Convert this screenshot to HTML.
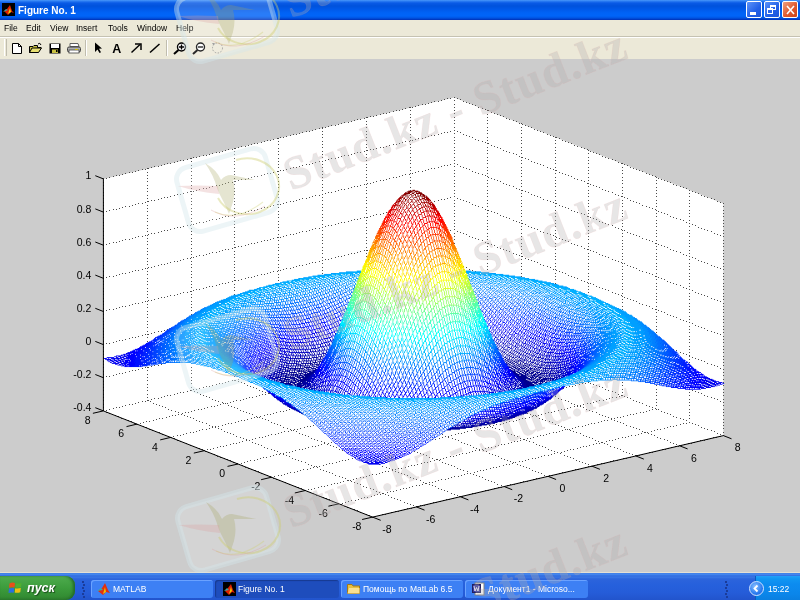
<!DOCTYPE html>
<html><head><meta charset="utf-8"><style>
*{margin:0;padding:0;box-sizing:border-box}
body{width:800px;height:600px;overflow:hidden;position:relative;background:#cccccc;font-family:"Liberation Sans",sans-serif}
.a{position:absolute}
</style></head><body>
<svg class="a" width="800" height="600" style="left:0;top:0" font-family="Liberation Sans" font-size="10.5">
<polygon fill="#fff" points="103.4,178.9 454.2,97.4 723.4,203.6 723.4,435.6 372.6,517.1 103.4,410.9"/>
<path d="M103 178.5h1M103 182.5h1M103 185.5h1M103 188.5h1M103 192.5h1M103 195.5h1M103 198.5h1M103 202.5h1M103 205.5h1M103 208.5h1M103 212.5h1M103 215.5h1M103 218.5h1M103 222.5h1M103 225.5h1M103 228.5h1M103 231.5h1M103 235.5h1M103 238.5h1M103 241.5h1M103 245.5h1M103 248.5h1M103 251.5h1M103 255.5h1M103 258.5h1M103 261.5h1M103 265.5h1M103 268.5h1M103 271.5h1M103 275.5h1M103 278.5h1M103 281.5h1M103 284.5h1M103 288.5h1M103 291.5h1M103 294.5h1M103 298.5h1M103 301.5h1M103 304.5h1M103 308.5h1M103 311.5h1M103 314.5h1M103 318.5h1M103 321.5h1M103 324.5h1M103 328.5h1M103 331.5h1M103 334.5h1M103 337.5h1M103 341.5h1M103 344.5h1M103 347.5h1M103 351.5h1M103 354.5h1M103 357.5h1M103 361.5h1M103 364.5h1M103 367.5h1M103 371.5h1M103 374.5h1M103 377.5h1M103 381.5h1M103 384.5h1M103 387.5h1M103 390.5h1M103 394.5h1M103 397.5h1M103 400.5h1M103 404.5h1M103 407.5h1M103 410.5h1M106 178.5h1M106 211.5h1M106 244.5h1M106 277.5h1M106 310.5h1M106 343.5h1M106 376.5h1M106 410.5h1M106 412.5h1M109 177.5h1M109 210.5h1M109 243.5h1M109 276.5h1M109 309.5h1M109 343.5h1M109 376.5h1M109 409.5h1M109 413.5h1M112 414.5h1M113 176.5h1M113 209.5h1M113 242.5h1M113 276.5h1M113 309.5h1M113 342.5h1M113 375.5h1M113 408.5h1M115 415.5h1M116 175.5h1M116 209.5h1M116 242.5h1M116 275.5h1M116 308.5h1M116 341.5h1M116 374.5h1M116 407.5h1M118 416.5h1M119 175.5h1M119 208.5h1M119 241.5h1M119 274.5h1M119 307.5h1M119 340.5h1M119 373.5h1M119 407.5h1M121 418.5h1M122 174.5h1M122 207.5h1M122 240.5h1M122 273.5h1M122 306.5h1M122 340.5h1M122 373.5h1M122 406.5h1M125 173.5h1M125 206.5h1M125 239.5h1M125 273.5h1M125 306.5h1M125 339.5h1M125 372.5h1M125 405.5h1M125 419.5h1M128 420.5h1M129 172.5h1M129 206.5h1M129 239.5h1M129 272.5h1M129 305.5h1M129 338.5h1M129 371.5h1M129 404.5h1M131 421.5h1M132 172.5h1M132 205.5h1M132 238.5h1M132 271.5h1M132 304.5h1M132 337.5h1M132 370.5h1M132 404.5h1M134 423.5h1M135 171.5h1M135 204.5h1M135 237.5h1M135 270.5h1M135 303.5h1M135 337.5h1M135 370.5h1M135 403.5h1M137 424.5h1M138 170.5h1M138 203.5h1M138 236.5h1M138 270.5h1M138 303.5h1M138 336.5h1M138 369.5h1M138 402.5h1M140 423.5h1M140 425.5h1M142 169.5h1M142 203.5h1M142 236.5h1M142 269.5h1M142 302.5h1M142 335.5h1M142 368.5h1M142 401.5h1M143 422.5h1M143 426.5h1M145 169.5h1M145 202.5h1M145 235.5h1M145 268.5h1M145 301.5h1M145 334.5h1M145 367.5h1M145 401.5h1M146 421.5h1M146 427.5h1M147 168.5h1M147 172.5h1M147 175.5h1M147 178.5h1M147 181.5h1M147 185.5h1M147 188.5h1M147 191.5h1M147 195.5h1M147 198.5h1M147 201.5h1M147 205.5h1M147 208.5h1M147 211.5h1M147 215.5h1M147 218.5h1M147 221.5h1M147 225.5h1M147 228.5h1M147 231.5h1M147 235.5h1M147 238.5h1M147 241.5h1M147 244.5h1M147 248.5h1M147 251.5h1M147 254.5h1M147 258.5h1M147 261.5h1M147 264.5h1M147 268.5h1M147 271.5h1M147 274.5h1M147 278.5h1M147 281.5h1M147 284.5h1M147 288.5h1M147 291.5h1M147 294.5h1M147 297.5h1M147 301.5h1M147 304.5h1M147 307.5h1M147 311.5h1M147 314.5h1M147 317.5h1M147 321.5h1M147 324.5h1M147 327.5h1M147 331.5h1M147 334.5h1M147 337.5h1M147 341.5h1M147 344.5h1M147 347.5h1M147 350.5h1M147 354.5h1M147 357.5h1M147 360.5h1M147 364.5h1M147 367.5h1M147 370.5h1M147 374.5h1M147 377.5h1M147 380.5h1M147 384.5h1M147 387.5h1M147 390.5h1M147 394.5h1M147 397.5h1M147 400.5h1M148 168.5h1M148 201.5h1M148 234.5h1M148 267.5h1M148 300.5h1M148 334.5h1M148 367.5h1M148 400.5h1M149 421.5h1M149 429.5h1M150 401.5h1M151 167.5h1M151 200.5h1M151 233.5h1M151 267.5h1M151 300.5h1M151 333.5h1M151 366.5h1M151 399.5h1M152 430.5h1M153 403.5h1M153 420.5h1M154 166.5h1M154 200.5h1M154 233.5h1M154 266.5h1M154 299.5h1M154 332.5h1M154 365.5h1M154 398.5h1M155 431.5h1M156 404.5h1M156 419.5h1M158 166.5h1M158 199.5h1M158 232.5h1M158 265.5h1M158 298.5h1M158 331.5h1M158 365.5h1M158 398.5h1M159 405.5h1M159 418.5h1M159 432.5h1M161 165.5h1M161 198.5h1M161 231.5h1M161 264.5h1M161 297.5h1M161 331.5h1M161 364.5h1M161 397.5h1M162 406.5h1M162 418.5h1M162 434.5h1M164 164.5h1M164 197.5h1M164 230.5h1M164 264.5h1M164 297.5h1M164 330.5h1M164 363.5h1M164 396.5h1M165 407.5h1M165 435.5h1M166 417.5h1M167 163.5h1M167 197.5h1M167 230.5h1M167 263.5h1M167 296.5h1M167 329.5h1M167 362.5h1M167 395.5h1M168 409.5h1M168 436.5h1M169 416.5h1M170 163.5h1M170 196.5h1M170 229.5h1M170 262.5h1M170 295.5h1M170 328.5h1M170 362.5h1M170 395.5h1M170 437.5h1M171 410.5h1M171 437.5h1M172 415.5h1M173 436.5h1M174 162.5h1M174 195.5h1M174 228.5h1M174 261.5h1M174 295.5h1M174 328.5h1M174 361.5h1M174 394.5h1M174 438.5h1M175 411.5h1M175 415.5h1M177 161.5h1M177 194.5h1M177 227.5h1M177 261.5h1M177 294.5h1M177 327.5h1M177 360.5h1M177 393.5h1M177 435.5h1M177 440.5h1M178 412.5h1M178 414.5h1M180 160.5h1M180 194.5h1M180 227.5h1M180 260.5h1M180 293.5h1M180 326.5h1M180 359.5h1M180 392.5h1M180 435.5h1M180 441.5h1M181 414.5h1M182 413.5h1M183 160.5h1M183 193.5h1M183 226.5h1M183 259.5h1M183 292.5h1M183 325.5h1M183 359.5h1M183 392.5h1M183 434.5h1M183 442.5h1M184 415.5h1M185 412.5h1M186 433.5h1M186 443.5h1M187 159.5h1M187 192.5h1M187 225.5h1M187 258.5h1M187 292.5h1M187 325.5h1M187 358.5h1M187 391.5h1M187 416.5h1M188 412.5h1M190 158.5h1M190 191.5h1M190 225.5h1M190 258.5h1M190 291.5h1M190 324.5h1M190 357.5h1M190 390.5h1M190 417.5h1M190 432.5h1M190 445.5h1M191 158.5h1M191 161.5h1M191 165.5h1M191 168.5h1M191 171.5h1M191 175.5h1M191 178.5h1M191 181.5h1M191 185.5h1M191 188.5h1M191 191.5h1M191 194.5h1M191 198.5h1M191 201.5h1M191 204.5h1M191 208.5h1M191 211.5h1M191 214.5h1M191 218.5h1M191 221.5h1M191 224.5h1M191 228.5h1M191 231.5h1M191 234.5h1M191 238.5h1M191 241.5h1M191 244.5h1M191 248.5h1M191 251.5h1M191 254.5h1M191 257.5h1M191 261.5h1M191 264.5h1M191 267.5h1M191 271.5h1M191 274.5h1M191 277.5h1M191 281.5h1M191 284.5h1M191 287.5h1M191 291.5h1M191 294.5h1M191 297.5h1M191 301.5h1M191 304.5h1M191 307.5h1M191 310.5h1M191 314.5h1M191 317.5h1M191 320.5h1M191 324.5h1M191 327.5h1M191 330.5h1M191 334.5h1M191 337.5h1M191 340.5h1M191 344.5h1M191 347.5h1M191 350.5h1M191 354.5h1M191 357.5h1M191 360.5h1M191 363.5h1M191 367.5h1M191 370.5h1M191 373.5h1M191 377.5h1M191 380.5h1M191 383.5h1M191 387.5h1M191 390.5h1M191 411.5h1M193 157.5h1M193 191.5h1M193 224.5h1M193 257.5h1M193 290.5h1M193 323.5h1M193 356.5h1M193 389.5h1M193 418.5h1M193 432.5h1M193 446.5h1M194 391.5h1M194 410.5h1M196 157.5h1M196 190.5h1M196 223.5h1M196 256.5h1M196 289.5h1M196 322.5h1M196 356.5h1M196 389.5h1M196 420.5h1M196 431.5h1M196 447.5h1M197 392.5h1M198 409.5h1M199 156.5h1M199 189.5h1M199 222.5h1M199 255.5h1M199 289.5h1M199 322.5h1M199 355.5h1M199 388.5h1M199 421.5h1M199 430.5h1M199 448.5h1M200 394.5h1M201 409.5h1M202 422.5h1M202 429.5h1M202 449.5h1M203 155.5h1M203 188.5h1M203 222.5h1M203 255.5h1M203 288.5h1M203 321.5h1M203 354.5h1M203 387.5h1M203 395.5h1M204 408.5h1M204 450.5h1M205 451.5h1M206 155.5h1M206 188.5h1M206 221.5h1M206 254.5h1M206 287.5h1M206 320.5h1M206 353.5h1M206 386.5h1M206 396.5h1M206 423.5h1M206 429.5h1M207 407.5h1M207 449.5h1M208 452.5h1M209 154.5h1M209 187.5h1M209 220.5h1M209 253.5h1M209 286.5h1M209 319.5h1M209 353.5h1M209 386.5h1M209 397.5h1M209 425.5h1M209 428.5h1M210 449.5h1M211 406.5h1M211 453.5h1M212 153.5h1M212 186.5h1M212 219.5h1M212 252.5h1M212 286.5h1M212 319.5h1M212 352.5h1M212 385.5h1M212 399.5h1M212 426.5h1M212 427.5h1M213 448.5h1M214 406.5h1M214 454.5h1M215 400.5h1M215 426.5h1M215 427.5h1M216 152.5h1M216 185.5h1M216 219.5h1M216 252.5h1M216 285.5h1M216 318.5h1M216 351.5h1M216 384.5h1M217 405.5h1M217 447.5h1M217 456.5h1M218 401.5h1M218 426.5h1M218 428.5h1M219 152.5h1M219 185.5h1M219 218.5h1M219 251.5h1M219 284.5h1M219 317.5h1M219 350.5h1M219 383.5h1M220 404.5h1M220 446.5h1M220 457.5h1M221 429.5h1M222 151.5h1M222 184.5h1M222 217.5h1M222 250.5h1M222 283.5h1M222 316.5h1M222 350.5h1M222 383.5h1M222 402.5h1M222 425.5h1M223 403.5h1M223 446.5h1M224 431.5h1M224 458.5h1M225 150.5h1M225 183.5h1M225 216.5h1M225 249.5h1M225 283.5h1M225 316.5h1M225 349.5h1M225 382.5h1M225 403.5h1M225 424.5h1M226 445.5h1M227 403.5h1M227 432.5h1M227 459.5h1M228 149.5h1M228 182.5h1M228 216.5h1M228 249.5h1M228 282.5h1M228 315.5h1M228 348.5h1M228 381.5h1M228 405.5h1M228 423.5h1M230 402.5h1M230 433.5h1M230 444.5h1M230 460.5h1M231 406.5h1M231 423.5h1M232 149.5h1M232 182.5h1M232 215.5h1M232 248.5h1M232 281.5h1M232 314.5h1M232 347.5h1M232 380.5h1M233 401.5h1M233 434.5h1M233 443.5h1M233 462.5h1M234 148.5h1M234 151.5h1M234 154.5h1M234 158.5h1M234 161.5h1M234 164.5h1M234 168.5h1M234 171.5h1M234 174.5h1M234 178.5h1M234 181.5h1M234 184.5h1M234 188.5h1M234 191.5h1M234 194.5h1M234 198.5h1M234 201.5h1M234 204.5h1M234 208.5h1M234 211.5h1M234 214.5h1M234 217.5h1M234 221.5h1M234 224.5h1M234 227.5h1M234 231.5h1M234 234.5h1M234 237.5h1M234 241.5h1M234 244.5h1M234 247.5h1M234 251.5h1M234 254.5h1M234 257.5h1M234 261.5h1M234 264.5h1M234 267.5h1M234 270.5h1M234 274.5h1M234 277.5h1M234 280.5h1M234 284.5h1M234 287.5h1M234 290.5h1M234 294.5h1M234 297.5h1M234 300.5h1M234 304.5h1M234 307.5h1M234 310.5h1M234 314.5h1M234 317.5h1M234 320.5h1M234 323.5h1M234 327.5h1M234 330.5h1M234 333.5h1M234 337.5h1M234 340.5h1M234 343.5h1M234 347.5h1M234 350.5h1M234 353.5h1M234 357.5h1M234 360.5h1M234 363.5h1M234 367.5h1M234 370.5h1M234 373.5h1M234 376.5h1M234 380.5h1M234 407.5h1M235 148.5h1M235 181.5h1M235 214.5h1M235 247.5h1M235 280.5h1M235 313.5h1M235 347.5h1M235 380.5h1M235 422.5h1M236 400.5h1M236 436.5h1M236 443.5h1M236 463.5h1M237 408.5h1M237 463.5h1M238 147.5h1M238 180.5h1M238 213.5h1M238 246.5h1M238 280.5h1M238 313.5h1M238 346.5h1M238 379.5h1M238 381.5h1M238 421.5h1M239 442.5h1M239 464.5h1M240 400.5h1M240 410.5h1M240 437.5h1M241 146.5h1M241 179.5h1M241 213.5h1M241 246.5h1M241 279.5h1M241 312.5h1M241 345.5h1M241 378.5h1M241 382.5h1M241 420.5h1M241 463.5h1M242 441.5h1M242 465.5h1M243 399.5h1M243 411.5h1M243 438.5h1M244 383.5h1M244 420.5h1M244 462.5h1M245 146.5h1M245 179.5h1M245 212.5h1M245 245.5h1M245 278.5h1M245 311.5h1M245 344.5h1M245 377.5h1M245 467.5h1M246 398.5h1M246 412.5h1M246 439.5h1M246 440.5h1M247 385.5h1M247 419.5h1M247 461.5h1M248 145.5h1M248 178.5h1M248 211.5h1M248 244.5h1M248 277.5h1M248 310.5h1M248 344.5h1M248 377.5h1M248 468.5h1M249 397.5h1M249 413.5h1M249 440.5h1M250 386.5h1M250 460.5h1M251 144.5h1M251 177.5h1M251 210.5h1M251 243.5h1M251 277.5h1M251 310.5h1M251 343.5h1M251 376.5h1M251 418.5h1M251 469.5h1M252 397.5h1M252 414.5h1M252 439.5h1M252 442.5h1M253 387.5h1M254 143.5h1M254 176.5h1M254 210.5h1M254 243.5h1M254 276.5h1M254 309.5h1M254 342.5h1M254 375.5h1M254 417.5h1M254 460.5h1M255 438.5h1M255 443.5h1M255 470.5h1M256 388.5h1M256 396.5h1M256 416.5h1M257 143.5h1M257 176.5h1M257 209.5h1M257 242.5h1M257 275.5h1M257 308.5h1M257 341.5h1M257 374.5h1M257 417.5h1M257 459.5h1M258 444.5h1M258 471.5h1M259 390.5h1M259 395.5h1M259 417.5h1M259 437.5h1M260 416.5h1M260 458.5h1M261 142.5h1M261 175.5h1M261 208.5h1M261 241.5h1M261 274.5h1M261 307.5h1M261 341.5h1M261 374.5h1M261 445.5h1M261 473.5h1M262 391.5h1M262 394.5h1M262 418.5h1M262 437.5h1M263 457.5h1M264 141.5h1M264 174.5h1M264 207.5h1M264 240.5h1M264 274.5h1M264 307.5h1M264 340.5h1M264 373.5h1M264 415.5h1M264 447.5h1M264 474.5h1M265 392.5h1M265 394.5h1M265 419.5h1M265 436.5h1M266 457.5h1M267 140.5h1M267 173.5h1M267 207.5h1M267 240.5h1M267 273.5h1M267 306.5h1M267 339.5h1M267 372.5h1M267 414.5h1M267 448.5h1M267 475.5h1M268 393.5h1M268 420.5h1M268 435.5h1M269 393.5h1M270 140.5h1M270 173.5h1M270 206.5h1M270 239.5h1M270 272.5h1M270 305.5h1M270 338.5h1M270 371.5h1M270 414.5h1M270 456.5h1M270 476.5h1M271 422.5h1M271 434.5h1M271 449.5h1M271 477.5h1M272 392.5h1M272 394.5h1M273 139.5h1M273 172.5h1M273 205.5h1M273 238.5h1M273 271.5h1M273 304.5h1M273 338.5h1M273 371.5h1M273 413.5h1M273 455.5h1M273 478.5h1M274 423.5h1M274 450.5h1M274 476.5h1M275 391.5h1M275 396.5h1M275 434.5h1M276 412.5h1M276 454.5h1M276 479.5h1M277 138.5h1M277 171.5h1M277 204.5h1M277 237.5h1M277 271.5h1M277 304.5h1M277 337.5h1M277 370.5h1M277 424.5h1M277 451.5h1M278 138.5h1M278 141.5h1M278 144.5h1M278 148.5h1M278 151.5h1M278 154.5h1M278 158.5h1M278 161.5h1M278 164.5h1M278 167.5h1M278 171.5h1M278 174.5h1M278 177.5h1M278 181.5h1M278 184.5h1M278 187.5h1M278 191.5h1M278 194.5h1M278 197.5h1M278 201.5h1M278 204.5h1M278 207.5h1M278 211.5h1M278 214.5h1M278 217.5h1M278 221.5h1M278 224.5h1M278 227.5h1M278 230.5h1M278 234.5h1M278 237.5h1M278 240.5h1M278 244.5h1M278 247.5h1M278 250.5h1M278 254.5h1M278 257.5h1M278 260.5h1M278 264.5h1M278 267.5h1M278 270.5h1M278 274.5h1M278 277.5h1M278 280.5h1M278 283.5h1M278 287.5h1M278 290.5h1M278 293.5h1M278 297.5h1M278 300.5h1M278 303.5h1M278 307.5h1M278 310.5h1M278 313.5h1M278 317.5h1M278 320.5h1M278 323.5h1M278 327.5h1M278 330.5h1M278 333.5h1M278 336.5h1M278 340.5h1M278 343.5h1M278 346.5h1M278 350.5h1M278 353.5h1M278 356.5h1M278 360.5h1M278 363.5h1M278 366.5h1M278 370.5h1M278 391.5h1M278 397.5h1M278 433.5h1M278 475.5h1M279 454.5h1M279 480.5h1M280 137.5h1M280 170.5h1M280 204.5h1M280 237.5h1M280 270.5h1M280 303.5h1M280 336.5h1M280 369.5h1M280 411.5h1M280 425.5h1M280 453.5h1M281 371.5h1M281 390.5h1M281 398.5h1M281 432.5h1M281 475.5h1M282 481.5h1M283 137.5h1M283 170.5h1M283 203.5h1M283 236.5h1M283 269.5h1M283 302.5h1M283 335.5h1M283 368.5h1M283 411.5h1M283 427.5h1M283 453.5h1M283 454.5h1M284 372.5h1M284 399.5h1M284 431.5h1M284 474.5h1M285 389.5h1M285 482.5h1M286 136.5h1M286 169.5h1M286 202.5h1M286 235.5h1M286 268.5h1M286 301.5h1M286 335.5h1M286 368.5h1M286 410.5h1M286 452.5h1M286 455.5h1M287 401.5h1M287 428.5h1M287 473.5h1M288 373.5h1M288 388.5h1M288 431.5h1M289 409.5h1M289 452.5h1M289 456.5h1M289 484.5h1M290 135.5h1M290 168.5h1M290 201.5h1M290 234.5h1M290 268.5h1M290 301.5h1M290 334.5h1M290 367.5h1M290 402.5h1M290 429.5h1M290 472.5h1M291 374.5h1M291 388.5h1M291 430.5h1M292 408.5h1M292 451.5h1M292 458.5h1M292 485.5h1M293 134.5h1M293 167.5h1M293 201.5h1M293 234.5h1M293 267.5h1M293 300.5h1M293 333.5h1M293 366.5h1M293 403.5h1M293 430.5h1M294 376.5h1M294 387.5h1M294 429.5h1M294 472.5h1M295 450.5h1M295 459.5h1M295 486.5h1M296 134.5h1M296 167.5h1M296 200.5h1M296 233.5h1M296 266.5h1M296 299.5h1M296 332.5h1M296 365.5h1M296 404.5h1M296 408.5h1M296 431.5h1M297 377.5h1M297 386.5h1M297 429.5h1M297 471.5h1M298 460.5h1M298 487.5h1M299 133.5h1M299 166.5h1M299 199.5h1M299 232.5h1M299 265.5h1M299 298.5h1M299 332.5h1M299 365.5h1M299 405.5h1M299 407.5h1M299 433.5h1M299 449.5h1M300 378.5h1M300 428.5h1M300 470.5h1M301 385.5h1M301 461.5h1M301 488.5h1M302 132.5h1M302 165.5h1M302 198.5h1M302 231.5h1M302 265.5h1M302 298.5h1M302 331.5h1M302 364.5h1M302 406.5h1M302 434.5h1M302 449.5h1M303 379.5h1M303 407.5h1M303 469.5h1M304 385.5h1M304 427.5h1M304 490.5h1M305 406.5h1M305 435.5h1M305 448.5h1M305 462.5h1M305 490.5h1M306 131.5h1M306 164.5h1M306 198.5h1M306 231.5h1M306 264.5h1M306 297.5h1M306 330.5h1M306 363.5h1M306 381.5h1M306 408.5h1M307 384.5h1M307 426.5h1M307 469.5h1M307 491.5h1M308 436.5h1M308 447.5h1M308 464.5h1M308 489.5h1M309 131.5h1M309 164.5h1M309 197.5h1M309 230.5h1M309 263.5h1M309 296.5h1M309 329.5h1M309 362.5h1M309 382.5h1M309 405.5h1M309 409.5h1M310 383.5h1M310 426.5h1M310 468.5h1M310 492.5h1M311 438.5h1M311 465.5h1M311 489.5h1M312 130.5h1M312 163.5h1M312 196.5h1M312 229.5h1M312 262.5h1M312 295.5h1M312 329.5h1M312 362.5h1M312 383.5h1M312 404.5h1M312 410.5h1M312 446.5h1M313 425.5h1M313 467.5h1M313 493.5h1M314 383.5h1M314 439.5h1M314 466.5h1M314 488.5h1M315 129.5h1M315 162.5h1M315 195.5h1M315 228.5h1M315 262.5h1M315 295.5h1M315 328.5h1M315 361.5h1M315 384.5h1M315 403.5h1M315 412.5h1M315 446.5h1M316 424.5h1M316 466.5h1M316 495.5h1M317 382.5h1M317 440.5h1M317 467.5h1M318 403.5h1M318 413.5h1M318 445.5h1M318 487.5h1M319 128.5h1M319 161.5h1M319 195.5h1M319 228.5h1M319 261.5h1M319 294.5h1M319 327.5h1M319 360.5h1M319 385.5h1M319 466.5h1M319 496.5h1M320 381.5h1M320 423.5h1M320 469.5h1M321 402.5h1M321 414.5h1M321 441.5h1M321 444.5h1M321 486.5h1M322 127.5h1M322 128.5h1M322 131.5h1M322 134.5h1M322 137.5h1M322 141.5h1M322 144.5h1M322 147.5h1M322 151.5h1M322 154.5h1M322 157.5h1M322 161.5h1M322 164.5h1M322 167.5h1M322 171.5h1M322 174.5h1M322 177.5h1M322 180.5h1M322 184.5h1M322 187.5h1M322 190.5h1M322 194.5h1M322 197.5h1M322 200.5h1M322 204.5h1M322 207.5h1M322 210.5h1M322 214.5h1M322 217.5h1M322 220.5h1M322 224.5h1M322 227.5h1M322 230.5h1M322 234.5h1M322 237.5h1M322 240.5h1M322 243.5h1M322 247.5h1M322 250.5h1M322 253.5h1M322 257.5h1M322 260.5h1M322 263.5h1M322 267.5h1M322 270.5h1M322 273.5h1M322 277.5h1M322 280.5h1M322 283.5h1M322 287.5h1M322 290.5h1M322 293.5h1M322 296.5h1M322 300.5h1M322 303.5h1M322 306.5h1M322 310.5h1M322 313.5h1M322 316.5h1M322 320.5h1M322 323.5h1M322 326.5h1M322 330.5h1M322 333.5h1M322 336.5h1M322 340.5h1M322 343.5h1M322 346.5h1M322 349.5h1M322 353.5h1M322 356.5h1M322 359.5h1M322 360.5h1M322 387.5h1M323 380.5h1M323 423.5h1M323 465.5h1M323 470.5h1M323 497.5h1M324 415.5h1M324 442.5h1M324 443.5h1M324 486.5h1M325 127.5h1M325 160.5h1M325 193.5h1M325 226.5h1M325 259.5h1M325 292.5h1M325 326.5h1M325 359.5h1M325 361.5h1M325 388.5h1M325 401.5h1M326 380.5h1M326 422.5h1M326 464.5h1M326 471.5h1M326 498.5h1M327 416.5h1M327 444.5h1M327 485.5h1M328 126.5h1M328 159.5h1M328 192.5h1M328 225.5h1M328 259.5h1M328 292.5h1M328 325.5h1M328 358.5h1M328 362.5h1M328 389.5h1M328 400.5h1M328 443.5h1M329 421.5h1M329 463.5h1M329 472.5h1M329 499.5h1M330 379.5h1M330 418.5h1M330 445.5h1M331 125.5h1M331 158.5h1M331 192.5h1M331 225.5h1M331 258.5h1M331 291.5h1M331 324.5h1M331 357.5h1M331 363.5h1M331 390.5h1M331 400.5h1M331 442.5h1M331 484.5h1M332 463.5h1M332 473.5h1M332 501.5h1M333 378.5h1M333 419.5h1M333 420.5h1M333 446.5h1M334 392.5h1M334 399.5h1M334 441.5h1M334 483.5h1M335 125.5h1M335 158.5h1M335 191.5h1M335 224.5h1M335 257.5h1M335 290.5h1M335 323.5h1M335 357.5h1M335 364.5h1M335 475.5h1M335 502.5h1M336 377.5h1M336 420.5h1M336 447.5h1M336 462.5h1M337 393.5h1M337 420.5h1M337 440.5h1M337 483.5h1M338 124.5h1M338 157.5h1M338 190.5h1M338 223.5h1M338 256.5h1M338 289.5h1M338 323.5h1M338 356.5h1M338 366.5h1M338 398.5h1M338 503.5h1M339 377.5h1M339 419.5h1M339 449.5h1M339 461.5h1M339 476.5h1M340 394.5h1M340 421.5h1M340 440.5h1M340 482.5h1M341 123.5h1M341 156.5h1M341 189.5h1M341 222.5h1M341 256.5h1M341 289.5h1M341 322.5h1M341 355.5h1M341 367.5h1M341 397.5h1M341 504.5h1M342 418.5h1M342 450.5h1M342 460.5h1M342 477.5h1M342 503.5h1M343 376.5h1M343 395.5h1M343 423.5h1M343 481.5h1M344 122.5h1M344 155.5h1M344 189.5h1M344 222.5h1M344 255.5h1M344 288.5h1M344 321.5h1M344 354.5h1M344 368.5h1M344 397.5h1M344 439.5h1M344 506.5h1M345 417.5h1M345 451.5h1M345 460.5h1M345 478.5h1M345 502.5h1M346 375.5h1M346 396.5h1M346 424.5h1M347 369.5h1M347 396.5h1M347 438.5h1M347 480.5h1M347 507.5h1M348 122.5h1M348 155.5h1M348 188.5h1M348 221.5h1M348 254.5h1M348 287.5h1M348 320.5h1M348 354.5h1M348 452.5h1M348 459.5h1M348 480.5h1M348 501.5h1M349 374.5h1M349 398.5h1M349 417.5h1M349 425.5h1M350 370.5h1M350 395.5h1M350 437.5h1M350 480.5h1M350 508.5h1M351 121.5h1M351 154.5h1M351 187.5h1M351 220.5h1M351 253.5h1M351 287.5h1M351 320.5h1M351 353.5h1M351 453.5h1M351 481.5h1M351 500.5h1M352 374.5h1M352 416.5h1M352 426.5h1M352 458.5h1M353 372.5h1M353 399.5h1M353 437.5h1M353 479.5h1M354 120.5h1M354 153.5h1M354 186.5h1M354 219.5h1M354 253.5h1M354 286.5h1M354 319.5h1M354 352.5h1M354 394.5h1M354 482.5h1M354 509.5h1M355 373.5h1M355 415.5h1M355 427.5h1M355 455.5h1M355 457.5h1M355 500.5h1M356 373.5h1M356 400.5h1M356 478.5h1M357 119.5h1M357 152.5h1M357 186.5h1M357 219.5h1M357 252.5h1M357 285.5h1M357 318.5h1M357 351.5h1M357 394.5h1M357 436.5h1M357 483.5h1M357 510.5h1M358 414.5h1M358 429.5h1M358 456.5h1M358 457.5h1M358 499.5h1M359 372.5h1M359 374.5h1M359 401.5h1M360 119.5h1M360 152.5h1M360 185.5h1M360 218.5h1M360 251.5h1M360 284.5h1M360 317.5h1M360 351.5h1M360 393.5h1M360 435.5h1M360 477.5h1M360 484.5h1M360 512.5h1M361 430.5h1M361 456.5h1M361 457.5h1M361 498.5h1M362 371.5h1M362 375.5h1M362 403.5h1M362 414.5h1M363 392.5h1M363 434.5h1M363 477.5h1M363 486.5h1M363 513.5h1M364 118.5h1M364 151.5h1M364 184.5h1M364 217.5h1M364 250.5h1M364 284.5h1M364 317.5h1M364 350.5h1M364 431.5h1M364 455.5h1M364 458.5h1M364 497.5h1M365 371.5h1M365 377.5h1M365 404.5h1M365 413.5h1M366 117.5h1M366 121.5h1M366 124.5h1M366 127.5h1M366 131.5h1M366 134.5h1M366 137.5h1M366 140.5h1M366 144.5h1M366 147.5h1M366 150.5h1M366 154.5h1M366 157.5h1M366 160.5h1M366 164.5h1M366 167.5h1M366 170.5h1M366 174.5h1M366 177.5h1M366 180.5h1M366 184.5h1M366 187.5h1M366 190.5h1M366 193.5h1M366 197.5h1M366 200.5h1M366 203.5h1M366 207.5h1M366 210.5h1M366 213.5h1M366 217.5h1M366 220.5h1M366 223.5h1M366 227.5h1M366 230.5h1M366 233.5h1M366 237.5h1M366 240.5h1M366 243.5h1M366 247.5h1M366 250.5h1M366 253.5h1M366 256.5h1M366 260.5h1M366 263.5h1M366 266.5h1M366 270.5h1M366 273.5h1M366 276.5h1M366 280.5h1M366 283.5h1M366 286.5h1M366 290.5h1M366 293.5h1M366 296.5h1M366 300.5h1M366 303.5h1M366 306.5h1M366 309.5h1M366 313.5h1M366 316.5h1M366 319.5h1M366 323.5h1M366 326.5h1M366 329.5h1M366 333.5h1M366 336.5h1M366 339.5h1M366 343.5h1M366 346.5h1M366 349.5h1M366 434.5h1M366 476.5h1M366 487.5h1M366 514.5h1M367 117.5h1M367 150.5h1M367 183.5h1M367 217.5h1M367 250.5h1M367 283.5h1M367 316.5h1M367 349.5h1M367 391.5h1M367 460.5h1M367 497.5h1M368 370.5h1M368 405.5h1M368 412.5h1M368 432.5h1M368 454.5h1M369 350.5h1M369 378.5h1M369 433.5h1M369 475.5h1M369 515.5h1M370 116.5h1M370 149.5h1M370 183.5h1M370 216.5h1M370 249.5h1M370 282.5h1M370 315.5h1M370 348.5h1M370 391.5h1M370 461.5h1M370 488.5h1M371 369.5h1M371 406.5h1M371 411.5h1M371 434.5h1M371 454.5h1M371 496.5h1M372 352.5h1M372 379.5h1M372 474.5h1M372 517.5h1M373 116.5h1M373 149.5h1M373 182.5h1M373 215.5h1M373 248.5h1M373 281.5h1M373 314.5h1M373 348.5h1M373 390.5h1M373 432.5h1M373 462.5h1M373 489.5h1M374 407.5h1M374 411.5h1M374 435.5h1M374 453.5h1M374 495.5h1M375 353.5h1M375 368.5h1M375 380.5h1M375 516.5h1M376 115.5h1M376 148.5h1M376 181.5h1M376 214.5h1M376 247.5h1M376 281.5h1M376 314.5h1M376 347.5h1M376 389.5h1M376 431.5h1M376 463.5h1M376 474.5h1M376 491.5h1M377 409.5h1M377 436.5h1M377 452.5h1M377 494.5h1M378 354.5h1M378 368.5h1M378 381.5h1M378 410.5h1M379 388.5h1M379 431.5h1M379 464.5h1M379 473.5h1M379 492.5h1M379 515.5h1M380 114.5h1M380 147.5h1M380 180.5h1M380 214.5h1M380 247.5h1M380 280.5h1M380 313.5h1M380 346.5h1M380 410.5h1M380 437.5h1M380 494.5h1M381 355.5h1M381 367.5h1M381 383.5h1M381 409.5h1M381 451.5h1M382 430.5h1M382 466.5h1M382 472.5h1M382 493.5h1M382 514.5h1M383 113.5h1M383 147.5h1M383 180.5h1M383 213.5h1M383 246.5h1M383 279.5h1M383 312.5h1M383 345.5h1M383 388.5h1M383 438.5h1M383 493.5h1M384 366.5h1M384 384.5h1M384 408.5h1M384 411.5h1M384 451.5h1M385 357.5h1M385 471.5h1M385 494.5h1M385 514.5h1M386 113.5h1M386 146.5h1M386 179.5h1M386 212.5h1M386 245.5h1M386 278.5h1M386 311.5h1M386 345.5h1M386 387.5h1M386 429.5h1M386 440.5h1M386 467.5h1M387 385.5h1M387 408.5h1M387 412.5h1M387 450.5h1M387 492.5h1M388 358.5h1M388 365.5h1M388 471.5h1M388 495.5h1M388 513.5h1M389 112.5h1M389 145.5h1M389 178.5h1M389 211.5h1M389 244.5h1M389 278.5h1M389 311.5h1M389 344.5h1M389 386.5h1M389 428.5h1M389 441.5h1M389 468.5h1M390 386.5h1M390 414.5h1M390 449.5h1M390 491.5h1M391 359.5h1M391 365.5h1M391 407.5h1M391 497.5h1M391 512.5h1M392 385.5h1M392 428.5h1M392 442.5h1M392 469.5h1M392 470.5h1M393 111.5h1M393 144.5h1M393 177.5h1M393 211.5h1M393 244.5h1M393 277.5h1M393 310.5h1M393 343.5h1M393 387.5h1M393 415.5h1M393 448.5h1M393 491.5h1M394 360.5h1M394 364.5h1M394 406.5h1M394 498.5h1M395 385.5h1M395 427.5h1M395 443.5h1M395 469.5h1M395 471.5h1M395 511.5h1M396 110.5h1M396 144.5h1M396 177.5h1M396 210.5h1M396 243.5h1M396 276.5h1M396 309.5h1M396 342.5h1M396 389.5h1M396 416.5h1M396 490.5h1M397 361.5h1M397 363.5h1M397 405.5h1M397 448.5h1M397 499.5h1M398 426.5h1M398 444.5h1M398 468.5h1M398 472.5h1M398 511.5h1M399 110.5h1M399 143.5h1M399 176.5h1M399 209.5h1M399 242.5h1M399 275.5h1M399 308.5h1M399 342.5h1M399 384.5h1M399 417.5h1M400 362.5h1M400 363.5h1M400 390.5h1M400 405.5h1M400 447.5h1M400 489.5h1M400 500.5h1M401 468.5h1M401 473.5h1M401 510.5h1M402 109.5h1M402 142.5h1M402 175.5h1M402 208.5h1M402 241.5h1M402 275.5h1M402 308.5h1M402 341.5h1M402 383.5h1M402 418.5h1M402 425.5h1M402 446.5h1M403 364.5h1M403 391.5h1M403 404.5h1M403 446.5h1M403 488.5h1M404 362.5h1M404 474.5h1M404 502.5h1M404 509.5h1M405 108.5h1M405 141.5h1M405 174.5h1M405 208.5h1M405 241.5h1M405 274.5h1M405 307.5h1M405 340.5h1M405 382.5h1M405 420.5h1M405 425.5h1M405 447.5h1M405 467.5h1M406 365.5h1M406 392.5h1M406 445.5h1M406 488.5h1M407 361.5h1M407 403.5h1M407 475.5h1M407 503.5h1M407 508.5h1M408 382.5h1M408 421.5h1M408 424.5h1M408 448.5h1M408 466.5h1M409 107.5h1M409 141.5h1M409 174.5h1M409 207.5h1M409 240.5h1M409 273.5h1M409 306.5h1M409 339.5h1M409 366.5h1M409 394.5h1M409 487.5h1M410 107.5h1M410 110.5h1M410 114.5h1M410 117.5h1M410 120.5h1M410 124.5h1M410 127.5h1M410 130.5h1M410 134.5h1M410 137.5h1M410 140.5h1M410 144.5h1M410 147.5h1M410 150.5h1M410 153.5h1M410 157.5h1M410 160.5h1M410 163.5h1M410 167.5h1M410 170.5h1M410 173.5h1M410 177.5h1M410 180.5h1M410 183.5h1M410 187.5h1M410 190.5h1M410 193.5h1M410 197.5h1M410 200.5h1M410 203.5h1M410 207.5h1M410 210.5h1M410 213.5h1M410 216.5h1M410 220.5h1M410 223.5h1M410 226.5h1M410 230.5h1M410 233.5h1M410 236.5h1M410 240.5h1M410 243.5h1M410 246.5h1M410 250.5h1M410 253.5h1M410 256.5h1M410 260.5h1M410 263.5h1M410 266.5h1M410 269.5h1M410 273.5h1M410 276.5h1M410 279.5h1M410 283.5h1M410 286.5h1M410 289.5h1M410 293.5h1M410 296.5h1M410 299.5h1M410 303.5h1M410 306.5h1M410 309.5h1M410 313.5h1M410 316.5h1M410 319.5h1M410 322.5h1M410 326.5h1M410 329.5h1M410 332.5h1M410 336.5h1M410 339.5h1M410 360.5h1M410 402.5h1M410 445.5h1M410 477.5h1M410 504.5h1M411 422.5h1M411 423.5h1M411 449.5h1M411 465.5h1M411 508.5h1M412 107.5h1M412 140.5h1M412 173.5h1M412 206.5h1M412 239.5h1M412 272.5h1M412 305.5h1M412 339.5h1M412 368.5h1M412 381.5h1M412 395.5h1M412 486.5h1M413 340.5h1M413 359.5h1M413 402.5h1M413 444.5h1M413 478.5h1M413 505.5h1M414 423.5h1M414 451.5h1M414 465.5h1M414 507.5h1M415 106.5h1M415 139.5h1M415 172.5h1M415 205.5h1M415 238.5h1M415 272.5h1M415 305.5h1M415 338.5h1M415 380.5h1M415 396.5h1M415 422.5h1M416 341.5h1M416 369.5h1M416 401.5h1M416 443.5h1M416 479.5h1M416 485.5h1M416 506.5h1M417 359.5h1M417 452.5h1M417 464.5h1M417 506.5h1M418 105.5h1M418 138.5h1M418 171.5h1M418 205.5h1M418 238.5h1M418 271.5h1M418 304.5h1M418 337.5h1M418 379.5h1M418 397.5h1M418 422.5h1M418 425.5h1M419 343.5h1M419 370.5h1M419 400.5h1M419 442.5h1M419 485.5h1M420 358.5h1M420 453.5h1M420 480.5h1M420 505.5h1M421 379.5h1M421 398.5h1M421 421.5h1M421 426.5h1M421 463.5h1M422 104.5h1M422 138.5h1M422 171.5h1M422 204.5h1M422 237.5h1M422 270.5h1M422 303.5h1M422 336.5h1M422 344.5h1M422 371.5h1M422 442.5h1M422 484.5h1M423 357.5h1M423 399.5h1M423 454.5h1M423 482.5h1M424 378.5h1M424 400.5h1M424 420.5h1M424 427.5h1M424 462.5h1M424 505.5h1M425 104.5h1M425 137.5h1M425 170.5h1M425 203.5h1M425 236.5h1M425 269.5h1M425 302.5h1M425 336.5h1M425 345.5h1M425 372.5h1M425 483.5h1M426 356.5h1M426 399.5h1M426 441.5h1M426 455.5h1M426 483.5h1M427 401.5h1M427 419.5h1M427 428.5h1M427 462.5h1M427 504.5h1M428 103.5h1M428 136.5h1M428 169.5h1M428 202.5h1M428 235.5h1M428 269.5h1M428 302.5h1M428 335.5h1M428 346.5h1M428 374.5h1M428 377.5h1M429 356.5h1M429 398.5h1M429 440.5h1M429 457.5h1M429 482.5h1M429 484.5h1M430 402.5h1M430 429.5h1M430 461.5h1M430 503.5h1M431 102.5h1M431 135.5h1M431 168.5h1M431 202.5h1M431 235.5h1M431 268.5h1M431 301.5h1M431 334.5h1M431 375.5h1M431 376.5h1M431 419.5h1M432 348.5h1M432 397.5h1M432 439.5h1M432 458.5h1M432 482.5h1M432 485.5h1M433 355.5h1M433 431.5h1M433 502.5h1M434 101.5h1M434 135.5h1M434 168.5h1M434 201.5h1M434 234.5h1M434 267.5h1M434 300.5h1M434 333.5h1M434 376.5h1M434 403.5h1M434 418.5h1M434 460.5h1M435 349.5h1M435 439.5h1M435 481.5h1M435 486.5h1M436 354.5h1M436 396.5h1M436 432.5h1M436 459.5h1M436 502.5h1M437 375.5h1M437 377.5h1M437 405.5h1M437 417.5h1M437 459.5h1M438 101.5h1M438 134.5h1M438 167.5h1M438 200.5h1M438 233.5h1M438 266.5h1M438 299.5h1M438 333.5h1M438 350.5h1M438 480.5h1M438 488.5h1M439 353.5h1M439 396.5h1M439 433.5h1M439 438.5h1M439 460.5h1M440 379.5h1M440 406.5h1M440 416.5h1M440 459.5h1M440 501.5h1M441 100.5h1M441 133.5h1M441 166.5h1M441 199.5h1M441 232.5h1M441 266.5h1M441 299.5h1M441 332.5h1M441 351.5h1M441 374.5h1M441 479.5h1M441 489.5h1M442 353.5h1M442 395.5h1M442 434.5h1M442 437.5h1M442 462.5h1M443 380.5h1M443 407.5h1M443 416.5h1M443 458.5h1M443 500.5h1M444 99.5h1M444 132.5h1M444 165.5h1M444 199.5h1M444 232.5h1M444 265.5h1M444 298.5h1M444 331.5h1M444 352.5h1M444 373.5h1M444 490.5h1M445 394.5h1M445 436.5h1M445 463.5h1M445 479.5h1M446 352.5h1M446 381.5h1M446 408.5h1M446 457.5h1M446 499.5h1M447 98.5h1M447 132.5h1M447 165.5h1M447 198.5h1M447 231.5h1M447 264.5h1M447 297.5h1M447 330.5h1M447 354.5h1M447 373.5h1M447 415.5h1M447 491.5h1M448 393.5h1M448 436.5h1M448 437.5h1M448 464.5h1M448 478.5h1M449 351.5h1M449 409.5h1M449 499.5h1M450 98.5h1M450 131.5h1M450 164.5h1M450 197.5h1M450 230.5h1M450 263.5h1M450 296.5h1M450 330.5h1M450 355.5h1M450 372.5h1M450 382.5h1M450 414.5h1M450 456.5h1M451 435.5h1M451 465.5h1M451 477.5h1M451 493.5h1M452 350.5h1M452 393.5h1M452 411.5h1M452 438.5h1M453 356.5h1M453 371.5h1M453 383.5h1M453 413.5h1M453 456.5h1M453 498.5h1M454 97.5h1M454 100.5h1M454 104.5h1M454 107.5h1M454 110.5h1M454 113.5h1M454 117.5h1M454 120.5h1M454 123.5h1M454 127.5h1M454 130.5h1M454 133.5h1M454 137.5h1M454 140.5h1M454 143.5h1M454 147.5h1M454 150.5h1M454 153.5h1M454 157.5h1M454 160.5h1M454 163.5h1M454 166.5h1M454 170.5h1M454 173.5h1M454 176.5h1M454 180.5h1M454 183.5h1M454 186.5h1M454 190.5h1M454 193.5h1M454 196.5h1M454 200.5h1M454 203.5h1M454 206.5h1M454 210.5h1M454 213.5h1M454 216.5h1M454 220.5h1M454 223.5h1M454 226.5h1M454 229.5h1M454 233.5h1M454 236.5h1M454 239.5h1M454 243.5h1M454 246.5h1M454 249.5h1M454 253.5h1M454 256.5h1M454 259.5h1M454 263.5h1M454 266.5h1M454 269.5h1M454 273.5h1M454 276.5h1M454 279.5h1M454 282.5h1M454 286.5h1M454 289.5h1M454 292.5h1M454 296.5h1M454 299.5h1M454 302.5h1M454 306.5h1M454 309.5h1M454 312.5h1M454 316.5h1M454 319.5h1M454 322.5h1M454 326.5h1M454 329.5h1M454 466.5h1M454 476.5h1M454 494.5h1M455 350.5h1M455 392.5h1M455 412.5h1M455 434.5h1M455 439.5h1M456 357.5h1M456 385.5h1M456 413.5h1M456 455.5h1M456 497.5h1M457 98.5h1M457 131.5h1M457 164.5h1M457 198.5h1M457 231.5h1M457 264.5h1M457 297.5h1M457 330.5h1M457 370.5h1M457 468.5h1M457 495.5h1M458 349.5h1M458 391.5h1M458 413.5h1M458 433.5h1M458 440.5h1M458 476.5h1M459 359.5h1M459 386.5h1M459 454.5h1M459 496.5h1M460 99.5h1M460 132.5h1M460 166.5h1M460 199.5h1M460 232.5h1M460 265.5h1M460 298.5h1M460 331.5h1M460 370.5h1M460 412.5h1M460 469.5h1M460 496.5h1M461 390.5h1M461 414.5h1M461 433.5h1M461 442.5h1M461 475.5h1M462 348.5h1M462 360.5h1M462 387.5h1M462 453.5h1M462 496.5h1M463 101.5h1M463 134.5h1M463 167.5h1M463 200.5h1M463 233.5h1M463 266.5h1M463 299.5h1M463 333.5h1M463 369.5h1M463 411.5h1M463 470.5h1M464 416.5h1M464 432.5h1M464 443.5h1M464 474.5h1M465 347.5h1M465 388.5h1M465 390.5h1M465 495.5h1M466 102.5h1M466 135.5h1M466 168.5h1M466 201.5h1M466 234.5h1M466 267.5h1M466 301.5h1M466 334.5h1M466 361.5h1M466 368.5h1M466 410.5h1M466 453.5h1M467 431.5h1M467 444.5h1M467 471.5h1M467 473.5h1M468 347.5h1M468 389.5h1M468 390.5h1M468 417.5h1M469 103.5h1M469 136.5h1M469 169.5h1M469 202.5h1M469 236.5h1M469 269.5h1M469 302.5h1M469 335.5h1M469 362.5h1M469 410.5h1M469 452.5h1M469 494.5h1M470 367.5h1M470 445.5h1M470 473.5h1M471 346.5h1M471 388.5h1M471 391.5h1M471 418.5h1M471 430.5h1M472 104.5h1M472 137.5h1M472 171.5h1M472 204.5h1M472 237.5h1M472 270.5h1M472 303.5h1M472 336.5h1M472 363.5h1M472 409.5h1M472 451.5h1M472 493.5h1M473 367.5h1M473 447.5h1M473 474.5h1M474 345.5h1M474 387.5h1M474 392.5h1M474 419.5h1M474 430.5h1M474 472.5h1M475 105.5h1M475 139.5h1M475 172.5h1M475 205.5h1M475 238.5h1M475 271.5h1M475 304.5h1M475 337.5h1M475 365.5h1M475 450.5h1M475 493.5h1M476 366.5h1M476 408.5h1M476 448.5h1M476 475.5h1M477 387.5h1M477 393.5h1M477 420.5h1M477 429.5h1M477 471.5h1M478 107.5h1M478 140.5h1M478 173.5h1M478 206.5h1M478 239.5h1M478 272.5h1M478 305.5h1M478 339.5h1M478 344.5h1M478 366.5h1M478 492.5h1M479 365.5h1M479 407.5h1M479 449.5h1M479 450.5h1M479 476.5h1M480 394.5h1M480 422.5h1M480 428.5h1M480 470.5h1M481 344.5h1M481 367.5h1M481 386.5h1M482 108.5h1M482 141.5h1M482 174.5h1M482 207.5h1M482 240.5h1M482 274.5h1M482 307.5h1M482 340.5h1M482 364.5h1M482 407.5h1M482 449.5h1M482 477.5h1M482 491.5h1M483 423.5h1M483 450.5h1M483 470.5h1M484 343.5h1M484 368.5h1M484 385.5h1M484 396.5h1M484 427.5h1M485 109.5h1M485 142.5h1M485 175.5h1M485 209.5h1M485 242.5h1M485 275.5h1M485 308.5h1M485 341.5h1M485 406.5h1M485 448.5h1M485 479.5h1M485 490.5h1M486 364.5h1M486 424.5h1M486 451.5h1M486 469.5h1M487 110.5h1M487 114.5h1M487 117.5h1M487 120.5h1M487 123.5h1M487 127.5h1M487 130.5h1M487 133.5h1M487 137.5h1M487 140.5h1M487 143.5h1M487 147.5h1M487 150.5h1M487 153.5h1M487 157.5h1M487 160.5h1M487 163.5h1M487 167.5h1M487 170.5h1M487 173.5h1M487 176.5h1M487 180.5h1M487 183.5h1M487 186.5h1M487 190.5h1M487 193.5h1M487 196.5h1M487 200.5h1M487 203.5h1M487 206.5h1M487 210.5h1M487 213.5h1M487 216.5h1M487 220.5h1M487 223.5h1M487 226.5h1M487 229.5h1M487 233.5h1M487 236.5h1M487 239.5h1M487 243.5h1M487 246.5h1M487 249.5h1M487 253.5h1M487 256.5h1M487 259.5h1M487 263.5h1M487 266.5h1M487 269.5h1M487 273.5h1M487 276.5h1M487 279.5h1M487 282.5h1M487 286.5h1M487 289.5h1M487 292.5h1M487 296.5h1M487 299.5h1M487 302.5h1M487 306.5h1M487 309.5h1M487 312.5h1M487 316.5h1M487 319.5h1M487 322.5h1M487 326.5h1M487 329.5h1M487 332.5h1M487 335.5h1M487 339.5h1M487 342.5h1M487 370.5h1M487 384.5h1M487 397.5h1M487 427.5h1M488 110.5h1M488 143.5h1M488 177.5h1M488 210.5h1M488 243.5h1M488 276.5h1M488 309.5h1M488 342.5h1M488 447.5h1M488 480.5h1M488 490.5h1M489 363.5h1M489 405.5h1M489 425.5h1M489 453.5h1M490 371.5h1M490 384.5h1M490 398.5h1M490 426.5h1M490 468.5h1M491 112.5h1M491 145.5h1M491 178.5h1M491 211.5h1M491 244.5h1M491 277.5h1M491 310.5h1M491 343.5h1M491 447.5h1M491 481.5h1M491 489.5h1M492 362.5h1M492 404.5h1M492 427.5h1M492 454.5h1M493 372.5h1M493 399.5h1M493 425.5h1M493 467.5h1M494 113.5h1M494 146.5h1M494 179.5h1M494 212.5h1M494 245.5h1M494 278.5h1M494 312.5h1M494 345.5h1M494 383.5h1M494 482.5h1M494 488.5h1M495 361.5h1M495 404.5h1M495 428.5h1M495 446.5h1M495 455.5h1M496 373.5h1M496 401.5h1M496 424.5h1M496 467.5h1M497 114.5h1M497 147.5h1M497 180.5h1M497 213.5h1M497 247.5h1M497 280.5h1M497 313.5h1M497 346.5h1M497 382.5h1M497 484.5h1M498 361.5h1M498 403.5h1M498 445.5h1M498 456.5h1M498 487.5h1M499 402.5h1M499 429.5h1M499 466.5h1M500 115.5h1M500 148.5h1M500 181.5h1M500 215.5h1M500 248.5h1M500 281.5h1M500 314.5h1M500 347.5h1M500 374.5h1M500 381.5h1M500 424.5h1M501 402.5h1M501 444.5h1M501 458.5h1M501 485.5h1M501 487.5h1M502 360.5h1M502 403.5h1M502 430.5h1M503 116.5h1M503 150.5h1M503 183.5h1M503 216.5h1M503 249.5h1M503 282.5h1M503 315.5h1M503 348.5h1M503 376.5h1M503 381.5h1M503 423.5h1M503 465.5h1M504 444.5h1M504 459.5h1M504 486.5h1M505 359.5h1M505 401.5h1M505 404.5h1M505 431.5h1M506 118.5h1M506 151.5h1M506 184.5h1M506 217.5h1M506 250.5h1M506 283.5h1M506 316.5h1M506 350.5h1M506 377.5h1M506 380.5h1M506 422.5h1M506 464.5h1M507 460.5h1M507 485.5h1M508 358.5h1M508 401.5h1M508 405.5h1M508 433.5h1M508 443.5h1M509 119.5h1M509 152.5h1M509 185.5h1M509 218.5h1M509 251.5h1M509 285.5h1M509 318.5h1M509 351.5h1M509 378.5h1M509 421.5h1M509 464.5h1M510 379.5h1M510 461.5h1M510 484.5h1M511 358.5h1M511 400.5h1M511 407.5h1M511 434.5h1M511 442.5h1M512 379.5h1M512 463.5h1M513 120.5h1M513 153.5h1M513 186.5h1M513 220.5h1M513 253.5h1M513 286.5h1M513 319.5h1M513 352.5h1M513 378.5h1M513 421.5h1M513 462.5h1M514 399.5h1M514 435.5h1M514 441.5h1M514 484.5h1M515 357.5h1M515 381.5h1M515 408.5h1M515 462.5h1M516 121.5h1M516 154.5h1M516 188.5h1M516 221.5h1M516 254.5h1M516 287.5h1M516 320.5h1M516 353.5h1M516 378.5h1M516 420.5h1M517 436.5h1M517 441.5h1M517 464.5h1M517 483.5h1M518 356.5h1M518 382.5h1M518 398.5h1M518 409.5h1M519 123.5h1M519 156.5h1M519 189.5h1M519 222.5h1M519 255.5h1M519 288.5h1M519 321.5h1M519 354.5h1M519 377.5h1M519 419.5h1M519 461.5h1M520 438.5h1M520 440.5h1M520 465.5h1M520 482.5h1M521 123.5h1M521 127.5h1M521 130.5h1M521 133.5h1M521 137.5h1M521 140.5h1M521 143.5h1M521 147.5h1M521 150.5h1M521 153.5h1M521 157.5h1M521 160.5h1M521 163.5h1M521 167.5h1M521 170.5h1M521 173.5h1M521 176.5h1M521 180.5h1M521 183.5h1M521 186.5h1M521 190.5h1M521 193.5h1M521 196.5h1M521 200.5h1M521 203.5h1M521 206.5h1M521 210.5h1M521 213.5h1M521 216.5h1M521 220.5h1M521 223.5h1M521 226.5h1M521 229.5h1M521 233.5h1M521 236.5h1M521 239.5h1M521 243.5h1M521 246.5h1M521 249.5h1M521 253.5h1M521 256.5h1M521 259.5h1M521 263.5h1M521 266.5h1M521 269.5h1M521 273.5h1M521 276.5h1M521 279.5h1M521 283.5h1M521 286.5h1M521 289.5h1M521 292.5h1M521 296.5h1M521 299.5h1M521 302.5h1M521 306.5h1M521 309.5h1M521 312.5h1M521 316.5h1M521 319.5h1M521 322.5h1M521 326.5h1M521 329.5h1M521 332.5h1M521 336.5h1M521 339.5h1M521 342.5h1M521 345.5h1M521 349.5h1M521 352.5h1M521 355.5h1M521 383.5h1M521 398.5h1M521 410.5h1M522 124.5h1M522 157.5h1M522 190.5h1M522 223.5h1M522 256.5h1M522 289.5h1M522 323.5h1M522 356.5h1M522 376.5h1M522 418.5h1M522 461.5h1M523 439.5h1M523 466.5h1M523 481.5h1M524 384.5h1M524 397.5h1M524 411.5h1M524 439.5h1M525 125.5h1M525 158.5h1M525 191.5h1M525 224.5h1M525 258.5h1M525 291.5h1M525 324.5h1M525 357.5h1M525 418.5h1M525 460.5h1M526 375.5h1M526 440.5h1M526 467.5h1M527 385.5h1M527 396.5h1M527 413.5h1M527 438.5h1M527 481.5h1M528 126.5h1M528 159.5h1M528 192.5h1M528 226.5h1M528 259.5h1M528 292.5h1M528 325.5h1M528 358.5h1M528 459.5h1M529 375.5h1M529 417.5h1M529 441.5h1M529 468.5h1M530 395.5h1M530 414.5h1M530 438.5h1M530 480.5h1M531 127.5h1M531 161.5h1M531 194.5h1M531 227.5h1M531 260.5h1M531 293.5h1M531 326.5h1M531 359.5h1M531 387.5h1M532 374.5h1M532 416.5h1M532 458.5h1M532 470.5h1M533 415.5h1M533 437.5h1M533 442.5h1M533 479.5h1M534 129.5h1M534 162.5h1M534 195.5h1M534 228.5h1M534 261.5h1M534 294.5h1M534 327.5h1M534 361.5h1M534 388.5h1M534 395.5h1M535 373.5h1M535 415.5h1M535 458.5h1M535 471.5h1M536 416.5h1M536 444.5h1M536 478.5h1M537 130.5h1M537 163.5h1M537 196.5h1M537 229.5h1M537 262.5h1M537 296.5h1M537 329.5h1M537 362.5h1M537 389.5h1M537 394.5h1M537 436.5h1M538 415.5h1M538 457.5h1M538 472.5h1M539 372.5h1M539 418.5h1M539 445.5h1M539 478.5h1M540 131.5h1M540 164.5h1M540 197.5h1M540 231.5h1M540 264.5h1M540 297.5h1M540 330.5h1M540 363.5h1M540 390.5h1M540 393.5h1M540 435.5h1M541 414.5h1M541 456.5h1M541 473.5h1M542 372.5h1M542 419.5h1M542 446.5h1M543 132.5h1M543 165.5h1M543 199.5h1M543 232.5h1M543 265.5h1M543 298.5h1M543 331.5h1M543 364.5h1M543 392.5h1M543 435.5h1M543 477.5h1M544 455.5h1M544 475.5h1M545 371.5h1M545 413.5h1M545 420.5h1M545 447.5h1M546 392.5h1M546 393.5h1M546 434.5h1M546 476.5h1M547 134.5h1M547 167.5h1M547 200.5h1M547 233.5h1M547 266.5h1M547 299.5h1M547 332.5h1M547 365.5h1M547 476.5h1M548 370.5h1M548 412.5h1M548 449.5h1M548 455.5h1M549 394.5h1M549 421.5h1M549 433.5h1M549 475.5h1M550 135.5h1M550 168.5h1M550 201.5h1M550 234.5h1M550 267.5h1M550 300.5h1M550 334.5h1M550 367.5h1M550 391.5h1M551 369.5h1M551 412.5h1M551 450.5h1M551 454.5h1M552 395.5h1M552 422.5h1M552 475.5h1M553 136.5h1M553 169.5h1M553 202.5h1M553 235.5h1M553 269.5h1M553 302.5h1M553 335.5h1M553 368.5h1M553 390.5h1M553 432.5h1M554 411.5h1M554 451.5h1M554 453.5h1M555 137.5h1M555 140.5h1M555 143.5h1M555 147.5h1M555 150.5h1M555 153.5h1M555 157.5h1M555 160.5h1M555 163.5h1M555 167.5h1M555 170.5h1M555 173.5h1M555 177.5h1M555 180.5h1M555 183.5h1M555 186.5h1M555 190.5h1M555 193.5h1M555 196.5h1M555 200.5h1M555 203.5h1M555 206.5h1M555 210.5h1M555 213.5h1M555 216.5h1M555 220.5h1M555 223.5h1M555 226.5h1M555 230.5h1M555 233.5h1M555 236.5h1M555 239.5h1M555 243.5h1M555 246.5h1M555 249.5h1M555 253.5h1M555 256.5h1M555 259.5h1M555 263.5h1M555 266.5h1M555 269.5h1M555 273.5h1M555 276.5h1M555 279.5h1M555 283.5h1M555 286.5h1M555 289.5h1M555 292.5h1M555 296.5h1M555 299.5h1M555 302.5h1M555 306.5h1M555 309.5h1M555 312.5h1M555 316.5h1M555 319.5h1M555 322.5h1M555 326.5h1M555 329.5h1M555 332.5h1M555 336.5h1M555 339.5h1M555 342.5h1M555 345.5h1M555 349.5h1M555 352.5h1M555 355.5h1M555 359.5h1M555 362.5h1M555 365.5h1M555 369.5h1M555 396.5h1M555 424.5h1M556 137.5h1M556 170.5h1M556 203.5h1M556 237.5h1M556 270.5h1M556 303.5h1M556 336.5h1M556 369.5h1M556 389.5h1M556 432.5h1M556 474.5h1M557 452.5h1M558 398.5h1M558 410.5h1M558 425.5h1M559 138.5h1M559 172.5h1M559 205.5h1M559 238.5h1M559 271.5h1M559 304.5h1M559 337.5h1M559 370.5h1M559 389.5h1M559 431.5h1M559 473.5h1M560 453.5h1M561 399.5h1M561 409.5h1M561 426.5h1M561 452.5h1M562 140.5h1M562 173.5h1M562 206.5h1M562 239.5h1M562 272.5h1M562 305.5h1M562 338.5h1M562 372.5h1M562 430.5h1M562 472.5h1M563 388.5h1M564 409.5h1M564 427.5h1M564 451.5h1M564 455.5h1M565 141.5h1M565 174.5h1M565 207.5h1M565 240.5h1M565 273.5h1M565 307.5h1M565 340.5h1M565 373.5h1M565 400.5h1M565 429.5h1M565 472.5h1M566 387.5h1M567 408.5h1M567 429.5h1M567 450.5h1M567 456.5h1M568 142.5h1M568 175.5h1M568 208.5h1M568 241.5h1M568 275.5h1M568 308.5h1M568 341.5h1M568 374.5h1M568 401.5h1M568 471.5h1M569 386.5h1M569 429.5h1M570 407.5h1M570 430.5h1M570 449.5h1M570 457.5h1M571 143.5h1M571 176.5h1M571 210.5h1M571 243.5h1M571 276.5h1M571 309.5h1M571 342.5h1M571 375.5h1M571 403.5h1M572 386.5h1M572 428.5h1M572 470.5h1M573 431.5h1M573 449.5h1M573 458.5h1M574 145.5h1M574 178.5h1M574 211.5h1M574 244.5h1M574 277.5h1M574 310.5h1M574 343.5h1M574 376.5h1M574 404.5h1M574 406.5h1M575 385.5h1M575 427.5h1M575 469.5h1M576 432.5h1M576 460.5h1M577 146.5h1M577 179.5h1M577 212.5h1M577 245.5h1M577 278.5h1M577 311.5h1M577 345.5h1M577 378.5h1M577 405.5h1M577 406.5h1M577 448.5h1M578 426.5h1M578 469.5h1M579 384.5h1M579 461.5h1M580 405.5h1M580 406.5h1M580 433.5h1M580 447.5h1M581 147.5h1M581 180.5h1M581 213.5h1M581 246.5h1M581 280.5h1M581 313.5h1M581 346.5h1M581 379.5h1M581 468.5h1M582 383.5h1M582 426.5h1M582 462.5h1M583 404.5h1M583 407.5h1M583 435.5h1M583 446.5h1M584 148.5h1M584 181.5h1M584 214.5h1M584 248.5h1M584 281.5h1M584 314.5h1M584 347.5h1M584 380.5h1M585 383.5h1M585 425.5h1M585 463.5h1M585 467.5h1M586 409.5h1M586 436.5h1M586 446.5h1M587 149.5h1M587 183.5h1M587 216.5h1M587 249.5h1M587 282.5h1M587 315.5h1M587 348.5h1M587 381.5h1M587 403.5h1M588 150.5h1M588 153.5h1M588 157.5h1M588 160.5h1M588 163.5h1M588 167.5h1M588 170.5h1M588 173.5h1M588 177.5h1M588 180.5h1M588 183.5h1M588 186.5h1M588 190.5h1M588 193.5h1M588 196.5h1M588 200.5h1M588 203.5h1M588 206.5h1M588 210.5h1M588 213.5h1M588 216.5h1M588 220.5h1M588 223.5h1M588 226.5h1M588 230.5h1M588 233.5h1M588 236.5h1M588 239.5h1M588 243.5h1M588 246.5h1M588 249.5h1M588 253.5h1M588 256.5h1M588 259.5h1M588 263.5h1M588 266.5h1M588 269.5h1M588 273.5h1M588 276.5h1M588 279.5h1M588 283.5h1M588 286.5h1M588 289.5h1M588 292.5h1M588 296.5h1M588 299.5h1M588 302.5h1M588 306.5h1M588 309.5h1M588 312.5h1M588 316.5h1M588 319.5h1M588 322.5h1M588 326.5h1M588 329.5h1M588 332.5h1M588 336.5h1M588 339.5h1M588 342.5h1M588 346.5h1M588 349.5h1M588 352.5h1M588 355.5h1M588 359.5h1M588 362.5h1M588 365.5h1M588 369.5h1M588 372.5h1M588 375.5h1M588 379.5h1M588 382.5h1M588 424.5h1M588 464.5h1M588 466.5h1M589 410.5h1M589 437.5h1M589 445.5h1M590 151.5h1M590 184.5h1M590 217.5h1M590 250.5h1M590 283.5h1M590 316.5h1M590 349.5h1M590 383.5h1M590 403.5h1M591 423.5h1M591 466.5h1M592 411.5h1M592 438.5h1M593 152.5h1M593 185.5h1M593 218.5h1M593 251.5h1M593 284.5h1M593 318.5h1M593 351.5h1M593 384.5h1M593 402.5h1M593 444.5h1M594 423.5h1M594 465.5h1M595 440.5h1M596 153.5h1M596 186.5h1M596 219.5h1M596 252.5h1M596 286.5h1M596 319.5h1M596 352.5h1M596 385.5h1M596 401.5h1M596 412.5h1M596 443.5h1M597 464.5h1M598 422.5h1M598 441.5h1M599 154.5h1M599 187.5h1M599 221.5h1M599 254.5h1M599 287.5h1M599 320.5h1M599 353.5h1M599 386.5h1M599 400.5h1M599 414.5h1M599 443.5h1M601 421.5h1M601 442.5h1M601 463.5h1M602 156.5h1M602 189.5h1M602 222.5h1M602 255.5h1M602 288.5h1M602 321.5h1M602 354.5h1M602 387.5h1M602 415.5h1M602 442.5h1M603 400.5h1M604 420.5h1M604 443.5h1M604 463.5h1M605 157.5h1M605 190.5h1M605 223.5h1M605 256.5h1M605 289.5h1M605 322.5h1M605 356.5h1M605 389.5h1M605 416.5h1M606 399.5h1M606 441.5h1M607 420.5h1M607 444.5h1M607 462.5h1M608 158.5h1M608 191.5h1M608 224.5h1M608 257.5h1M608 290.5h1M608 324.5h1M608 357.5h1M608 390.5h1M608 417.5h1M609 398.5h1M609 440.5h1M610 446.5h1M610 461.5h1M611 418.5h1M611 419.5h1M612 159.5h1M612 192.5h1M612 225.5h1M612 259.5h1M612 292.5h1M612 325.5h1M612 358.5h1M612 391.5h1M612 397.5h1M612 440.5h1M613 460.5h1M614 418.5h1M614 420.5h1M614 447.5h1M615 160.5h1M615 194.5h1M615 227.5h1M615 260.5h1M615 293.5h1M615 326.5h1M615 359.5h1M615 392.5h1M615 439.5h1M616 397.5h1M617 417.5h1M617 421.5h1M617 448.5h1M617 460.5h1M618 162.5h1M618 195.5h1M618 228.5h1M618 261.5h1M618 294.5h1M618 327.5h1M618 360.5h1M618 394.5h1M618 438.5h1M619 396.5h1M620 417.5h1M620 422.5h1M620 449.5h1M620 459.5h1M621 163.5h1M621 196.5h1M621 229.5h1M621 262.5h1M621 295.5h1M621 329.5h1M621 362.5h1M621 395.5h1M622 163.5h1M622 167.5h1M622 170.5h1M622 173.5h1M622 177.5h1M622 180.5h1M622 183.5h1M622 187.5h1M622 190.5h1M622 193.5h1M622 196.5h1M622 200.5h1M622 203.5h1M622 206.5h1M622 210.5h1M622 213.5h1M622 216.5h1M622 220.5h1M622 223.5h1M622 226.5h1M622 230.5h1M622 233.5h1M622 236.5h1M622 240.5h1M622 243.5h1M622 246.5h1M622 249.5h1M622 253.5h1M622 256.5h1M622 259.5h1M622 263.5h1M622 266.5h1M622 269.5h1M622 273.5h1M622 276.5h1M622 279.5h1M622 283.5h1M622 286.5h1M622 289.5h1M622 293.5h1M622 296.5h1M622 299.5h1M622 302.5h1M622 306.5h1M622 309.5h1M622 312.5h1M622 316.5h1M622 319.5h1M622 322.5h1M622 326.5h1M622 329.5h1M622 332.5h1M622 336.5h1M622 339.5h1M622 342.5h1M622 346.5h1M622 349.5h1M622 352.5h1M622 355.5h1M622 359.5h1M622 362.5h1M622 365.5h1M622 369.5h1M622 372.5h1M622 375.5h1M622 379.5h1M622 382.5h1M622 385.5h1M622 389.5h1M622 392.5h1M622 395.5h1M622 437.5h1M623 416.5h1M623 423.5h1M623 451.5h1M623 458.5h1M624 164.5h1M624 197.5h1M624 230.5h1M624 263.5h1M624 297.5h1M624 330.5h1M624 363.5h1M624 396.5h1M625 437.5h1M626 425.5h1M626 452.5h1M626 458.5h1M627 165.5h1M627 198.5h1M627 232.5h1M627 265.5h1M627 298.5h1M627 331.5h1M627 364.5h1M627 397.5h1M627 415.5h1M628 436.5h1M629 453.5h1M630 167.5h1M630 200.5h1M630 233.5h1M630 266.5h1M630 299.5h1M630 332.5h1M630 365.5h1M630 398.5h1M630 414.5h1M630 426.5h1M630 457.5h1M631 435.5h1M632 454.5h1M633 168.5h1M633 201.5h1M633 234.5h1M633 267.5h1M633 300.5h1M633 333.5h1M633 367.5h1M633 400.5h1M633 414.5h1M633 427.5h1M633 456.5h1M635 435.5h1M635 455.5h1M636 169.5h1M636 202.5h1M636 235.5h1M636 268.5h1M636 301.5h1M636 335.5h1M636 368.5h1M636 401.5h1M636 413.5h1M636 428.5h1M636 455.5h1M638 434.5h1M639 170.5h1M639 203.5h1M639 236.5h1M639 270.5h1M639 303.5h1M639 336.5h1M639 369.5h1M639 402.5h1M639 429.5h1M639 455.5h1M640 412.5h1M641 433.5h1M642 171.5h1M642 205.5h1M642 238.5h1M642 271.5h1M642 304.5h1M642 337.5h1M642 370.5h1M642 403.5h1M642 431.5h1M642 454.5h1M643 412.5h1M644 432.5h1M645 432.5h1M646 173.5h1M646 206.5h1M646 239.5h1M646 272.5h1M646 305.5h1M646 338.5h1M646 371.5h1M646 405.5h1M646 411.5h1M646 453.5h1M647 432.5h1M648 433.5h1M649 174.5h1M649 207.5h1M649 240.5h1M649 273.5h1M649 306.5h1M649 340.5h1M649 373.5h1M649 406.5h1M649 410.5h1M649 452.5h1M651 431.5h1M651 434.5h1M652 175.5h1M652 208.5h1M652 241.5h1M652 274.5h1M652 308.5h1M652 341.5h1M652 374.5h1M652 407.5h1M652 409.5h1M652 452.5h1M654 430.5h1M654 435.5h1M655 176.5h1M655 209.5h1M655 243.5h1M655 276.5h1M655 309.5h1M655 342.5h1M655 375.5h1M655 408.5h1M655 451.5h1M656 177.5h1M656 180.5h1M656 183.5h1M656 187.5h1M656 190.5h1M656 193.5h1M656 196.5h1M656 200.5h1M656 203.5h1M656 206.5h1M656 210.5h1M656 213.5h1M656 216.5h1M656 220.5h1M656 223.5h1M656 226.5h1M656 230.5h1M656 233.5h1M656 236.5h1M656 240.5h1M656 243.5h1M656 246.5h1M656 249.5h1M656 253.5h1M656 256.5h1M656 259.5h1M656 263.5h1M656 266.5h1M656 269.5h1M656 273.5h1M656 276.5h1M656 279.5h1M656 283.5h1M656 286.5h1M656 289.5h1M656 293.5h1M656 296.5h1M656 299.5h1M656 302.5h1M656 306.5h1M656 309.5h1M656 312.5h1M656 316.5h1M656 319.5h1M656 322.5h1M656 326.5h1M656 329.5h1M656 332.5h1M656 336.5h1M656 339.5h1M656 342.5h1M656 346.5h1M656 349.5h1M656 352.5h1M656 356.5h1M656 359.5h1M656 362.5h1M656 365.5h1M656 369.5h1M656 372.5h1M656 375.5h1M656 379.5h1M656 382.5h1M656 385.5h1M656 389.5h1M656 392.5h1M656 395.5h1M656 399.5h1M656 402.5h1M656 405.5h1M656 409.5h1M657 429.5h1M657 437.5h1M658 178.5h1M658 211.5h1M658 244.5h1M658 277.5h1M658 310.5h1M658 343.5h1M658 376.5h1M658 409.5h1M659 450.5h1M660 429.5h1M660 438.5h1M661 179.5h1M661 212.5h1M661 245.5h1M661 278.5h1M661 311.5h1M661 344.5h1M661 378.5h1M661 411.5h1M662 449.5h1M664 180.5h1M664 213.5h1M664 246.5h1M664 279.5h1M664 312.5h1M664 346.5h1M664 379.5h1M664 412.5h1M664 428.5h1M664 439.5h1M665 449.5h1M667 181.5h1M667 214.5h1M667 247.5h1M667 281.5h1M667 314.5h1M667 347.5h1M667 380.5h1M667 413.5h1M667 427.5h1M667 440.5h1M668 448.5h1M670 182.5h1M670 216.5h1M670 249.5h1M670 282.5h1M670 315.5h1M670 348.5h1M670 381.5h1M670 414.5h1M670 426.5h1M670 442.5h1M671 447.5h1M673 184.5h1M673 217.5h1M673 250.5h1M673 283.5h1M673 316.5h1M673 349.5h1M673 382.5h1M673 416.5h1M673 426.5h1M673 443.5h1M675 446.5h1M676 185.5h1M676 218.5h1M676 251.5h1M676 284.5h1M676 317.5h1M676 350.5h1M676 384.5h1M676 417.5h1M676 425.5h1M676 444.5h1M678 446.5h1M679 445.5h1M680 186.5h1M680 219.5h1M680 252.5h1M680 285.5h1M680 319.5h1M680 352.5h1M680 385.5h1M680 418.5h1M680 424.5h1M681 445.5h1M683 187.5h1M683 220.5h1M683 254.5h1M683 287.5h1M683 320.5h1M683 353.5h1M683 386.5h1M683 419.5h1M683 423.5h1M684 444.5h1M686 188.5h1M686 222.5h1M686 255.5h1M686 288.5h1M686 321.5h1M686 354.5h1M686 387.5h1M686 420.5h1M686 423.5h1M688 443.5h1M689 190.5h1M689 193.5h1M689 196.5h1M689 200.5h1M689 203.5h1M689 206.5h1M689 210.5h1M689 213.5h1M689 216.5h1M689 220.5h1M689 223.5h1M689 226.5h1M689 230.5h1M689 233.5h1M689 236.5h1M689 240.5h1M689 243.5h1M689 246.5h1M689 250.5h1M689 253.5h1M689 256.5h1M689 259.5h1M689 263.5h1M689 266.5h1M689 269.5h1M689 273.5h1M689 276.5h1M689 279.5h1M689 283.5h1M689 286.5h1M689 289.5h1M689 293.5h1M689 296.5h1M689 299.5h1M689 303.5h1M689 306.5h1M689 309.5h1M689 312.5h1M689 316.5h1M689 319.5h1M689 322.5h1M689 326.5h1M689 329.5h1M689 332.5h1M689 336.5h1M689 339.5h1M689 342.5h1M689 346.5h1M689 349.5h1M689 352.5h1M689 355.5h1M689 356.5h1M689 359.5h1M689 362.5h1M689 365.5h1M689 369.5h1M689 372.5h1M689 375.5h1M689 379.5h1M689 382.5h1M689 385.5h1M689 389.5h1M689 392.5h1M689 395.5h1M689 399.5h1M689 402.5h1M689 405.5h1M689 409.5h1M689 412.5h1M689 415.5h1M689 418.5h1M689 422.5h1M691 443.5h1M692 191.5h1M692 224.5h1M692 257.5h1M692 290.5h1M692 323.5h1M692 357.5h1M692 390.5h1M692 423.5h1M694 442.5h1M695 192.5h1M695 225.5h1M695 258.5h1M695 292.5h1M695 325.5h1M695 358.5h1M695 391.5h1M695 424.5h1M697 441.5h1M698 193.5h1M698 227.5h1M698 260.5h1M698 293.5h1M698 326.5h1M698 359.5h1M698 392.5h1M698 425.5h1M700 440.5h1M701 195.5h1M701 228.5h1M701 261.5h1M701 294.5h1M701 327.5h1M701 360.5h1M701 393.5h1M701 427.5h1M704 196.5h1M704 229.5h1M704 262.5h1M704 295.5h1M704 328.5h1M704 361.5h1M704 395.5h1M704 428.5h1M704 440.5h1M707 197.5h1M707 230.5h1M707 263.5h1M707 296.5h1M707 330.5h1M707 363.5h1M707 396.5h1M707 429.5h1M707 439.5h1M710 438.5h1M711 198.5h1M711 231.5h1M711 265.5h1M711 298.5h1M711 331.5h1M711 364.5h1M711 397.5h1M711 430.5h1M713 437.5h1M714 199.5h1M714 233.5h1M714 266.5h1M714 299.5h1M714 332.5h1M714 365.5h1M714 398.5h1M714 431.5h1M716 437.5h1M717 201.5h1M717 234.5h1M717 267.5h1M717 300.5h1M717 333.5h1M717 366.5h1M717 399.5h1M717 433.5h1M720 202.5h1M720 235.5h1M720 268.5h1M720 301.5h1M720 334.5h1M720 368.5h1M720 401.5h1M720 434.5h1M720 436.5h1M723 203.5h1M723 206.5h1M723 210.5h1M723 213.5h1M723 216.5h1M723 220.5h1M723 223.5h1M723 226.5h1M723 230.5h1M723 233.5h1M723 236.5h1M723 240.5h1M723 243.5h1M723 246.5h1M723 250.5h1M723 253.5h1M723 256.5h1M723 259.5h1M723 263.5h1M723 266.5h1M723 269.5h1M723 273.5h1M723 276.5h1M723 279.5h1M723 283.5h1M723 286.5h1M723 289.5h1M723 293.5h1M723 296.5h1M723 299.5h1M723 303.5h1M723 306.5h1M723 309.5h1M723 312.5h1M723 316.5h1M723 319.5h1M723 322.5h1M723 326.5h1M723 329.5h1M723 332.5h1M723 336.5h1M723 339.5h1M723 342.5h1M723 346.5h1M723 349.5h1M723 352.5h1M723 356.5h1M723 359.5h1M723 362.5h1M723 365.5h1M723 369.5h1M723 372.5h1M723 375.5h1M723 379.5h1M723 382.5h1M723 385.5h1M723 389.5h1M723 392.5h1M723 395.5h1M723 399.5h1M723 402.5h1M723 405.5h1M723 409.5h1M723 412.5h1M723 415.5h1M723 419.5h1M723 422.5h1M723 425.5h1M723 428.5h1M723 432.5h1M723 435.5h1" stroke="#4a4a4a" stroke-width="1" fill="none"/>
</svg>
<canvas id="cv" width="800" height="513" style="position:absolute;left:0;top:59px"></canvas>
<noscript><svg class="a" width="800" height="600" style="left:0;top:0" stroke-width="0.6"><path d="M451.9 283.1 461.7 281.1 454.2 277.0 444.5 280.4Z" fill="#faffb4" stroke="#faffb4"/><path d="M442.2 283.6 451.9 283.1 444.5 280.4 434.7 282.4Z" fill="#e9ff65" stroke="#e9ff65"/><path d="M459.4 284.2 469.2 283.8 461.7 281.1 451.9 283.1Z" fill="#c9ff38" stroke="#c9ff38"/><path d="M432.5 282.8 442.2 283.6 434.7 282.4 425.0 283.2Z" fill="#f4ff5a" stroke="#f4ff5a"/><path d="M449.7 283.2 459.4 284.2 451.9 283.1 442.2 283.6Z" fill="#ffffff" stroke="#ffffff"/><path d="M466.9 284.2 476.6 285.2 469.2 283.8 459.4 284.2Z" fill="#c5ff3a" stroke="#c5ff3a"/><path d="M422.7 281.1 432.5 282.8 425.0 283.2 415.2 282.8Z" fill="#ffffff" stroke="#ffffff"/><path d="M439.9 281.2 449.7 283.2 442.2 283.6 432.5 282.8Z" fill="#f4ffb2" stroke="#f4ffb2"/><path d="M457.2 281.8 466.9 284.2 459.4 284.2 449.7 283.2Z" fill="#f5ffb9" stroke="#f5ffb9"/><path d="M474.4 283.2 484.1 285.5 476.6 285.2 466.9 284.2Z" fill="#47aeff" stroke="#47aeff"/><path d="M413.0 278.9 422.7 281.1 415.2 282.8 405.5 281.6Z" fill="#ffff8b" stroke="#ffff8b"/><path d="M430.2 278.5 439.9 281.2 432.5 282.8 422.7 281.1Z" fill="#ffffff" stroke="#ffffff"/><path d="M447.4 278.8 457.2 281.8 449.7 283.2 439.9 281.2Z" fill="#deff70" stroke="#deff70"/><path d="M464.6 279.8 474.4 283.2 466.9 284.2 457.2 281.8Z" fill="#c1ff43" stroke="#c1ff43"/><path d="M403.2 276.5 413.0 278.9 405.5 281.6 395.7 279.9Z" fill="#ffff1f" stroke="#ffff1f"/><path d="M481.9 281.6 491.6 285.0 484.1 285.5 474.4 283.2Z" fill="#eff8ff" stroke="#eff8ff"/><path d="M420.4 275.6 430.2 278.5 422.7 281.1 413.0 278.9Z" fill="#ffffff" stroke="#ffffff"/><path d="M437.7 275.5 447.4 278.8 439.9 281.2 430.2 278.5Z" fill="#ffff4f" stroke="#ffff4f"/><path d="M454.9 276.2 464.6 279.8 457.2 281.8 447.4 278.8Z" fill="#f7ffc7" stroke="#f7ffc7"/><path d="M393.5 274.3 403.2 276.5 395.7 279.9 386.0 278.1Z" fill="#ffff1f" stroke="#ffff1f"/><path d="M472.1 277.7 481.9 281.6 474.4 283.2 464.6 279.8Z" fill="#6fc9ff" stroke="#6fc9ff"/><path d="M410.7 273.0 420.4 275.6 413.0 278.9 403.2 276.5Z" fill="#fffcdb" stroke="#fffcdb"/><path d="M489.3 279.9 499.1 284.0 491.6 285.0 481.9 281.6Z" fill="#cfedff" stroke="#cfedff"/><path d="M427.9 272.6 437.7 275.5 430.2 278.5 420.4 275.6Z" fill="#fff11f" stroke="#fff11f"/><path d="M445.1 272.9 454.9 276.2 447.4 278.8 437.7 275.5Z" fill="#ffffff" stroke="#ffffff"/><path d="M383.7 272.6 393.5 274.3 386.0 278.1 376.3 276.3Z" fill="#ffffff" stroke="#ffffff"/><path d="M462.4 274.0 472.1 277.7 464.6 279.8 454.9 276.2Z" fill="#f0ff0e" stroke="#f0ff0e"/><path d="M401.0 271.1 410.7 273.0 403.2 276.5 393.5 274.3Z" fill="#fff77f" stroke="#fff77f"/><path d="M479.6 275.8 489.3 279.9 481.9 281.6 472.1 277.7Z" fill="#0fa5ff" stroke="#0fa5ff"/><path d="M418.2 270.5 427.9 272.6 420.4 275.6 410.7 273.0Z" fill="#fff9d3" stroke="#fff9d3"/><path d="M496.8 278.4 506.6 282.9 499.1 284.0 489.3 279.9Z" fill="#5fc3ff" stroke="#5fc3ff"/><path d="M435.4 270.5 445.1 272.9 437.7 275.5 427.9 272.6Z" fill="#fff7bf" stroke="#fff7bf"/><path d="M374.0 271.5 383.7 272.6 376.3 276.3 366.5 274.9Z" fill="#ffff1e" stroke="#ffff1e"/><path d="M452.6 271.2 462.4 274.0 454.9 276.2 445.1 272.9Z" fill="#fff34a" stroke="#fff34a"/><path d="M391.2 270.1 401.0 271.1 393.5 274.3 383.7 272.6Z" fill="#fff77f" stroke="#fff77f"/><path d="M469.8 272.5 479.6 275.8 472.1 277.7 462.4 274.0Z" fill="#6fc9ff" stroke="#6fc9ff"/><path d="M408.4 269.4 418.2 270.5 410.7 273.0 401.0 271.1Z" fill="#ffffff" stroke="#ffffff"/><path d="M487.1 274.6 496.8 278.4 489.3 279.9 479.6 275.8Z" fill="#afe1ff" stroke="#afe1ff"/><path d="M425.7 269.4 435.4 270.5 427.9 272.6 418.2 270.5Z" fill="#ffffff" stroke="#ffffff"/><path d="M364.2 271.2 374.0 271.5 366.5 274.9 356.8 274.0Z" fill="#dfff20" stroke="#dfff20"/><path d="M504.3 277.4 514.0 281.8 506.6 282.9 496.8 278.4Z" fill="#68c6ff" stroke="#68c6ff"/><path d="M442.9 269.9 452.6 271.2 445.1 272.9 435.4 270.5Z" fill="#ffe00b" stroke="#ffe00b"/><path d="M381.5 270.0 391.2 270.1 383.7 272.6 374.0 271.5Z" fill="#ffef7f" stroke="#ffef7f"/><path d="M460.1 270.8 469.8 272.5 462.4 274.0 452.6 271.2Z" fill="#f8f406" stroke="#f8f406"/><path d="M398.7 269.6 408.4 269.4 401.0 271.1 391.2 270.1Z" fill="#ffd51f" stroke="#ffd51f"/><path d="M477.3 272.2 487.1 274.6 479.6 275.8 469.8 272.5Z" fill="#00afff" stroke="#00afff"/><path d="M415.9 269.8 425.7 269.4 418.2 270.5 408.4 269.4Z" fill="#ffde37" stroke="#ffde37"/><path d="M354.5 271.7 364.2 271.2 356.8 274.0 347.0 273.6Z" fill="#00afff" stroke="#00afff"/><path d="M494.5 274.2 504.3 277.4 496.8 278.4 487.1 274.6Z" fill="#9fe1ff" stroke="#9fe1ff"/><path d="M433.1 270.3 442.9 269.9 435.4 270.5 425.7 269.4Z" fill="#fffbdf" stroke="#fffbdf"/><path d="M371.7 270.9 381.5 270.0 374.0 271.5 364.2 271.2Z" fill="#ffffff" stroke="#ffffff"/><path d="M511.8 277.0 521.5 281.1 514.0 281.8 504.3 277.4Z" fill="#7fd5ff" stroke="#7fd5ff"/><path d="M450.4 271.0 460.1 270.8 452.6 271.2 442.9 269.9Z" fill="#fff787" stroke="#fff787"/><path d="M388.9 271.1 398.7 269.6 391.2 270.1 381.5 270.0Z" fill="#ffee78" stroke="#ffee78"/><path d="M467.6 271.9 477.3 272.2 469.8 272.5 460.1 270.8Z" fill="#00afff" stroke="#00afff"/><path d="M406.2 271.8 415.9 269.8 408.4 269.4 398.7 269.6Z" fill="#ffdd37" stroke="#ffdd37"/><path d="M344.8 272.8 354.5 271.7 347.0 273.6 337.3 273.8Z" fill="#60c9ff" stroke="#60c9ff"/><path d="M484.8 273.1 494.5 274.2 487.1 274.6 477.3 272.2Z" fill="#0db1ff" stroke="#0db1ff"/><path d="M423.4 272.7 433.1 270.3 425.7 269.4 415.9 269.8Z" fill="#ffffff" stroke="#ffffff"/><path d="M362.0 272.6 371.7 270.9 364.2 271.2 354.5 271.7Z" fill="#1eb5fc" stroke="#1eb5fc"/><path d="M502.0 274.8 511.8 277.0 504.3 277.4 494.5 274.2Z" fill="#6dd1ff" stroke="#6dd1ff"/><path d="M440.6 273.5 450.4 271.0 442.9 269.9 433.1 270.3Z" fill="#ffe847" stroke="#ffe847"/><path d="M379.2 273.6 388.9 271.1 381.5 270.0 371.7 270.9Z" fill="#ffffff" stroke="#ffffff"/><path d="M519.2 277.4 529.0 280.8 521.5 281.1 511.8 277.0Z" fill="#00afff" stroke="#00afff"/><path d="M457.8 274.1 467.6 271.9 460.1 270.8 450.4 271.0Z" fill="#00a9ff" stroke="#00a9ff"/><path d="M396.4 275.2 406.2 271.8 398.7 269.6 388.9 271.1Z" fill="#ffffff" stroke="#ffffff"/><path d="M335.0 274.4 344.8 272.8 337.3 273.8 327.5 274.5Z" fill="#18b2ff" stroke="#18b2ff"/><path d="M475.1 274.5 484.8 273.1 477.3 272.2 467.6 271.9Z" fill="#0cb2ff" stroke="#0cb2ff"/><path d="M413.6 276.7 423.4 272.7 415.9 269.8 406.2 271.8Z" fill="#ffffff" stroke="#ffffff"/><path d="M352.2 275.1 362.0 272.6 354.5 271.7 344.8 272.8Z" fill="#1ab6ff" stroke="#1ab6ff"/><path d="M492.3 275.2 502.0 274.8 494.5 274.2 484.8 273.1Z" fill="#07b0ff" stroke="#07b0ff"/><path d="M430.9 278.0 440.6 273.5 433.1 270.3 423.4 272.7Z" fill="#fffbbf" stroke="#fffbbf"/><path d="M369.5 277.0 379.2 273.6 371.7 270.9 362.0 272.6Z" fill="#ffffef" stroke="#ffffef"/><path d="M509.5 276.4 519.2 277.4 511.8 277.0 502.0 274.8Z" fill="#a2e0ff" stroke="#a2e0ff"/><path d="M448.1 278.7 457.8 274.1 450.4 271.0 440.6 273.5Z" fill="#f1ff2d" stroke="#f1ff2d"/><path d="M386.7 279.7 396.4 275.2 388.9 271.1 379.2 273.6Z" fill="#ffffff" stroke="#ffffff"/><path d="M325.3 276.5 335.0 274.4 327.5 274.5 317.8 275.7Z" fill="#05acff" stroke="#05acff"/><path d="M526.7 278.5 536.5 281.1 529.0 280.8 519.2 277.4Z" fill="#1ab4ff" stroke="#1ab4ff"/><path d="M465.3 278.8 475.1 274.5 467.6 271.9 457.8 274.1Z" fill="#51c5f3" stroke="#51c5f3"/><path d="M403.9 282.2 413.6 276.7 406.2 271.8 396.4 275.2Z" fill="#ffff0f" stroke="#ffff0f"/><path d="M342.5 278.0 352.2 275.1 344.8 272.8 335.0 274.4Z" fill="#42c2ff" stroke="#42c2ff"/><path d="M482.5 278.6 492.3 275.2 484.8 273.1 475.1 274.5Z" fill="#51c6ff" stroke="#51c6ff"/><path d="M421.1 284.3 430.9 278.0 423.4 272.7 413.6 276.7Z" fill="#ffffff" stroke="#ffffff"/><path d="M359.7 281.1 369.5 277.0 362.0 272.6 352.2 275.1Z" fill="#71cdfa" stroke="#71cdfa"/><path d="M499.8 278.4 509.5 276.4 502.0 274.8 492.3 275.2Z" fill="#38c0ff" stroke="#38c0ff"/><path d="M438.3 285.5 448.1 278.7 440.6 273.5 430.9 278.0Z" fill="#ffffdf" stroke="#ffffdf"/><path d="M376.9 284.9 386.7 279.7 379.2 273.6 369.5 277.0Z" fill="#fdffec" stroke="#fdffec"/><path d="M315.5 278.8 325.3 276.5 317.8 275.7 308.0 277.3Z" fill="#1eb7ff" stroke="#1eb7ff"/><path d="M517.0 278.8 526.7 278.5 519.2 277.4 509.5 276.4Z" fill="#00acff" stroke="#00acff"/><path d="M455.6 285.7 465.3 278.8 457.8 274.1 448.1 278.7Z" fill="#f7ffc7" stroke="#f7ffc7"/><path d="M394.2 288.7 403.9 282.2 396.4 275.2 386.7 279.7Z" fill="#fefff0" stroke="#fefff0"/><path d="M332.7 281.1 342.5 278.0 335.0 274.4 325.3 276.5Z" fill="#60c9ff" stroke="#60c9ff"/><path d="M534.2 280.3 543.9 282.0 536.5 281.1 526.7 278.5Z" fill="#00a4ff" stroke="#00a4ff"/><path d="M472.8 285.0 482.5 278.6 475.1 274.5 465.3 278.8Z" fill="#7dcdfb" stroke="#7dcdfb"/><path d="M411.4 291.9 421.1 284.3 413.6 276.7 403.9 282.2Z" fill="#ffffff" stroke="#ffffff"/><path d="M350.0 285.4 359.7 281.1 352.2 275.1 342.5 278.0Z" fill="#81cefd" stroke="#81cefd"/><path d="M490.0 283.8 499.8 278.4 492.3 275.2 482.5 278.6Z" fill="#70cbff" stroke="#70cbff"/><path d="M428.6 293.9 438.3 285.5 430.9 278.0 421.1 284.3Z" fill="#fdfff2" stroke="#fdfff2"/><path d="M367.2 290.6 376.9 284.9 369.5 277.0 359.7 281.1Z" fill="#dfff75" stroke="#dfff75"/><path d="M305.8 281.1 315.5 278.8 308.0 277.3 298.3 279.1Z" fill="#28bbff" stroke="#28bbff"/><path d="M507.2 282.5 517.0 278.8 509.5 276.4 499.8 278.4Z" fill="#60c9ff" stroke="#60c9ff"/><path d="M445.8 294.6 455.6 285.7 448.1 278.7 438.3 285.5Z" fill="#fcffea" stroke="#fcffea"/><path d="M384.4 295.8 394.2 288.7 386.7 279.7 376.9 284.9Z" fill="#e1ff2d" stroke="#e1ff2d"/><path d="M323.0 284.3 332.7 281.1 325.3 276.5 315.5 278.8Z" fill="#68c9ff" stroke="#68c9ff"/><path d="M524.5 281.9 534.2 280.3 526.7 278.5 517.0 278.8Z" fill="#18b7ff" stroke="#18b7ff"/><path d="M463.0 293.9 472.8 285.0 465.3 278.8 455.6 285.7Z" fill="#80c8fc" stroke="#80c8fc"/><path d="M401.6 300.2 411.4 291.9 403.9 282.2 394.2 288.7Z" fill="#ffffff" stroke="#ffffff"/><path d="M340.2 289.7 350.0 285.4 342.5 278.0 332.7 281.1Z" fill="#84ccff" stroke="#84ccff"/><path d="M541.7 282.7 551.4 283.5 543.9 282.0 534.2 280.3Z" fill="#00a8ff" stroke="#00a8ff"/><path d="M480.3 292.2 490.0 283.8 482.5 278.6 472.8 285.0Z" fill="#99d3ff" stroke="#99d3ff"/><path d="M418.9 303.2 428.6 293.9 421.1 284.3 411.4 291.9Z" fill="#ffffff" stroke="#ffffff"/><path d="M357.4 296.3 367.2 290.6 359.7 281.1 350.0 285.4Z" fill="#7ec3fe" stroke="#7ec3fe"/><path d="M296.0 283.5 305.8 281.1 298.3 279.1 288.5 281.2Z" fill="#47c5ff" stroke="#47c5ff"/><path d="M497.5 289.7 507.2 282.5 499.8 278.4 490.0 283.8Z" fill="#8ad1ff" stroke="#8ad1ff"/><path d="M436.1 304.7 445.8 294.6 438.3 285.5 428.6 293.9Z" fill="#ffffff" stroke="#ffffff"/><path d="M374.7 302.9 384.4 295.8 376.9 284.9 367.2 290.6Z" fill="#f5ffea" stroke="#f5ffea"/><path d="M313.2 287.3 323.0 284.3 315.5 278.8 305.8 281.1Z" fill="#6dcaff" stroke="#6dcaff"/><path d="M514.7 287.2 524.5 281.9 517.0 278.8 507.2 282.5Z" fill="#70cbff" stroke="#70cbff"/><path d="M453.3 304.6 463.0 293.9 455.6 285.7 445.8 294.6Z" fill="#b9ff65" stroke="#b9ff65"/><path d="M391.9 308.6 401.6 300.2 394.2 288.7 384.4 295.8Z" fill="#b2ff9c" stroke="#b2ff9c"/><path d="M330.5 293.9 340.2 289.7 332.7 281.1 323.0 284.3Z" fill="#8acbff" stroke="#8acbff"/><path d="M531.9 285.5 541.7 282.7 534.2 280.3 524.5 281.9Z" fill="#4ec6ff" stroke="#4ec6ff"/><path d="M470.5 302.9 480.3 292.2 472.8 285.0 463.0 293.9Z" fill="#a4d5f1" stroke="#a4d5f1"/><path d="M409.1 312.8 418.9 303.2 411.4 291.9 401.6 300.2Z" fill="#ffffff" stroke="#ffffff"/><path d="M347.7 301.8 357.4 296.3 350.0 285.4 340.2 289.7Z" fill="#92c4fd" stroke="#92c4fd"/><path d="M549.2 285.4 558.9 285.3 551.4 283.5 541.7 282.7Z" fill="#07afff" stroke="#07afff"/><path d="M286.3 285.8 296.0 283.5 288.5 281.2 278.8 283.3Z" fill="#33bfff" stroke="#33bfff"/><path d="M487.7 299.9 497.5 289.7 490.0 283.8 480.3 292.2Z" fill="#a4d1ff" stroke="#a4d1ff"/><path d="M426.3 315.3 436.1 304.7 428.6 293.9 418.9 303.2Z" fill="#c3ff9b" stroke="#c3ff9b"/><path d="M364.9 309.7 374.7 302.9 367.2 290.6 357.4 296.3Z" fill="#caffbb" stroke="#caffbb"/><path d="M303.5 290.1 313.2 287.3 305.8 281.1 296.0 283.5Z" fill="#6ec8ff" stroke="#6ec8ff"/><path d="M505.0 296.1 514.7 287.2 507.2 282.5 497.5 289.7Z" fill="#90ceff" stroke="#90ceff"/><path d="M443.6 316.0 453.3 304.6 445.8 294.6 436.1 304.7Z" fill="#9dff81" stroke="#9dff81"/><path d="M382.1 316.7 391.9 308.6 384.4 295.8 374.7 302.9Z" fill="#ffffff" stroke="#ffffff"/><path d="M320.7 297.6 330.5 293.9 323.0 284.3 313.2 287.3Z" fill="#8ac8ff" stroke="#8ac8ff"/><path d="M522.2 292.3 531.9 285.5 524.5 281.9 514.7 287.2Z" fill="#7cccff" stroke="#7cccff"/><path d="M460.8 314.9 470.5 302.9 463.0 293.9 453.3 304.6Z" fill="#dbffe3" stroke="#dbffe3"/><path d="M399.4 322.1 409.1 312.8 401.6 300.2 391.9 308.6Z" fill="#78ff96" stroke="#78ff96"/><path d="M337.9 306.8 347.7 301.8 340.2 289.7 330.5 293.9Z" fill="#94bfff" stroke="#94bfff"/><path d="M539.4 289.3 549.2 285.4 541.7 282.7 531.9 285.5Z" fill="#60c9ff" stroke="#60c9ff"/><path d="M276.5 288.0 286.3 285.8 278.8 283.3 269.1 285.7Z" fill="#39c0ff" stroke="#39c0ff"/><path d="M478.0 312.0 487.7 299.9 480.3 292.2 470.5 302.9Z" fill="#9dc7f9" stroke="#9dc7f9"/><path d="M416.6 325.6 426.3 315.3 418.9 303.2 409.1 312.8Z" fill="#c9ffd5" stroke="#c9ffd5"/><path d="M355.2 316.0 364.9 309.7 357.4 296.3 347.7 301.8Z" fill="#d7e4ff" stroke="#d7e4ff"/><path d="M556.6 288.4 566.4 287.6 558.9 285.3 549.2 285.4Z" fill="#0fb2ff" stroke="#0fb2ff"/><path d="M293.8 292.6 303.5 290.1 296.0 283.5 286.3 285.8Z" fill="#74cbff" stroke="#74cbff"/><path d="M495.2 307.7 505.0 296.1 497.5 289.7 487.7 299.9Z" fill="#a4c9ff" stroke="#a4c9ff"/><path d="M433.8 327.2 443.6 316.0 436.1 304.7 426.3 315.3Z" fill="#b9ffd5" stroke="#b9ffd5"/><path d="M372.4 324.1 382.1 316.7 374.7 302.9 364.9 309.7Z" fill="#ffffff" stroke="#ffffff"/><path d="M311.0 300.8 320.7 297.6 313.2 287.3 303.5 290.1Z" fill="#87c4ff" stroke="#87c4ff"/><path d="M512.4 302.5 522.2 292.3 514.7 287.2 505.0 296.1Z" fill="#9acbff" stroke="#9acbff"/><path d="M451.0 326.9 460.8 314.9 453.3 304.6 443.6 316.0Z" fill="#cfffef" stroke="#cfffef"/><path d="M389.6 330.4 399.4 322.1 391.9 308.6 382.1 316.7Z" fill="#4bffc3" stroke="#4bffc3"/><path d="M328.2 311.0 337.9 306.8 330.5 293.9 320.7 297.6Z" fill="#96bbff" stroke="#96bbff"/><path d="M529.7 297.3 539.4 289.3 531.9 285.5 522.2 292.3Z" fill="#82cbff" stroke="#82cbff"/><path d="M266.8 290.2 276.5 288.0 269.1 285.7 259.3 288.2Z" fill="#3bc1ff" stroke="#3bc1ff"/><path d="M468.3 324.8 478.0 312.0 470.5 302.9 460.8 314.9Z" fill="#e0fff1" stroke="#e0fff1"/><path d="M406.8 334.7 416.6 325.6 409.1 312.8 399.4 322.1Z" fill="#99ffdd" stroke="#99ffdd"/><path d="M345.4 321.5 355.2 316.0 347.7 301.8 337.9 306.8Z" fill="#8cb2fd" stroke="#8cb2fd"/><path d="M546.9 293.2 556.6 288.4 549.2 285.4 539.4 289.3Z" fill="#6ccaff" stroke="#6ccaff"/><path d="M284.0 294.7 293.8 292.6 286.3 285.8 276.5 288.0Z" fill="#65c5ff" stroke="#65c5ff"/><path d="M485.5 320.8 495.2 307.7 487.7 299.9 478.0 312.0Z" fill="#a5befe" stroke="#a5befe"/><path d="M424.1 337.1 433.8 327.2 426.3 315.3 416.6 325.6Z" fill="#3cffd2" stroke="#3cffd2"/><path d="M362.6 330.6 372.4 324.1 364.9 309.7 355.2 316.0Z" fill="#87fff7" stroke="#87fff7"/><path d="M564.1 291.4 573.9 290.1 566.4 287.6 556.6 288.4Z" fill="#33beff" stroke="#33beff"/><path d="M301.2 303.4 311.0 300.8 303.5 290.1 293.8 292.6Z" fill="#83c2ff" stroke="#83c2ff"/><path d="M502.7 315.2 512.4 302.5 505.0 296.1 495.2 307.7Z" fill="#a3c0ff" stroke="#a3c0ff"/><path d="M441.3 337.8 451.0 326.9 443.6 316.0 433.8 327.2Z" fill="#ffffff" stroke="#ffffff"/><path d="M379.9 337.6 389.6 330.4 382.1 316.7 372.4 324.1Z" fill="#65ffe9" stroke="#65ffe9"/><path d="M318.5 314.6 328.2 311.0 320.7 297.6 311.0 300.8Z" fill="#93b6ff" stroke="#93b6ff"/><path d="M519.9 308.7 529.7 297.3 522.2 292.3 512.4 302.5Z" fill="#9fc8ff" stroke="#9fc8ff"/><path d="M257.0 292.3 266.8 290.2 259.3 288.2 249.6 290.9Z" fill="#2bb9ff" stroke="#2bb9ff"/><path d="M458.5 336.8 468.3 324.8 460.8 314.9 451.0 326.9Z" fill="#e1fffd" stroke="#e1fffd"/><path d="M397.1 342.3 406.8 334.7 399.4 322.1 389.6 330.4Z" fill="#ffffff" stroke="#ffffff"/><path d="M335.7 326.1 345.4 321.5 337.9 306.8 328.2 311.0Z" fill="#95a8ff" stroke="#95a8ff"/><path d="M537.1 302.1 546.9 293.2 539.4 289.3 529.7 297.3Z" fill="#90cdff" stroke="#90cdff"/><path d="M274.3 296.4 284.0 294.7 276.5 288.0 266.8 290.2Z" fill="#6fcaff" stroke="#6fcaff"/><path d="M475.7 333.8 485.5 320.8 478.0 312.0 468.3 324.8Z" fill="#0059ff" stroke="#0059ff"/><path d="M414.3 345.2 424.1 337.1 416.6 325.6 406.8 334.7Z" fill="#f7ffff" stroke="#f7ffff"/><path d="M352.9 336.1 362.6 330.6 355.2 316.0 345.4 321.5Z" fill="#16f1fe" stroke="#16f1fe"/><path d="M554.4 297.0 564.1 291.4 556.6 288.4 546.9 293.2Z" fill="#6fcaff" stroke="#6fcaff"/><path d="M291.5 305.3 301.2 303.4 293.8 292.6 284.0 294.7Z" fill="#7ebfff" stroke="#7ebfff"/><path d="M493.0 328.9 502.7 315.2 495.2 307.7 485.5 320.8Z" fill="#a3adff" stroke="#a3adff"/><path d="M431.5 346.5 441.3 337.8 433.8 327.2 424.1 337.1Z" fill="#ffffff" stroke="#ffffff"/><path d="M370.1 343.5 379.9 337.6 372.4 324.1 362.6 330.6Z" fill="#3fffff" stroke="#3fffff"/><path d="M571.6 294.5 581.3 292.8 573.9 290.1 564.1 291.4Z" fill="#2ebcff" stroke="#2ebcff"/><path d="M308.7 317.3 318.5 314.6 311.0 300.8 301.2 303.4Z" fill="#8bb0ff" stroke="#8bb0ff"/><path d="M510.2 322.2 519.9 308.7 512.4 302.5 502.7 315.2Z" fill="#9fb7ff" stroke="#9fb7ff"/><path d="M247.3 294.6 257.0 292.3 249.6 290.9 239.8 293.8Z" fill="#22b4ff" stroke="#22b4ff"/><path d="M448.8 346.6 458.5 336.8 451.0 326.9 441.3 337.8Z" fill="#dffdff" stroke="#dffdff"/><path d="M387.3 348.4 397.1 342.3 389.6 330.4 379.9 337.6Z" fill="#ffffff" stroke="#ffffff"/><path d="M325.9 329.7 335.7 326.1 328.2 311.0 318.5 314.6Z" fill="#96a0ff" stroke="#96a0ff"/><path d="M527.4 314.3 537.1 302.1 529.7 297.3 519.9 308.7Z" fill="#9ec3ff" stroke="#9ec3ff"/><path d="M264.5 297.9 274.3 296.4 266.8 290.2 257.0 292.3Z" fill="#5fc5ff" stroke="#5fc5ff"/><path d="M466.0 345.1 475.7 333.8 468.3 324.8 458.5 336.8Z" fill="#7fefff" stroke="#7fefff"/><path d="M404.6 351.1 414.3 345.2 406.8 334.7 397.1 342.3Z" fill="#ffffff" stroke="#ffffff"/><path d="M343.2 340.6 352.9 336.1 345.4 321.5 335.7 326.1Z" fill="#728ffe" stroke="#728ffe"/><path d="M544.6 306.5 554.4 297.0 546.9 293.2 537.1 302.1Z" fill="#88c6ff" stroke="#88c6ff"/><path d="M281.7 306.7 291.5 305.3 284.0 294.7 274.3 296.4Z" fill="#7ec1ff" stroke="#7ec1ff"/><path d="M483.2 341.7 493.0 328.9 485.5 320.8 475.7 333.8Z" fill="#8cb0fc" stroke="#8cb0fc"/><path d="M421.8 352.6 431.5 346.5 424.1 337.1 414.3 345.2Z" fill="#57e7ff" stroke="#57e7ff"/><path d="M360.4 348.3 370.1 343.5 362.6 330.6 352.9 336.1Z" fill="#bff3ff" stroke="#bff3ff"/><path d="M561.8 300.4 571.6 294.5 564.1 291.4 554.4 297.0Z" fill="#6dc8ff" stroke="#6dc8ff"/><path d="M299.0 319.1 308.7 317.3 301.2 303.4 291.5 305.3Z" fill="#88aeff" stroke="#88aeff"/><path d="M500.4 336.1 510.2 322.2 502.7 315.2 493.0 328.9Z" fill="#9ea2fd" stroke="#9ea2fd"/><path d="M237.6 297.1 247.3 294.6 239.8 293.8 230.1 297.2Z" fill="#24b4ff" stroke="#24b4ff"/><path d="M439.0 353.2 448.8 346.6 441.3 337.8 431.5 346.5Z" fill="#ffffff" stroke="#ffffff"/><path d="M377.6 352.9 387.3 348.4 379.9 337.6 370.1 343.5Z" fill="#4fdeff" stroke="#4fdeff"/><path d="M579.1 297.5 588.8 295.7 581.3 292.8 571.6 294.5Z" fill="#34beff" stroke="#34beff"/><path d="M316.2 332.5 325.9 329.7 318.5 314.6 308.7 317.3Z" fill="#9098fe" stroke="#9098fe"/><path d="M517.7 328.3 527.4 314.3 519.9 308.7 510.2 322.2Z" fill="#9eafff" stroke="#9eafff"/><path d="M254.8 299.2 264.5 297.9 257.0 292.3 247.3 294.6Z" fill="#55c3ff" stroke="#55c3ff"/><path d="M456.2 353.2 466.0 345.1 458.5 336.8 448.8 346.6Z" fill="#7fe7ff" stroke="#7fe7ff"/><path d="M394.8 354.9 404.6 351.1 397.1 342.3 387.3 348.4Z" fill="#ffffff" stroke="#ffffff"/><path d="M333.4 344.1 343.2 340.6 335.7 326.1 325.9 329.7Z" fill="#848ef6" stroke="#848ef6"/><path d="M534.9 319.3 544.6 306.5 537.1 302.1 527.4 314.3Z" fill="#96baff" stroke="#96baff"/><path d="M272.0 307.5 281.7 306.7 274.3 296.4 264.5 297.9Z" fill="#6fbcff" stroke="#6fbcff"/><path d="M473.5 351.8 483.2 341.7 475.7 333.8 466.0 345.1Z" fill="#1fd5ff" stroke="#1fd5ff"/><path d="M412.0 355.7 421.8 352.6 414.3 345.2 404.6 351.1Z" fill="#ffffff" stroke="#ffffff"/><path d="M350.6 352.2 360.4 348.3 352.9 336.1 343.2 340.6Z" fill="#bfebff" stroke="#bfebff"/><path d="M552.1 310.4 561.8 300.4 554.4 297.0 544.6 306.5Z" fill="#8bc6ff" stroke="#8bc6ff"/><path d="M289.2 320.1 299.0 319.1 291.5 305.3 281.7 306.7Z" fill="#81aaff" stroke="#81aaff"/><path d="M490.7 348.3 500.4 336.1 493.0 328.9 483.2 341.7Z" fill="#989ff1" stroke="#989ff1"/><path d="M227.8 300.0 237.6 297.1 230.1 297.2 220.3 301.0Z" fill="#14a8ff" stroke="#14a8ff"/><path d="M429.3 356.3 439.0 353.2 431.5 346.5 421.8 352.6Z" fill="#4ad1ff" stroke="#4ad1ff"/><path d="M367.9 356.3 377.6 352.9 370.1 343.5 360.4 348.3Z" fill="#4fc8ff" stroke="#4fc8ff"/><path d="M569.3 303.6 579.1 297.5 571.6 294.5 561.8 300.4Z" fill="#64c4ff" stroke="#64c4ff"/><path d="M306.4 334.3 316.2 332.5 308.7 317.3 299.0 319.1Z" fill="#838cfe" stroke="#838cfe"/><path d="M507.9 342.2 517.7 328.3 510.2 322.2 500.4 336.1Z" fill="#9e9ff8" stroke="#9e9ff8"/><path d="M245.0 300.6 254.8 299.2 247.3 294.6 237.6 297.1Z" fill="#58c8ff" stroke="#58c8ff"/><path d="M446.5 357.1 456.2 353.2 448.8 346.6 439.0 353.2Z" fill="#7fdfff" stroke="#7fdfff"/><path d="M385.1 357.1 394.8 354.9 387.3 348.4 377.6 352.9Z" fill="#e7f9ff" stroke="#e7f9ff"/><path d="M586.5 300.4 596.3 298.7 588.8 295.7 579.1 297.5Z" fill="#36bfff" stroke="#36bfff"/><path d="M323.7 346.8 333.4 344.1 325.9 329.7 316.2 332.5Z" fill="#8b8cee" stroke="#8b8cee"/><path d="M525.1 333.6 534.9 319.3 527.4 314.3 517.7 328.3Z" fill="#9aa5ff" stroke="#9aa5ff"/><path d="M262.3 307.9 272.0 307.5 264.5 297.9 254.8 299.2Z" fill="#72c2ff" stroke="#72c2ff"/><path d="M463.7 357.7 473.5 351.8 466.0 345.1 456.2 353.2Z" fill="#5bcbff" stroke="#5bcbff"/><path d="M402.3 356.3 412.0 355.7 404.6 351.1 394.8 354.9Z" fill="#4fd0ff" stroke="#4fd0ff"/><path d="M340.9 355.3 350.6 352.2 343.2 340.6 333.4 344.1Z" fill="#7fc7ff" stroke="#7fc7ff"/><path d="M542.4 323.5 552.1 310.4 544.6 306.5 534.9 319.3Z" fill="#94b5ff" stroke="#94b5ff"/><path d="M279.5 320.3 289.2 320.1 281.7 306.7 272.0 307.5Z" fill="#7dabff" stroke="#7dabff"/><path d="M480.9 357.0 490.7 348.3 483.2 341.7 473.5 351.8Z" fill="#57c0ff" stroke="#57c0ff"/><path d="M218.1 303.4 227.8 300.0 220.3 301.0 210.6 305.3Z" fill="#0c9eff" stroke="#0c9eff"/><path d="M419.5 355.7 429.3 356.3 421.8 352.6 412.0 355.7Z" fill="#ffffff" stroke="#ffffff"/><path d="M358.1 358.9 367.9 356.3 360.4 348.3 350.6 352.2Z" fill="#039dff" stroke="#039dff"/><path d="M559.6 313.7 569.3 303.6 561.8 300.4 552.1 310.4Z" fill="#7ebfff" stroke="#7ebfff"/><path d="M296.7 335.1 306.4 334.3 299.0 319.1 289.2 320.1Z" fill="#8390ff" stroke="#8390ff"/><path d="M498.2 353.8 507.9 342.2 500.4 336.1 490.7 348.3Z" fill="#9fa1e8" stroke="#9fa1e8"/><path d="M235.3 302.2 245.0 300.6 237.6 297.1 227.8 300.0Z" fill="#35beff" stroke="#35beff"/><path d="M436.7 356.4 446.5 357.1 439.0 353.2 429.3 356.3Z" fill="#ffffff" stroke="#ffffff"/><path d="M375.3 358.2 385.1 357.1 377.6 352.9 367.9 356.3Z" fill="#ffffff" stroke="#ffffff"/><path d="M576.8 306.3 586.5 300.4 579.1 297.5 569.3 303.6Z" fill="#61c3ff" stroke="#61c3ff"/><path d="M313.9 348.6 323.7 346.8 316.2 332.5 306.4 334.3Z" fill="#8383ed" stroke="#8383ed"/><path d="M515.4 347.4 525.1 333.6 517.7 328.3 507.9 342.2Z" fill="#9797f3" stroke="#9797f3"/><path d="M252.5 308.0 262.3 307.9 254.8 299.2 245.0 300.6Z" fill="#65c0ff" stroke="#65c0ff"/><path d="M454.0 358.4 463.7 357.7 456.2 353.2 446.5 357.1Z" fill="#0793ff" stroke="#0793ff"/><path d="M392.6 355.1 402.3 356.3 394.8 354.9 385.1 357.1Z" fill="#ffffff" stroke="#ffffff"/><path d="M594.0 303.2 603.8 301.9 596.3 298.7 586.5 300.4Z" fill="#30bdff" stroke="#30bdff"/><path d="M331.1 357.8 340.9 355.3 333.4 344.1 323.7 346.8Z" fill="#8392e8" stroke="#8392e8"/><path d="M532.6 338.0 542.4 323.5 534.9 319.3 525.1 333.6Z" fill="#939dff" stroke="#939dff"/><path d="M269.7 319.9 279.5 320.3 272.0 307.5 262.3 307.9Z" fill="#7cb1ff" stroke="#7cb1ff"/><path d="M471.2 360.5 480.9 357.0 473.5 351.8 463.7 357.7Z" fill="#7fbfff" stroke="#7fbfff"/><path d="M208.3 307.5 218.1 303.4 210.6 305.3 200.8 310.2Z" fill="#0497ff" stroke="#0497ff"/><path d="M409.8 352.3 419.5 355.7 412.0 355.7 402.3 356.3Z" fill="#f1fbff" stroke="#f1fbff"/><path d="M348.4 361.1 358.1 358.9 350.6 352.2 340.9 355.3Z" fill="#99ceff" stroke="#99ceff"/><path d="M549.8 326.9 559.6 313.7 552.1 310.4 542.4 323.5Z" fill="#89adff" stroke="#89adff"/><path d="M287.0 335.1 296.7 335.1 289.2 320.1 279.5 320.3Z" fill="#8293ff" stroke="#8293ff"/><path d="M488.4 361.1 498.2 353.8 490.7 348.3 480.9 357.0Z" fill="#0067ff" stroke="#0067ff"/><path d="M225.5 304.3 235.3 302.2 227.8 300.0 218.1 303.4Z" fill="#36bbff" stroke="#36bbff"/><path d="M427.0 351.5 436.7 356.4 429.3 356.3 419.5 355.7Z" fill="#4fd1ff" stroke="#4fd1ff"/><path d="M365.6 358.9 375.3 358.2 367.9 356.3 358.1 358.9Z" fill="#3fabff" stroke="#3fabff"/><path d="M567.1 316.3 576.8 306.3 569.3 303.6 559.6 313.7Z" fill="#7fbfff" stroke="#7fbfff"/><path d="M304.2 349.6 313.9 348.6 306.4 334.3 296.7 335.1Z" fill="#8585ef" stroke="#8585ef"/><path d="M505.6 358.4 515.4 347.4 507.9 342.2 498.2 353.8Z" fill="#9c9ce0" stroke="#9c9ce0"/><path d="M242.8 308.2 252.5 308.0 245.0 300.6 235.3 302.2Z" fill="#55beff" stroke="#55beff"/><path d="M444.2 353.6 454.0 358.4 446.5 357.1 436.7 356.4Z" fill="#ffffff" stroke="#ffffff"/><path d="M382.8 353.1 392.6 355.1 385.1 357.1 375.3 358.2Z" fill="#ffffff" stroke="#ffffff"/><path d="M584.3 308.8 594.0 303.2 586.5 300.4 576.8 306.3Z" fill="#68c6ff" stroke="#68c6ff"/><path d="M321.4 359.8 331.1 357.8 323.7 346.8 313.9 348.6Z" fill="#7c7ed8" stroke="#7c7ed8"/><path d="M522.9 351.7 532.6 338.0 525.1 333.6 515.4 347.4Z" fill="#8f8fef" stroke="#8f8fef"/><path d="M260.0 319.0 269.7 319.9 262.3 307.9 252.5 308.0Z" fill="#75b3ff" stroke="#75b3ff"/><path d="M461.4 357.9 471.2 360.5 463.7 357.7 454.0 358.4Z" fill="#eff8ff" stroke="#eff8ff"/><path d="M198.6 312.3 208.3 307.5 200.8 310.2 191.1 315.6Z" fill="#058aff" stroke="#058aff"/><path d="M400.0 347.0 409.8 352.3 402.3 356.3 392.6 355.1Z" fill="#c3f0ff" stroke="#c3f0ff"/><path d="M601.5 306.1 611.2 305.3 603.8 301.9 594.0 303.2Z" fill="#2fbcff" stroke="#2fbcff"/><path d="M338.6 363.4 348.4 361.1 340.9 355.3 331.1 357.8Z" fill="#99bdff" stroke="#99bdff"/><path d="M540.1 341.4 549.8 326.9 542.4 323.5 532.6 338.0Z" fill="#8c93fe" stroke="#8c93fe"/><path d="M277.2 334.1 287.0 335.1 279.5 320.3 269.7 319.9Z" fill="#7690ff" stroke="#7690ff"/><path d="M478.7 362.3 488.4 361.1 480.9 357.0 471.2 360.5Z" fill="#a3c5ff" stroke="#a3c5ff"/><path d="M215.8 307.1 225.5 304.3 218.1 303.4 208.3 307.5Z" fill="#05a5ff" stroke="#05a5ff"/><path d="M417.3 343.4 427.0 351.5 419.5 355.7 409.8 352.3Z" fill="#e6f8ff" stroke="#e6f8ff"/><path d="M355.8 359.9 365.6 358.9 358.1 358.9 348.4 361.1Z" fill="#afd7ff" stroke="#afd7ff"/><path d="M557.3 329.4 567.1 316.3 559.6 313.7 549.8 326.9Z" fill="#82a8ff" stroke="#82a8ff"/><path d="M294.4 349.6 304.2 349.6 296.7 335.1 287.0 335.1Z" fill="#797af2" stroke="#797af2"/><path d="M495.9 364.4 505.6 358.4 498.2 353.8 488.4 361.1Z" fill="#858cd8" stroke="#858cd8"/><path d="M233.0 308.7 242.8 308.2 235.3 302.2 225.5 304.3Z" fill="#51c2ff" stroke="#51c2ff"/><path d="M434.5 344.1 444.2 353.6 436.7 356.4 427.0 351.5Z" fill="#ffffff" stroke="#ffffff"/><path d="M373.1 351.4 382.8 353.1 375.3 358.2 365.6 358.9Z" fill="#65ceff" stroke="#65ceff"/><path d="M574.5 318.3 584.3 308.8 576.8 306.3 567.1 316.3Z" fill="#77bcff" stroke="#77bcff"/><path d="M311.7 361.3 321.4 359.8 313.9 348.6 304.2 349.6Z" fill="#7777d2" stroke="#7777d2"/><path d="M513.1 362.2 522.9 351.7 515.4 347.4 505.6 358.4Z" fill="#9090d9" stroke="#9090d9"/><path d="M250.2 317.8 260.0 319.0 252.5 308.0 242.8 308.2Z" fill="#64b3ff" stroke="#64b3ff"/><path d="M451.7 349.1 461.4 357.9 454.0 358.4 444.2 353.6Z" fill="#7fcfff" stroke="#7fcfff"/><path d="M188.8 317.9 198.6 312.3 191.1 315.6 181.4 321.6Z" fill="#077bff" stroke="#077bff"/><path d="M390.3 341.3 400.0 347.0 392.6 355.1 382.8 353.1Z" fill="#57d5ff" stroke="#57d5ff"/><path d="M591.8 310.9 601.5 306.1 594.0 303.2 584.3 308.8Z" fill="#54bfff" stroke="#54bfff"/><path d="M328.9 365.7 338.6 363.4 331.1 357.8 321.4 359.8Z" fill="#575ac7" stroke="#575ac7"/><path d="M530.3 355.0 540.1 341.4 532.6 338.0 522.9 351.7Z" fill="#8e8eed" stroke="#8e8eed"/><path d="M267.5 332.4 277.2 334.1 269.7 319.9 260.0 319.0Z" fill="#7498ff" stroke="#7498ff"/><path d="M468.9 356.6 478.7 362.3 471.2 360.5 461.4 357.9Z" fill="#2b95ff" stroke="#2b95ff"/><path d="M206.1 310.7 215.8 307.1 208.3 307.5 198.6 312.3Z" fill="#009bff" stroke="#009bff"/><path d="M407.5 333.5 417.3 343.4 409.8 352.3 400.0 347.0Z" fill="#a3f9ff" stroke="#a3f9ff"/><path d="M609.0 309.0 618.7 308.9 611.2 305.3 601.5 306.1Z" fill="#2bb9ff" stroke="#2bb9ff"/><path d="M346.1 361.7 355.8 359.9 348.4 361.1 338.6 363.4Z" fill="#d7e8ff" stroke="#d7e8ff"/><path d="M547.6 343.9 557.3 329.4 549.8 326.9 540.1 341.4Z" fill="#848dfe" stroke="#848dfe"/><path d="M284.7 348.7 294.4 349.6 287.0 335.1 277.2 334.1Z" fill="#7678f7" stroke="#7678f7"/><path d="M486.1 363.7 495.9 364.4 488.4 361.1 478.7 362.3Z" fill="#7fa7ff" stroke="#7fa7ff"/><path d="M223.3 309.8 233.0 308.7 225.5 304.3 215.8 307.1Z" fill="#4fc6ff" stroke="#4fc6ff"/><path d="M424.7 330.9 434.5 344.1 427.0 351.5 417.3 343.4Z" fill="#0fe1ff" stroke="#0fe1ff"/><path d="M363.3 350.8 373.1 351.4 365.6 358.9 355.8 359.9Z" fill="#1f9dff" stroke="#1f9dff"/><path d="M564.8 331.1 574.5 318.3 567.1 316.3 557.3 329.4Z" fill="#7ca4ff" stroke="#7ca4ff"/><path d="M301.9 361.9 311.7 361.3 304.2 349.6 294.4 349.6Z" fill="#7272d6" stroke="#7272d6"/><path d="M503.4 367.3 513.1 362.2 505.6 358.4 495.9 364.4Z" fill="#6f6fc1" stroke="#6f6fc1"/><path d="M240.5 316.6 250.2 317.8 242.8 308.2 233.0 308.7Z" fill="#5fbaff" stroke="#5fbaff"/><path d="M442.0 334.8 451.7 349.1 444.2 353.6 434.5 344.1Z" fill="#c8f8ff" stroke="#c8f8ff"/><path d="M179.1 324.1 188.8 317.9 181.4 321.6 171.6 327.9Z" fill="#1d72ff" stroke="#1d72ff"/><path d="M380.5 336.6 390.3 341.3 382.8 353.1 373.1 351.4Z" fill="#3be4ff" stroke="#3be4ff"/><path d="M582.0 319.8 591.8 310.9 584.3 308.8 574.5 318.3Z" fill="#72bbff" stroke="#72bbff"/><path d="M319.1 367.9 328.9 365.7 321.4 359.8 311.7 361.3Z" fill="#6969c1" stroke="#6969c1"/><path d="M520.6 365.4 530.3 355.0 522.9 351.7 513.1 362.2Z" fill="#8383d2" stroke="#8383d2"/><path d="M257.7 330.1 267.5 332.4 260.0 319.0 250.2 317.8Z" fill="#699aff" stroke="#699aff"/><path d="M459.2 344.0 468.9 356.6 461.4 357.9 451.7 349.1Z" fill="#effaff" stroke="#effaff"/><path d="M196.3 315.3 206.1 310.7 198.6 312.3 188.8 317.9Z" fill="#008eff" stroke="#008eff"/><path d="M397.8 323.6 407.5 333.5 400.0 347.0 390.3 341.3Z" fill="#5afff4" stroke="#5afff4"/><path d="M599.2 313.0 609.0 309.0 601.5 306.1 591.8 310.9Z" fill="#4ec0ff" stroke="#4ec0ff"/><path d="M336.4 364.5 346.1 361.7 338.6 363.4 328.9 365.7Z" fill="#004eff" stroke="#004eff"/><path d="M537.8 357.6 547.6 343.9 540.1 341.4 530.3 355.0Z" fill="#8282eb" stroke="#8282eb"/><path d="M274.9 346.7 284.7 348.7 277.2 334.1 267.5 332.4Z" fill="#6c74fd" stroke="#6c74fd"/><path d="M476.4 355.5 486.1 363.7 478.7 362.3 468.9 356.6Z" fill="#7fb7ff" stroke="#7fb7ff"/><path d="M213.5 311.8 223.3 309.8 215.8 307.1 206.1 310.7Z" fill="#22b5ff" stroke="#22b5ff"/><path d="M415.0 316.2 424.7 330.9 417.3 343.4 407.5 333.5Z" fill="#d2fffc" stroke="#d2fffc"/><path d="M616.5 312.2 626.2 313.0 618.7 308.9 609.0 309.0Z" fill="#20b2ff" stroke="#20b2ff"/><path d="M353.6 352.1 363.3 350.8 355.8 359.9 346.1 361.7Z" fill="#1f8fff" stroke="#1f8fff"/><path d="M555.0 345.4 564.8 331.1 557.3 329.4 547.6 343.9Z" fill="#7582ff" stroke="#7582ff"/><path d="M292.2 361.6 301.9 361.9 294.4 349.6 284.7 348.7Z" fill="#7575dd" stroke="#7575dd"/><path d="M493.6 365.4 503.4 367.3 495.9 364.4 486.1 363.7Z" fill="#0040ff" stroke="#0040ff"/><path d="M230.8 315.9 240.5 316.6 233.0 308.7 223.3 309.8Z" fill="#53bcff" stroke="#53bcff"/><path d="M432.2 316.9 442.0 334.8 434.5 344.1 424.7 330.9Z" fill="#d9fffc" stroke="#d9fffc"/><path d="M169.3 330.8 179.1 324.1 171.6 327.9 161.9 334.3Z" fill="#1558ff" stroke="#1558ff"/><path d="M370.8 334.1 380.5 336.6 373.1 351.4 363.3 350.8Z" fill="#3fdbff" stroke="#3fdbff"/><path d="M572.3 332.0 582.0 319.8 574.5 318.3 564.8 331.1Z" fill="#79a7ff" stroke="#79a7ff"/><path d="M309.4 369.8 319.1 367.9 311.7 361.3 301.9 361.9Z" fill="#6969c0" stroke="#6969c0"/><path d="M510.9 370.2 520.6 365.4 513.1 362.2 503.4 367.3Z" fill="#6868be" stroke="#6868be"/><path d="M248.0 327.5 257.7 330.1 250.2 317.8 240.5 316.6Z" fill="#5ea2ff" stroke="#5ea2ff"/><path d="M449.4 325.6 459.2 344.0 451.7 349.1 442.0 334.8Z" fill="#effeff" stroke="#effeff"/><path d="M186.6 320.9 196.3 315.3 188.8 317.9 179.1 324.1Z" fill="#017dff" stroke="#017dff"/><path d="M388.0 315.6 397.8 323.6 390.3 341.3 380.5 336.6Z" fill="#ffffff" stroke="#ffffff"/><path d="M589.5 320.9 599.2 313.0 591.8 310.9 582.0 319.8Z" fill="#65bbff" stroke="#65bbff"/><path d="M326.6 367.9 336.4 364.5 328.9 365.7 319.1 367.9Z" fill="#0025ff" stroke="#0025ff"/><path d="M528.1 368.1 537.8 357.6 530.3 355.0 520.6 365.4Z" fill="#8080d0" stroke="#8080d0"/><path d="M265.2 343.9 274.9 346.7 267.5 332.4 257.7 330.1Z" fill="#6a7dff" stroke="#6a7dff"/><path d="M466.7 340.0 476.4 355.5 468.9 356.6 459.2 344.0Z" fill="#ffffff" stroke="#ffffff"/><path d="M203.8 314.9 213.5 311.8 206.1 310.7 196.3 315.3Z" fill="#23aeff" stroke="#23aeff"/><path d="M405.2 302.0 415.0 316.2 407.5 333.5 397.8 323.6Z" fill="#87ffb7" stroke="#87ffb7"/><path d="M606.7 315.0 616.5 312.2 609.0 309.0 599.2 313.0Z" fill="#44bfff" stroke="#44bfff"/><path d="M343.8 355.4 353.6 352.1 346.1 361.7 336.4 364.5Z" fill="#dfebff" stroke="#dfebff"/><path d="M545.3 359.2 555.0 345.4 547.6 343.9 537.8 357.6Z" fill="#7575eb" stroke="#7575eb"/><path d="M282.4 360.2 292.2 361.6 284.7 348.7 274.9 346.7Z" fill="#6969e3" stroke="#6969e3"/><path d="M483.9 355.6 493.6 365.4 486.1 363.7 476.4 355.5Z" fill="#f4f7ff" stroke="#f4f7ff"/><path d="M221.0 315.9 230.8 315.9 223.3 309.8 213.5 311.8Z" fill="#45bfff" stroke="#45bfff"/><path d="M422.5 297.4 432.2 316.9 424.7 330.9 415.0 316.2Z" fill="#ffffff" stroke="#ffffff"/><path d="M623.9 315.7 633.7 317.5 626.2 313.0 616.5 312.2Z" fill="#0fa7ff" stroke="#0fa7ff"/><path d="M159.6 337.7 169.3 330.8 161.9 334.3 152.1 340.5Z" fill="#1946ff" stroke="#1946ff"/><path d="M361.1 334.7 370.8 334.1 363.3 350.8 353.6 352.1Z" fill="#ffffff" stroke="#ffffff"/><path d="M562.5 346.0 572.3 332.0 564.8 331.1 555.0 345.4Z" fill="#6f80ff" stroke="#6f80ff"/><path d="M299.6 371.0 309.4 369.8 301.9 361.9 292.2 361.6Z" fill="#5f5fbf" stroke="#5f5fbf"/><path d="M501.1 367.9 510.9 370.2 503.4 367.3 493.6 365.4Z" fill="#7780ff" stroke="#7780ff"/><path d="M238.2 325.0 248.0 327.5 240.5 316.6 230.8 315.9Z" fill="#55abff" stroke="#55abff"/><path d="M439.7 303.4 449.4 325.6 442.0 334.8 432.2 316.9Z" fill="#cdffe8" stroke="#cdffe8"/><path d="M176.8 327.4 186.6 320.9 179.1 324.1 169.3 330.8Z" fill="#0068ff" stroke="#0068ff"/><path d="M378.3 311.0 388.0 315.6 380.5 336.6 370.8 334.1Z" fill="#49ffd5" stroke="#49ffd5"/><path d="M579.7 332.3 589.5 320.9 582.0 319.8 572.3 332.0Z" fill="#6da7ff" stroke="#6da7ff"/><path d="M316.9 371.7 326.6 367.9 319.1 367.9 309.4 369.8Z" fill="#4c4cb3" stroke="#4c4cb3"/><path d="M518.3 373.2 528.1 368.1 520.6 365.4 510.9 370.2Z" fill="#5b5bb8" stroke="#5b5bb8"/><path d="M255.5 340.3 265.2 343.9 257.7 330.1 248.0 327.5Z" fill="#567bff" stroke="#567bff"/><path d="M456.9 318.3 466.7 340.0 459.2 344.0 449.4 325.6Z" fill="#ffffff" stroke="#ffffff"/><path d="M194.0 319.2 203.8 314.9 196.3 315.3 186.6 320.9Z" fill="#0c9aff" stroke="#0c9aff"/><path d="M395.5 290.6 405.2 302.0 397.8 323.6 388.0 315.6Z" fill="#e3ffdb" stroke="#e3ffdb"/><path d="M597.0 321.8 606.7 315.0 599.2 313.0 589.5 320.9Z" fill="#49b4ff" stroke="#49b4ff"/><path d="M334.1 360.5 343.8 355.4 336.4 364.5 326.6 367.9Z" fill="#2b6eff" stroke="#2b6eff"/><path d="M535.6 370.2 545.3 359.2 537.8 357.6 528.1 368.1Z" fill="#7d7dd2" stroke="#7d7dd2"/><path d="M272.7 357.6 282.4 360.2 274.9 346.7 265.2 343.9Z" fill="#5c5cee" stroke="#5c5cee"/><path d="M474.1 338.2 483.9 355.6 476.4 355.5 466.7 340.0Z" fill="#eff9ff" stroke="#eff9ff"/><path d="M211.3 317.1 221.0 315.9 213.5 311.8 203.8 314.9Z" fill="#42c2ff" stroke="#42c2ff"/><path d="M412.7 279.1 422.5 297.4 415.0 316.2 405.2 302.0Z" fill="#ffffff" stroke="#ffffff"/><path d="M614.2 317.3 623.9 315.7 616.5 312.2 606.7 315.0Z" fill="#42c1ff" stroke="#42c1ff"/><path d="M149.9 344.5 159.6 337.7 152.1 340.5 142.4 346.2Z" fill="#0b24ff" stroke="#0b24ff"/><path d="M351.3 338.6 361.1 334.7 353.6 352.1 343.8 355.4Z" fill="#bfebff" stroke="#bfebff"/><path d="M552.8 359.9 562.5 346.0 555.0 345.4 545.3 359.2Z" fill="#7474ef" stroke="#7474ef"/><path d="M289.9 371.0 299.6 371.0 292.2 361.6 282.4 360.2Z" fill="#6060c6" stroke="#6060c6"/><path d="M491.4 357.6 501.1 367.9 493.6 365.4 483.9 355.6Z" fill="#5786ff" stroke="#5786ff"/><path d="M228.5 323.0 238.2 325.0 230.8 315.9 221.0 315.9Z" fill="#51b6ff" stroke="#51b6ff"/><path d="M429.9 279.8 439.7 303.4 432.2 316.9 422.5 297.4Z" fill="#eaffd3" stroke="#eaffd3"/><path d="M631.4 319.8 641.2 322.5 633.7 317.5 623.9 315.7Z" fill="#049bff" stroke="#049bff"/><path d="M167.1 334.5 176.8 327.4 169.3 330.8 159.6 337.7Z" fill="#004dff" stroke="#004dff"/><path d="M368.5 310.8 378.3 311.0 370.8 334.1 361.1 334.7Z" fill="#49ffd5" stroke="#49ffd5"/><path d="M570.0 345.8 579.7 332.3 572.3 332.0 562.5 346.0Z" fill="#6681ff" stroke="#6681ff"/><path d="M307.1 375.2 316.9 371.7 309.4 369.8 299.6 371.0Z" fill="#3a3aa9" stroke="#3a3aa9"/><path d="M508.6 371.3 518.3 373.2 510.9 370.2 501.1 367.9Z" fill="#040496" stroke="#040496"/><path d="M245.7 336.4 255.5 340.3 248.0 327.5 238.2 325.0Z" fill="#508bff" stroke="#508bff"/><path d="M447.2 292.6 456.9 318.3 449.4 325.6 439.7 303.4Z" fill="#cdffe1" stroke="#cdffe1"/><path d="M184.3 324.8 194.0 319.2 186.6 320.9 176.8 327.4Z" fill="#0486ff" stroke="#0486ff"/><path d="M385.8 283.8 395.5 290.6 388.0 315.6 378.3 311.0Z" fill="#e7ffd7" stroke="#e7ffd7"/><path d="M587.2 332.0 597.0 321.8 589.5 320.9 579.7 332.3Z" fill="#66a9ff" stroke="#66a9ff"/><path d="M324.3 366.7 334.1 360.5 326.6 367.9 316.9 371.7Z" fill="#0011ff" stroke="#0011ff"/><path d="M525.8 376.2 535.6 370.2 528.1 368.1 518.3 373.2Z" fill="#5757b5" stroke="#5757b5"/><path d="M262.9 353.8 272.7 357.6 265.2 343.9 255.5 340.3Z" fill="#575dfb" stroke="#575dfb"/><path d="M464.4 314.4 474.1 338.2 466.7 340.0 456.9 318.3Z" fill="#0fffff" stroke="#0fffff"/><path d="M201.5 319.6 211.3 317.1 203.8 314.9 194.0 319.2Z" fill="#26b3ff" stroke="#26b3ff"/><path d="M403.0 264.4 412.7 279.1 405.2 302.0 395.5 290.6Z" fill="#ffffff" stroke="#ffffff"/><path d="M604.4 322.7 614.2 317.3 606.7 315.0 597.0 321.8Z" fill="#4ab9ff" stroke="#4ab9ff"/><path d="M140.1 350.7 149.9 344.5 142.4 346.2 132.6 351.1Z" fill="#0e16ff" stroke="#0e16ff"/><path d="M341.6 345.6 351.3 338.6 343.8 355.4 334.1 360.5Z" fill="#007fff" stroke="#007fff"/><path d="M543.0 371.5 552.8 359.9 545.3 359.2 535.6 370.2Z" fill="#6868d0" stroke="#6868d0"/><path d="M280.2 369.5 289.9 371.0 282.4 360.2 272.7 357.6Z" fill="#5d5dd0" stroke="#5d5dd0"/><path d="M481.6 339.5 491.4 357.6 483.9 355.6 474.1 338.2Z" fill="#8fd5ff" stroke="#8fd5ff"/><path d="M218.7 322.0 228.5 323.0 221.0 315.9 211.3 317.1Z" fill="#4cbcff" stroke="#4cbcff"/><path d="M420.2 257.8 429.9 279.8 422.5 297.4 412.7 279.1Z" fill="#ffffff" stroke="#ffffff"/><path d="M621.7 320.1 631.4 319.8 623.9 315.7 614.2 317.3Z" fill="#21b5ff" stroke="#21b5ff"/><path d="M157.3 341.9 167.1 334.5 159.6 337.7 149.9 344.5Z" fill="#0a3eff" stroke="#0a3eff"/><path d="M358.8 315.5 368.5 310.8 361.1 334.7 351.3 338.6Z" fill="#8fffef" stroke="#8fffef"/><path d="M560.3 359.7 570.0 345.8 562.5 346.0 552.8 359.9Z" fill="#6061f4" stroke="#6061f4"/><path d="M297.4 377.6 307.1 375.2 299.6 371.0 289.9 371.0Z" fill="#5050b2" stroke="#5050b2"/><path d="M498.8 361.5 508.6 371.3 501.1 367.9 491.4 357.6Z" fill="#4560ff" stroke="#4560ff"/><path d="M236.0 332.6 245.7 336.4 238.2 325.0 228.5 323.0Z" fill="#4498ff" stroke="#4498ff"/><path d="M437.4 265.8 447.2 292.6 439.7 303.4 429.9 279.8Z" fill="#ffffff" stroke="#ffffff"/><path d="M638.9 324.6 648.6 328.0 641.2 322.5 631.4 319.8Z" fill="#0192ff" stroke="#0192ff"/><path d="M174.6 331.5 184.3 324.8 176.8 327.4 167.1 334.5Z" fill="#0874ff" stroke="#0874ff"/><path d="M376.0 282.9 385.8 283.8 378.3 311.0 368.5 310.8Z" fill="#cfffaf" stroke="#cfffaf"/><path d="M577.5 344.7 587.2 332.0 579.7 332.3 570.0 345.8Z" fill="#6288ff" stroke="#6288ff"/><path d="M314.6 373.3 324.3 366.7 316.9 371.7 307.1 375.2Z" fill="#000090" stroke="#000090"/><path d="M516.1 375.5 525.8 376.2 518.3 373.2 508.6 371.3Z" fill="#2a2aa3" stroke="#2a2aa3"/><path d="M253.2 349.1 262.9 353.8 255.5 340.3 245.7 336.4Z" fill="#5870ff" stroke="#5870ff"/><path d="M454.6 286.6 464.4 314.4 456.9 318.3 447.2 292.6Z" fill="#87ff87" stroke="#87ff87"/><path d="M191.8 323.8 201.5 319.6 194.0 319.2 184.3 324.8Z" fill="#15a4ff" stroke="#15a4ff"/><path d="M393.2 255.6 403.0 264.4 395.5 290.6 385.8 283.8Z" fill="#ffe31f" stroke="#ffe31f"/><path d="M594.7 331.5 604.4 322.7 597.0 321.8 587.2 332.0Z" fill="#58acff" stroke="#58acff"/><path d="M130.4 356.0 140.1 350.7 132.6 351.1 122.9 354.9Z" fill="#1b1bfc" stroke="#1b1bfc"/><path d="M331.8 354.9 341.6 345.6 334.1 360.5 324.3 366.7Z" fill="#6f95ff" stroke="#6f95ff"/><path d="M533.3 378.8 543.0 371.5 535.6 370.2 525.8 376.2Z" fill="#5555b6" stroke="#5555b6"/><path d="M270.4 366.4 280.2 369.5 272.7 357.6 262.9 353.8Z" fill="#5656df" stroke="#5656df"/><path d="M471.9 315.0 481.6 339.5 474.1 338.2 464.4 314.4Z" fill="#afffff" stroke="#afffff"/><path d="M209.0 322.5 218.7 322.0 211.3 317.1 201.5 319.6Z" fill="#3ebfff" stroke="#3ebfff"/><path d="M410.5 240.2 420.2 257.8 412.7 279.1 403.0 264.4Z" fill="#ffe5bf" stroke="#ffe5bf"/><path d="M611.9 323.8 621.7 320.1 614.2 317.3 604.4 322.7Z" fill="#46bdff" stroke="#46bdff"/><path d="M147.6 349.1 157.3 341.9 149.9 344.5 140.1 350.7Z" fill="#0d2cff" stroke="#0d2cff"/><path d="M349.0 324.6 358.8 315.5 351.3 338.6 341.6 345.6Z" fill="#55e9ff" stroke="#55e9ff"/><path d="M550.5 371.9 560.3 359.7 552.8 359.9 543.0 371.5Z" fill="#5e5ed5" stroke="#5e5ed5"/><path d="M287.6 378.3 297.4 377.6 289.9 371.0 280.2 369.5Z" fill="#5252b6" stroke="#5252b6"/><path d="M489.1 344.1 498.8 361.5 491.4 357.6 481.6 339.5Z" fill="#0783ff" stroke="#0783ff"/><path d="M226.2 329.6 236.0 332.6 228.5 323.0 218.7 322.0Z" fill="#40aaff" stroke="#40aaff"/><path d="M427.7 240.9 437.4 265.8 429.9 279.8 420.2 257.8Z" fill="#ffbd4f" stroke="#ffbd4f"/><path d="M629.1 323.6 638.9 324.6 631.4 319.8 621.7 320.1Z" fill="#1aadff" stroke="#1aadff"/><path d="M164.8 338.9 174.6 331.5 167.1 334.5 157.3 341.9Z" fill="#2e74ff" stroke="#2e74ff"/><path d="M366.3 288.3 376.0 282.9 368.5 310.8 358.8 315.5Z" fill="#c7ffb7" stroke="#c7ffb7"/><path d="M567.7 358.4 577.5 344.7 570.0 345.8 560.3 359.7Z" fill="#5c62fb" stroke="#5c62fb"/><path d="M304.9 379.0 314.6 373.3 307.1 375.2 297.4 377.6Z" fill="#0b0b94" stroke="#0b0b94"/><path d="M506.3 367.3 516.1 375.5 508.6 371.3 498.8 361.5Z" fill="#2735ff" stroke="#2735ff"/><path d="M243.4 344.0 253.2 349.1 245.7 336.4 236.0 332.6Z" fill="#5181ff" stroke="#5181ff"/><path d="M444.9 257.6 454.6 286.6 447.2 292.6 437.4 265.8Z" fill="#ffffff" stroke="#ffffff"/><path d="M646.4 330.1 656.1 334.2 648.6 328.0 638.9 324.6Z" fill="#0286ff" stroke="#0286ff"/><path d="M182.0 329.4 191.8 323.8 184.3 324.8 174.6 331.5Z" fill="#098eff" stroke="#098eff"/><path d="M383.5 254.0 393.2 255.6 385.8 283.8 376.0 282.9Z" fill="#ffffff" stroke="#ffffff"/><path d="M585.0 343.1 594.7 331.5 587.2 332.0 577.5 344.7Z" fill="#548bff" stroke="#548bff"/><path d="M120.6 360.0 130.4 356.0 122.9 354.9 113.1 357.4Z" fill="#4a4af5" stroke="#4a4af5"/><path d="M322.1 365.1 331.8 354.9 324.3 366.7 314.6 373.3Z" fill="#0010ff" stroke="#0010ff"/><path d="M523.5 380.0 533.3 378.8 525.8 376.2 516.1 375.5Z" fill="#1b1b9b" stroke="#1b1b9b"/><path d="M260.7 361.8 270.4 366.4 262.9 353.8 253.2 349.1Z" fill="#5052f3" stroke="#5052f3"/><path d="M462.1 286.3 471.9 315.0 464.4 314.4 454.6 286.6Z" fill="#c2ffc2" stroke="#c2ffc2"/><path d="M199.3 324.7 209.0 322.5 201.5 319.6 191.8 323.8Z" fill="#41bfff" stroke="#41bfff"/><path d="M400.7 229.6 410.5 240.2 403.0 264.4 393.2 255.6Z" fill="#ffdbbf" stroke="#ffdbbf"/><path d="M602.2 331.1 611.9 323.8 604.4 322.7 594.7 331.5Z" fill="#38a7ff" stroke="#38a7ff"/><path d="M137.8 355.7 147.6 349.1 140.1 350.7 130.4 356.0Z" fill="#0b16ff" stroke="#0b16ff"/><path d="M339.3 337.2 349.0 324.6 341.6 345.6 331.8 354.9Z" fill="#04a0ff" stroke="#04a0ff"/><path d="M540.8 380.6 550.5 371.9 543.0 371.5 533.3 378.8Z" fill="#5252b7" stroke="#5252b7"/><path d="M277.9 376.9 287.6 378.3 280.2 369.5 270.4 366.4Z" fill="#4b4bc2" stroke="#4b4bc2"/><path d="M479.3 320.3 489.1 344.1 481.6 339.5 471.9 315.0Z" fill="#b3f7ff" stroke="#b3f7ff"/><path d="M216.5 327.8 226.2 329.6 218.7 322.0 209.0 322.5Z" fill="#44b7ff" stroke="#44b7ff"/><path d="M417.9 221.2 427.7 240.9 420.2 257.8 410.5 240.2Z" fill="#ffebe5" stroke="#ffebe5"/><path d="M619.4 325.6 629.1 323.6 621.7 320.1 611.9 323.8Z" fill="#3cbeff" stroke="#3cbeff"/><path d="M155.1 346.7 164.8 338.9 157.3 341.9 147.6 349.1Z" fill="#3360ff" stroke="#3360ff"/><path d="M356.5 299.6 366.3 288.3 358.8 315.5 349.0 324.6Z" fill="#9cffd2" stroke="#9cffd2"/><path d="M558.0 371.2 567.7 358.4 560.3 359.7 550.5 371.9Z" fill="#5353db" stroke="#5353db"/><path d="M295.1 382.9 304.9 379.0 297.4 377.6 287.6 378.3Z" fill="#4545ad" stroke="#4545ad"/><path d="M496.6 351.8 506.3 367.3 498.8 361.5 489.1 344.1Z" fill="#5794ff" stroke="#5794ff"/><path d="M233.7 339.1 243.4 344.0 236.0 332.6 226.2 329.6Z" fill="#4892ff" stroke="#4892ff"/><path d="M435.2 230.9 444.9 257.6 437.4 265.8 427.7 240.9Z" fill="#ff7000" stroke="#ff7000"/><path d="M636.6 327.9 646.4 330.1 638.9 324.6 629.1 323.6Z" fill="#009bff" stroke="#009bff"/><path d="M172.3 336.3 182.0 329.4 174.6 331.5 164.8 338.9Z" fill="#137dff" stroke="#137dff"/><path d="M373.7 260.1 383.5 254.0 376.0 282.9 366.3 288.3Z" fill="#ffffdf" stroke="#ffffdf"/><path d="M575.2 356.2 585.0 343.1 577.5 344.7 567.7 358.4Z" fill="#5060ff" stroke="#5060ff"/><path d="M110.9 362.6 120.6 360.0 113.1 357.4 103.4 358.5Z" fill="#4343ef" stroke="#4343ef"/><path d="M312.3 374.9 322.1 365.1 314.6 373.3 304.9 379.0Z" fill="#0000c0" stroke="#0000c0"/><path d="M513.8 374.3 523.5 380.0 516.1 375.5 506.3 367.3Z" fill="#0000b0" stroke="#0000b0"/><path d="M250.9 356.1 260.7 361.8 253.2 349.1 243.4 344.0Z" fill="#4c5dfe" stroke="#4c5dfe"/><path d="M452.4 256.7 462.1 286.3 454.6 286.6 444.9 257.6Z" fill="#fffaaf" stroke="#fffaaf"/><path d="M653.8 336.4 663.6 340.8 656.1 334.2 646.4 330.1Z" fill="#0a79ff" stroke="#0a79ff"/><path d="M189.5 328.8 199.3 324.7 191.8 323.8 182.0 329.4Z" fill="#2eafff" stroke="#2eafff"/><path d="M391.0 227.3 400.7 229.6 393.2 255.6 383.5 254.0Z" fill="#ffffff" stroke="#ffffff"/><path d="M592.4 341.2 602.2 331.1 594.7 331.5 585.0 343.1Z" fill="#4892ff" stroke="#4892ff"/><path d="M128.1 361.2 137.8 355.7 130.4 356.0 120.6 360.0Z" fill="#2222fc" stroke="#2222fc"/><path d="M329.6 351.6 339.3 337.2 331.8 354.9 322.1 365.1Z" fill="#0051ff" stroke="#0051ff"/><path d="M531.0 384.1 540.8 380.6 533.3 378.8 523.5 380.0Z" fill="#3f3fab" stroke="#3f3fab"/><path d="M268.1 373.3 277.9 376.9 270.4 366.4 260.7 361.8Z" fill="#4343d3" stroke="#4343d3"/><path d="M469.6 292.5 479.3 320.3 471.9 315.0 462.1 286.3Z" fill="#6affa4" stroke="#6affa4"/><path d="M206.7 327.8 216.5 327.8 209.0 322.5 199.3 324.7Z" fill="#42c0ff" stroke="#42c0ff"/><path d="M408.2 209.1 417.9 221.2 410.5 240.2 400.7 229.6Z" fill="#ffffff" stroke="#ffffff"/><path d="M609.7 331.0 619.4 325.6 611.9 323.8 602.2 331.1Z" fill="#3cb2ff" stroke="#3cb2ff"/><path d="M145.3 354.3 155.1 346.7 147.6 349.1 137.8 355.7Z" fill="#092aff" stroke="#092aff"/><path d="M346.8 315.6 356.5 299.6 349.0 324.6 339.3 337.2Z" fill="#7fffff" stroke="#7fffff"/><path d="M548.2 381.3 558.0 371.2 550.5 371.9 540.8 380.6Z" fill="#4949ba" stroke="#4949ba"/><path d="M285.4 384.3 295.1 382.9 287.6 378.3 277.9 376.9Z" fill="#3838aa" stroke="#3838aa"/><path d="M486.8 330.1 496.6 351.8 489.1 344.1 479.3 320.3Z" fill="#00afff" stroke="#00afff"/><path d="M224.0 335.3 233.7 339.1 226.2 329.6 216.5 327.8Z" fill="#35a0ff" stroke="#35a0ff"/><path d="M425.4 209.8 435.2 230.9 427.7 240.9 417.9 221.2Z" fill="#ffffff" stroke="#ffffff"/><path d="M626.9 328.3 636.6 327.9 629.1 323.6 619.4 325.6Z" fill="#36bdff" stroke="#36bdff"/><path d="M162.5 344.1 172.3 336.3 164.8 338.9 155.1 346.7Z" fill="#1b6aff" stroke="#1b6aff"/><path d="M364.0 273.5 373.7 260.1 366.3 288.3 356.5 299.6Z" fill="#d2ff3c" stroke="#d2ff3c"/><path d="M565.5 369.2 575.2 356.2 567.7 358.4 558.0 371.2Z" fill="#4f4fe8" stroke="#4f4fe8"/><path d="M302.6 382.9 312.3 374.9 304.9 379.0 295.1 382.9Z" fill="#090995" stroke="#090995"/><path d="M504.0 361.7 513.8 374.3 506.3 367.3 496.6 351.8Z" fill="#001fff" stroke="#001fff"/><path d="M241.2 350.0 250.9 356.1 243.4 344.0 233.7 339.1Z" fill="#4b78ff" stroke="#4b78ff"/><path d="M442.6 229.4 452.4 256.7 444.9 257.6 435.2 230.9Z" fill="#ffffff" stroke="#ffffff"/><path d="M644.1 333.2 653.8 336.4 646.4 330.1 636.6 327.9Z" fill="#0291ff" stroke="#0291ff"/><path d="M179.8 334.6 189.5 328.8 182.0 329.4 172.3 336.3Z" fill="#0f90ff" stroke="#0f90ff"/><path d="M381.2 234.1 391.0 227.3 383.5 254.0 373.7 260.1Z" fill="#ffc497" stroke="#ffc497"/><path d="M582.7 353.3 592.4 341.2 585.0 343.1 575.2 356.2Z" fill="#4268ff" stroke="#4268ff"/><path d="M118.3 365.3 128.1 361.2 120.6 360.0 110.9 362.6Z" fill="#4141f5" stroke="#4141f5"/><path d="M319.8 366.0 329.6 351.6 322.1 365.1 312.3 374.9Z" fill="#0001ff" stroke="#0001ff"/><path d="M521.3 381.5 531.0 384.1 523.5 380.0 513.8 374.3Z" fill="#00009b" stroke="#00009b"/><path d="M258.4 367.9 268.1 373.3 260.7 361.8 250.9 356.1Z" fill="#5657ef" stroke="#5657ef"/><path d="M459.9 263.5 469.6 292.5 462.1 286.3 452.4 256.7Z" fill="#f0ff1e" stroke="#f0ff1e"/><path d="M661.3 343.3 671.1 347.8 663.6 340.8 653.8 336.4Z" fill="#0a67ff" stroke="#0a67ff"/><path d="M197.0 329.9 206.7 327.8 199.3 324.7 189.5 328.8Z" fill="#44c0ff" stroke="#44c0ff"/><path d="M398.4 206.4 408.2 209.1 400.7 229.6 391.0 227.3Z" fill="#fef9f9" stroke="#fef9f9"/><path d="M599.9 339.4 609.7 331.0 602.2 331.1 592.4 341.2Z" fill="#3a9aff" stroke="#3a9aff"/><path d="M135.6 361.1 145.3 354.3 137.8 355.7 128.1 361.2Z" fill="#0a16ff" stroke="#0a16ff"/><path d="M337.0 334.3 346.8 315.6 339.3 337.2 329.6 351.6Z" fill="#00a6ff" stroke="#00a6ff"/><path d="M538.5 387.2 548.2 381.3 540.8 380.6 531.0 384.1Z" fill="#415cbe" stroke="#415cbe"/><path d="M275.6 382.8 285.4 384.3 277.9 376.9 268.1 373.3Z" fill="#3648c0" stroke="#3648c0"/><path d="M477.1 304.4 486.8 330.1 479.3 320.3 469.6 292.5Z" fill="#36ffc9" stroke="#36ffc9"/><path d="M214.2 333.0 224.0 335.3 216.5 327.8 206.7 327.8Z" fill="#29acff" stroke="#29acff"/><path d="M415.7 196.8 425.4 209.8 417.9 221.2 408.2 209.1Z" fill="#cf3f3f" stroke="#cf3f3f"/><path d="M617.1 331.7 626.9 328.3 619.4 325.6 609.7 331.0Z" fill="#39b8ff" stroke="#39b8ff"/><path d="M152.8 352.3 162.5 344.1 155.1 346.7 145.3 354.3Z" fill="#073eff" stroke="#073eff"/><path d="M354.3 292.7 364.0 273.5 356.5 299.6 346.8 315.6Z" fill="#6fff99" stroke="#6fff99"/><path d="M555.7 380.5 565.5 369.2 558.0 371.2 548.2 381.3Z" fill="#4346c7" stroke="#4346c7"/><path d="M292.8 388.0 302.6 382.9 295.1 382.9 285.4 384.3Z" fill="#344bb6" stroke="#344bb6"/><path d="M494.3 343.4 504.0 361.7 496.6 351.8 486.8 330.1Z" fill="#0066ff" stroke="#0066ff"/><path d="M231.4 344.4 241.2 350.0 233.7 339.1 224.0 335.3Z" fill="#4791ff" stroke="#4791ff"/><path d="M432.9 207.7 442.6 229.4 435.2 230.9 425.4 209.8Z" fill="#ffdfdf" stroke="#ffdfdf"/><path d="M634.4 332.1 644.1 333.2 636.6 327.9 626.9 328.3Z" fill="#0fa9ff" stroke="#0fa9ff"/><path d="M170.0 341.9 179.8 334.6 172.3 336.3 162.5 344.1Z" fill="#147cff" stroke="#147cff"/><path d="M371.5 249.3 381.2 234.1 373.7 260.1 364.0 273.5Z" fill="#ffd77f" stroke="#ffd77f"/><path d="M572.9 366.1 582.7 353.3 575.2 356.2 565.5 369.2Z" fill="#3c40f8" stroke="#3c40f8"/><path d="M310.1 378.7 319.8 366.0 312.3 374.9 302.6 382.9Z" fill="#0606ad" stroke="#0606ad"/><path d="M511.5 372.7 521.3 381.5 513.8 374.3 504.0 361.7Z" fill="#3333d8" stroke="#3333d8"/><path d="M248.7 361.3 258.4 367.9 250.9 356.1 241.2 350.0Z" fill="#535ffe" stroke="#535ffe"/><path d="M450.1 236.8 459.9 263.5 452.4 256.7 442.6 229.4Z" fill="#ffb477" stroke="#ffb477"/><path d="M651.6 339.5 661.3 343.3 653.8 336.4 644.1 333.2Z" fill="#007fff" stroke="#007fff"/><path d="M187.2 334.2 197.0 329.9 189.5 328.8 179.8 334.6Z" fill="#1da8ff" stroke="#1da8ff"/><path d="M388.7 213.6 398.4 206.4 391.0 227.3 381.2 234.1Z" fill="#f65553" stroke="#f65553"/><path d="M590.2 350.1 599.9 339.4 592.4 341.2 582.7 353.3Z" fill="#3674ff" stroke="#3674ff"/><path d="M125.8 366.7 135.6 361.1 128.1 361.2 118.3 365.3Z" fill="#2929fc" stroke="#2929fc"/><path d="M327.3 353.6 337.0 334.3 329.6 351.6 319.8 366.0Z" fill="#0049ff" stroke="#0049ff"/><path d="M528.7 387.9 538.5 387.2 531.0 384.1 521.3 381.5Z" fill="#001fa6" stroke="#001fa6"/><path d="M265.9 378.6 275.6 382.8 268.1 373.3 258.4 367.9Z" fill="#4a53d8" stroke="#4a53d8"/><path d="M467.3 277.6 477.1 304.4 469.6 292.5 459.9 263.5Z" fill="#d7ff89" stroke="#d7ff89"/><path d="M668.8 350.7 678.5 354.9 671.1 347.8 661.3 343.3Z" fill="#185bfd" stroke="#185bfd"/><path d="M204.5 332.9 214.2 333.0 206.7 327.8 197.0 329.9Z" fill="#2cb8ff" stroke="#2cb8ff"/><path d="M405.9 193.7 415.7 196.8 408.2 209.1 398.4 206.4Z" fill="#cf7f7f" stroke="#cf7f7f"/><path d="M607.4 338.1 617.1 331.7 609.7 331.0 599.9 339.4Z" fill="#1d9cff" stroke="#1d9cff"/><path d="M143.0 360.1 152.8 352.3 145.3 354.3 135.6 361.1Z" fill="#1531ff" stroke="#1531ff"/><path d="M344.5 315.5 354.3 292.7 346.8 315.6 337.0 334.3Z" fill="#01fffe" stroke="#01fffe"/><path d="M546.0 388.6 555.7 380.5 548.2 381.3 538.5 387.2Z" fill="#4587de" stroke="#4587de"/><path d="M283.1 389.5 292.8 388.0 285.4 384.3 275.6 382.8Z" fill="#006dd8" stroke="#006dd8"/><path d="M484.6 321.1 494.3 343.4 486.8 330.1 477.1 304.4Z" fill="#00d0ff" stroke="#00d0ff"/><path d="M221.7 340.0 231.4 344.4 224.0 335.3 214.2 333.0Z" fill="#2899ff" stroke="#2899ff"/><path d="M423.1 194.4 432.9 207.7 425.4 209.8 415.7 196.8Z" fill="#a20707" stroke="#a20707"/><path d="M624.6 333.6 634.4 332.1 626.9 328.3 617.1 331.7Z" fill="#49c4ff" stroke="#49c4ff"/><path d="M160.3 350.1 170.0 341.9 162.5 344.1 152.8 352.3Z" fill="#0d5dff" stroke="#0d5dff"/><path d="M361.7 271.4 371.5 249.3 364.0 273.5 354.3 292.7Z" fill="#e8ff16" stroke="#e8ff16"/><path d="M563.2 378.1 572.9 366.1 565.5 369.2 555.7 380.5Z" fill="#3137d6" stroke="#3137d6"/><path d="M300.3 388.1 310.1 378.7 302.6 382.9 292.8 388.0Z" fill="#0c1ca6" stroke="#0c1ca6"/><path d="M501.8 358.4 511.5 372.7 504.0 361.7 494.3 343.4Z" fill="#2d58f7" stroke="#2d58f7"/><path d="M238.9 354.4 248.7 361.3 241.2 350.0 231.4 344.4Z" fill="#5782ff" stroke="#5782ff"/><path d="M440.4 215.7 450.1 236.8 442.6 229.4 432.9 207.7Z" fill="#ff0800" stroke="#ff0800"/><path d="M641.8 337.1 651.6 339.5 644.1 333.2 634.4 332.1Z" fill="#109eff" stroke="#109eff"/><path d="M177.5 340.5 187.2 334.2 179.8 334.6 170.0 341.9Z" fill="#098fff" stroke="#098fff"/><path d="M379.0 230.2 388.7 213.6 381.2 234.1 371.5 249.3Z" fill="#ff4f00" stroke="#ff4f00"/><path d="M580.4 362.1 590.2 350.1 582.7 353.3 572.9 366.1Z" fill="#3048ff" stroke="#3048ff"/><path d="M317.5 371.2 327.3 353.6 319.8 366.0 310.1 378.7Z" fill="#1013e2" stroke="#1013e2"/><path d="M519.0 383.2 528.7 387.9 521.3 381.5 511.5 372.7Z" fill="#1616b7" stroke="#1616b7"/><path d="M256.1 372.2 265.9 378.6 258.4 367.9 248.7 361.3Z" fill="#4b4cee" stroke="#4b4cee"/><path d="M457.6 252.7 467.3 277.6 459.9 263.5 450.1 236.8Z" fill="#ffc500" stroke="#ffc500"/><path d="M659.1 346.6 668.8 350.7 661.3 343.3 651.6 339.5Z" fill="#0870ff" stroke="#0870ff"/><path d="M194.7 335.3 204.5 332.9 197.0 329.9 187.2 334.2Z" fill="#3bbcff" stroke="#3bbcff"/><path d="M396.2 201.3 405.9 193.7 398.4 206.4 388.7 213.6Z" fill="#d77f7f" stroke="#d77f7f"/><path d="M597.6 347.0 607.4 338.1 599.9 339.4 590.2 350.1Z" fill="#2080ff" stroke="#2080ff"/><path d="M133.3 367.0 143.0 360.1 135.6 361.1 125.8 366.7Z" fill="#070fff" stroke="#070fff"/><path d="M334.8 339.5 344.5 315.5 337.0 334.3 327.3 353.6Z" fill="#0099ff" stroke="#0099ff"/><path d="M536.2 392.5 546.0 388.6 538.5 387.2 528.7 387.9Z" fill="#00a3ff" stroke="#00a3ff"/><path d="M273.4 387.3 283.1 389.5 275.6 382.8 265.9 378.6Z" fill="#009afc" stroke="#009afc"/><path d="M474.8 297.5 484.6 321.1 477.1 304.4 467.3 277.6Z" fill="#80fe94" stroke="#80fe94"/><path d="M676.3 358.3 686.0 361.8 678.5 354.9 668.8 350.7Z" fill="#2d59ff" stroke="#2d59ff"/><path d="M211.9 337.7 221.7 340.0 214.2 333.0 204.5 332.9Z" fill="#1ca6ff" stroke="#1ca6ff"/><path d="M413.4 191.3 423.1 194.4 415.7 196.8 405.9 193.7Z" fill="#a14343" stroke="#a14343"/><path d="M614.9 337.8 624.6 333.6 617.1 331.7 607.4 338.1Z" fill="#1ca8ff" stroke="#1ca8ff"/><path d="M150.5 358.6 160.3 350.1 152.8 352.3 143.0 360.1Z" fill="#1143ff" stroke="#1143ff"/><path d="M352.0 297.9 361.7 271.4 354.3 292.7 344.5 315.5Z" fill="#92ffb9" stroke="#92ffb9"/><path d="M553.4 387.9 563.2 378.1 555.7 380.5 546.0 388.6Z" fill="#afe6ff" stroke="#afe6ff"/><path d="M290.6 393.3 300.3 388.1 292.8 388.0 283.1 389.5Z" fill="#5fc5ff" stroke="#5fc5ff"/><path d="M492.0 340.5 501.8 358.4 494.3 343.4 484.6 321.1Z" fill="#1680fd" stroke="#1680fd"/><path d="M229.2 348.3 238.9 354.4 231.4 344.4 221.7 340.0Z" fill="#3b8dff" stroke="#3b8dff"/><path d="M430.6 202.7 440.4 215.7 432.9 207.7 423.1 194.4Z" fill="#eebfbf" stroke="#eebfbf"/><path d="M632.1 336.8 641.8 337.1 634.4 332.1 624.6 333.6Z" fill="#29b5ff" stroke="#29b5ff"/><path d="M167.7 348.2 177.5 340.5 170.0 341.9 160.3 350.1Z" fill="#1278ff" stroke="#1278ff"/><path d="M369.2 254.5 379.0 230.2 371.5 249.3 361.7 271.4Z" fill="#ffd300" stroke="#ffd300"/><path d="M570.7 374.1 580.4 362.1 572.9 366.1 563.2 378.1Z" fill="#292eed" stroke="#292eed"/><path d="M307.8 385.3 317.5 371.2 310.1 378.7 300.3 388.1Z" fill="#1e1eb8" stroke="#1e1eb8"/><path d="M509.3 373.6 519.0 383.2 511.5 372.7 501.8 358.4Z" fill="#1218eb" stroke="#1218eb"/><path d="M246.4 364.7 256.1 372.2 248.7 361.3 238.9 354.4Z" fill="#485afe" stroke="#485afe"/><path d="M447.8 233.0 457.6 252.7 450.1 236.8 440.4 215.7Z" fill="#ff570a" stroke="#ff570a"/><path d="M649.3 343.3 659.1 346.6 651.6 339.5 641.8 337.1Z" fill="#048aff" stroke="#048aff"/><path d="M185.0 340.1 194.7 335.3 187.2 334.2 177.5 340.5Z" fill="#20a6ff" stroke="#20a6ff"/><path d="M386.4 218.8 396.2 201.3 388.7 213.6 379.0 230.2Z" fill="#f31c13" stroke="#f31c13"/><path d="M587.9 357.7 597.6 347.0 590.2 350.1 580.4 362.1Z" fill="#3163ff" stroke="#3163ff"/><path d="M325.0 362.0 334.8 339.5 327.3 353.6 317.5 371.2Z" fill="#1038fe" stroke="#1038fe"/><path d="M526.5 391.8 536.2 392.5 528.7 387.9 519.0 383.2Z" fill="#083bc3" stroke="#083bc3"/><path d="M263.6 382.0 273.4 387.3 265.9 378.6 256.1 372.2Z" fill="#1b62ee" stroke="#1b62ee"/><path d="M465.1 275.5 474.8 297.5 467.3 277.6 457.6 252.7Z" fill="#d9f542" stroke="#d9f542"/><path d="M666.5 354.4 676.3 358.3 668.8 350.7 659.1 346.6Z" fill="#1561ff" stroke="#1561ff"/><path d="M202.2 337.9 211.9 337.7 204.5 332.9 194.7 335.3Z" fill="#36beff" stroke="#36beff"/><path d="M403.7 199.0 413.4 191.3 405.9 193.7 396.2 201.3Z" fill="#ad4646" stroke="#ad4646"/><path d="M605.1 344.7 614.9 337.8 607.4 338.1 597.6 347.0Z" fill="#1c93ff" stroke="#1c93ff"/><path d="M140.8 366.5 150.5 358.6 143.0 360.1 133.3 367.0Z" fill="#112aff" stroke="#112aff"/><path d="M342.2 326.0 352.0 297.9 344.5 315.5 334.8 339.5Z" fill="#15dbf5" stroke="#15dbf5"/><path d="M543.7 394.6 553.4 387.9 546.0 388.6 536.2 392.5Z" fill="#1754ff" stroke="#1754ff"/><path d="M280.8 393.9 290.6 393.3 283.1 389.5 273.4 387.3Z" fill="#2fb1ff" stroke="#2fb1ff"/><path d="M482.3 321.0 492.0 340.5 484.6 321.1 474.8 297.5Z" fill="#17ecea" stroke="#17ecea"/><path d="M683.8 365.8 693.5 368.2 686.0 361.8 676.3 358.3Z" fill="#1531ff" stroke="#1531ff"/><path d="M219.4 343.9 229.2 348.3 221.7 340.0 211.9 337.7Z" fill="#219bff" stroke="#219bff"/><path d="M420.9 199.6 430.6 202.7 423.1 194.4 413.4 191.3Z" fill="#b25454" stroke="#b25454"/><path d="M622.3 339.0 632.1 336.8 624.6 333.6 614.9 337.8Z" fill="#43c0ff" stroke="#43c0ff"/><path d="M158.0 356.9 167.7 348.2 160.3 350.1 150.5 358.6Z" fill="#0c56ff" stroke="#0c56ff"/><path d="M359.5 283.9 369.2 254.5 361.7 271.4 352.0 297.9Z" fill="#c6f843" stroke="#c6f843"/><path d="M560.9 385.0 570.7 374.1 563.2 378.1 553.4 387.9Z" fill="#1466f2" stroke="#1466f2"/><path d="M298.1 394.6 307.8 385.3 300.3 388.1 290.6 393.3Z" fill="#1264d6" stroke="#1264d6"/><path d="M499.5 360.4 509.3 373.6 501.8 358.4 492.0 340.5Z" fill="#013dff" stroke="#013dff"/><path d="M236.6 357.2 246.4 364.7 238.9 354.4 229.2 348.3Z" fill="#4a7fff" stroke="#4a7fff"/><path d="M438.1 220.9 447.8 233.0 440.4 215.7 430.6 202.7Z" fill="#ef241a" stroke="#ef241a"/><path d="M639.6 341.6 649.3 343.3 641.8 337.1 632.1 336.8Z" fill="#22a9ff" stroke="#22a9ff"/><path d="M175.2 347.0 185.0 340.1 177.5 340.5 167.7 348.2Z" fill="#168eff" stroke="#168eff"/><path d="M376.7 244.5 386.4 218.8 379.0 230.2 369.2 254.5Z" fill="#ff7517" stroke="#ff7517"/><path d="M578.1 369.2 587.9 357.7 580.4 362.1 570.7 374.1Z" fill="#1423fd" stroke="#1423fd"/><path d="M315.3 380.8 325.0 362.0 317.5 371.2 307.8 385.3Z" fill="#1b1cdd" stroke="#1b1cdd"/><path d="M516.7 386.9 526.5 391.8 519.0 383.2 509.3 373.6Z" fill="#383ed1" stroke="#383ed1"/><path d="M253.9 374.6 263.6 382.0 256.1 372.2 246.4 364.7Z" fill="#2345fb" stroke="#2345fb"/><path d="M455.3 257.9 465.1 275.5 457.6 252.7 447.8 233.0Z" fill="#feb616" stroke="#feb616"/><path d="M656.8 350.7 666.5 354.4 659.1 346.6 649.3 343.3Z" fill="#1880ff" stroke="#1880ff"/><path d="M192.4 341.0 202.2 337.9 194.7 335.3 185.0 340.1Z" fill="#31b6ff" stroke="#31b6ff"/><path d="M393.9 216.8 403.7 199.0 396.2 201.3 386.4 218.8Z" fill="#e26060" stroke="#e26060"/><path d="M595.4 353.6 605.1 344.7 597.6 347.0 587.9 357.7Z" fill="#116dff" stroke="#116dff"/><path d="M332.5 352.8 342.2 326.0 334.8 339.5 325.0 362.0Z" fill="#067bff" stroke="#067bff"/><path d="M534.0 397.6 543.7 394.6 536.2 392.5 526.5 391.8Z" fill="#0745ff" stroke="#0745ff"/><path d="M271.1 390.4 280.8 393.9 273.4 387.3 263.6 382.0Z" fill="#7fcfff" stroke="#7fcfff"/><path d="M472.5 302.7 482.3 321.0 474.8 297.5 465.1 275.5Z" fill="#83ff9e" stroke="#83ff9e"/><path d="M674.0 362.5 683.8 365.8 676.3 358.3 666.5 354.4Z" fill="#184dff" stroke="#184dff"/><path d="M209.7 342.0 219.4 343.9 211.9 337.7 202.2 337.9Z" fill="#25adff" stroke="#25adff"/><path d="M411.1 207.2 420.9 199.6 413.4 191.3 403.7 199.0Z" fill="#d39898" stroke="#d39898"/><path d="M612.6 343.6 622.3 339.0 614.9 337.8 605.1 344.7Z" fill="#17a3ff" stroke="#17a3ff"/><path d="M148.3 365.5 158.0 356.9 150.5 358.6 140.8 366.5Z" fill="#1843ff" stroke="#1843ff"/><path d="M349.7 315.3 359.5 283.9 352.0 297.9 342.2 326.0Z" fill="#4efdc1" stroke="#4efdc1"/><path d="M551.2 393.8 560.9 385.0 553.4 387.9 543.7 394.6Z" fill="#3f5bff" stroke="#3f5bff"/><path d="M288.3 398.4 298.1 394.6 290.6 393.3 280.8 393.9Z" fill="#eff9ff" stroke="#eff9ff"/><path d="M489.8 345.7 499.5 360.4 492.0 340.5 482.3 321.0Z" fill="#14a1ff" stroke="#14a1ff"/><path d="M691.2 372.7 701.0 373.7 693.5 368.2 683.8 365.8Z" fill="#1a25ff" stroke="#1a25ff"/><path d="M226.9 351.0 236.6 357.2 229.2 348.3 219.4 343.9Z" fill="#288bff" stroke="#288bff"/><path d="M428.4 218.2 438.1 220.9 430.6 202.7 420.9 199.6Z" fill="#e27474" stroke="#e27474"/><path d="M629.8 341.9 639.6 341.6 632.1 336.8 622.3 339.0Z" fill="#32bcff" stroke="#32bcff"/><path d="M165.5 355.4 175.2 347.0 167.7 348.2 158.0 356.9Z" fill="#217aff" stroke="#217aff"/><path d="M366.9 275.7 376.7 244.5 369.2 254.5 359.5 283.9Z" fill="#f6e73d" stroke="#f6e73d"/><path d="M568.4 380.3 578.1 369.2 570.7 374.1 560.9 385.0Z" fill="#0420f5" stroke="#0420f5"/><path d="M305.5 394.1 315.3 380.8 307.8 385.3 298.1 394.6Z" fill="#3647cb" stroke="#3647cb"/><path d="M507.0 378.8 516.7 386.9 509.3 373.6 499.5 360.4Z" fill="#2a31f2" stroke="#2a31f2"/><path d="M244.1 366.4 253.9 374.6 246.4 364.7 236.6 357.2Z" fill="#3051ff" stroke="#3051ff"/><path d="M445.6 247.3 455.3 257.9 447.8 233.0 438.1 220.9Z" fill="#ff9657" stroke="#ff9657"/><path d="M647.0 347.9 656.8 350.7 649.3 343.3 639.6 341.6Z" fill="#229cff" stroke="#229cff"/><path d="M182.7 346.6 192.4 341.0 185.0 340.1 175.2 347.0Z" fill="#1aa0ff" stroke="#1aa0ff"/><path d="M384.2 243.0 393.9 216.8 386.4 218.8 376.7 244.5Z" fill="#ff8c69" stroke="#ff8c69"/><path d="M585.6 363.8 595.4 353.6 587.9 357.7 578.1 369.2Z" fill="#194cff" stroke="#194cff"/><path d="M322.8 375.7 332.5 352.8 325.0 362.0 315.3 380.8Z" fill="#2e3ff9" stroke="#2e3ff9"/><path d="M524.2 397.0 534.0 397.6 526.5 391.8 516.7 386.9Z" fill="#1766dc" stroke="#1766dc"/><path d="M261.3 383.6 271.1 390.4 263.6 382.0 253.9 374.6Z" fill="#effaff" stroke="#effaff"/><path d="M462.8 288.0 472.5 302.7 465.1 275.5 455.3 257.9Z" fill="#d9fb5b" stroke="#d9fb5b"/><path d="M664.3 358.8 674.0 362.5 666.5 354.4 656.8 350.7Z" fill="#1868ff" stroke="#1868ff"/><path d="M199.9 343.1 209.7 342.0 202.2 337.9 192.4 341.0Z" fill="#47c4ff" stroke="#47c4ff"/><path d="M401.4 224.7 411.1 207.2 403.7 199.0 393.9 216.8Z" fill="#ea9999" stroke="#ea9999"/><path d="M602.8 350.4 612.6 343.6 605.1 344.7 595.4 353.6Z" fill="#0b88ff" stroke="#0b88ff"/><path d="M340.0 345.5 349.7 315.3 342.2 326.0 332.5 352.8Z" fill="#25c3fe" stroke="#25c3fe"/><path d="M541.4 399.8 551.2 393.8 543.7 394.6 534.0 397.6Z" fill="#0009ff" stroke="#0009ff"/><path d="M278.6 397.1 288.3 398.4 280.8 393.9 271.1 390.4Z" fill="#eff9ff" stroke="#eff9ff"/><path d="M480.0 331.5 489.8 345.7 482.3 321.0 472.5 302.7Z" fill="#39ebf1" stroke="#39ebf1"/><path d="M681.5 370.4 691.2 372.7 683.8 365.8 674.0 362.5Z" fill="#2140ff" stroke="#2140ff"/><path d="M217.1 347.2 226.9 351.0 219.4 343.9 209.7 342.0Z" fill="#0597ff" stroke="#0597ff"/><path d="M418.6 225.4 428.4 218.2 420.9 199.6 411.1 207.2Z" fill="#eca1a0" stroke="#eca1a0"/><path d="M620.1 344.3 629.8 341.9 622.3 339.0 612.6 343.6Z" fill="#39bbff" stroke="#39bbff"/><path d="M155.7 364.4 165.5 355.4 158.0 356.9 148.3 365.5Z" fill="#2e67ff" stroke="#2e67ff"/><path d="M357.2 309.2 366.9 275.7 359.5 283.9 349.7 315.3Z" fill="#9fffa2" stroke="#9fffa2"/><path d="M558.7 390.2 568.4 380.3 560.9 385.0 551.2 393.8Z" fill="#0029ff" stroke="#0029ff"/><path d="M295.8 401.3 305.5 394.1 298.1 394.6 288.3 398.4Z" fill="#3fb7ff" stroke="#3fb7ff"/><path d="M497.2 368.9 507.0 378.8 499.5 360.4 489.8 345.7Z" fill="#2f5fff" stroke="#2f5fff"/><path d="M698.7 378.7 708.5 378.2 701.0 373.7 691.2 372.7Z" fill="#2a2bfe" stroke="#2a2bfe"/><path d="M234.4 358.8 244.1 366.4 236.6 357.2 226.9 351.0Z" fill="#367fff" stroke="#367fff"/><path d="M435.8 245.0 445.6 247.3 438.1 220.9 428.4 218.2Z" fill="#ffa187" stroke="#ffa187"/><path d="M637.3 346.6 647.0 347.9 639.6 341.6 629.8 341.9Z" fill="#27aeff" stroke="#27aeff"/><path d="M173.0 354.4 182.7 346.6 175.2 347.0 165.5 355.4Z" fill="#228cff" stroke="#228cff"/><path d="M374.4 274.8 384.2 243.0 376.7 244.5 366.9 275.7Z" fill="#fedb6c" stroke="#fedb6c"/><path d="M575.9 374.4 585.6 363.8 578.1 369.2 568.4 380.3Z" fill="#2042ff" stroke="#2042ff"/><path d="M313.0 392.8 322.8 375.7 315.3 380.8 305.5 394.1Z" fill="#4247d7" stroke="#4247d7"/><path d="M514.5 393.6 524.2 397.0 516.7 386.9 507.0 378.8Z" fill="#434edb" stroke="#434edb"/><path d="M251.6 375.2 261.3 383.6 253.9 374.6 244.1 366.4Z" fill="#2759ff" stroke="#2759ff"/><path d="M453.1 279.2 462.8 288.0 455.3 257.9 445.6 247.3Z" fill="#faea70" stroke="#faea70"/><path d="M654.5 355.5 664.3 358.8 656.8 350.7 647.0 347.9Z" fill="#1b84ff" stroke="#1b84ff"/><path d="M190.2 347.3 199.9 343.1 192.4 341.0 182.7 346.6Z" fill="#36b3ff" stroke="#36b3ff"/><path d="M391.6 250.4 401.4 224.7 393.9 216.8 384.2 243.0Z" fill="#ffac95" stroke="#ffac95"/><path d="M593.1 358.8 602.8 350.4 595.4 353.6 585.6 363.8Z" fill="#1d73ff" stroke="#1d73ff"/><path d="M330.2 371.7 340.0 345.5 332.5 352.8 322.8 375.7Z" fill="#2b5dff" stroke="#2b5dff"/><path d="M531.7 402.9 541.4 399.8 534.0 397.6 524.2 397.0Z" fill="#4756ff" stroke="#4756ff"/><path d="M268.8 391.5 278.6 397.1 271.1 390.4 261.3 383.6Z" fill="#0fa5ff" stroke="#0fa5ff"/><path d="M470.3 320.1 480.0 331.5 472.5 302.7 462.8 288.0Z" fill="#83fece" stroke="#83fece"/><path d="M671.7 367.3 681.5 370.4 674.0 362.5 664.3 358.8Z" fill="#2659ff" stroke="#2659ff"/><path d="M207.4 346.3 217.1 347.2 209.7 342.0 199.9 343.1Z" fill="#1bb0ff" stroke="#1bb0ff"/><path d="M408.9 242.0 418.6 225.4 411.1 207.2 401.4 224.7Z" fill="#fbaca7" stroke="#fbaca7"/><path d="M610.3 348.8 620.1 344.3 612.6 343.6 602.8 350.4Z" fill="#18a3ff" stroke="#18a3ff"/><path d="M347.5 341.6 357.2 309.2 349.7 315.3 340.0 345.5Z" fill="#56e8f9" stroke="#56e8f9"/><path d="M548.9 398.3 558.7 390.2 551.2 393.8 541.4 399.8Z" fill="#3b3be7" stroke="#3b3be7"/><path d="M286.0 402.3 295.8 401.3 288.3 398.4 278.6 397.1Z" fill="#8fceff" stroke="#8fceff"/><path d="M487.5 359.0 497.2 368.9 489.8 345.7 480.0 331.5Z" fill="#52a7ff" stroke="#52a7ff"/><path d="M689.0 377.7 698.7 378.7 691.2 372.7 681.5 370.4Z" fill="#303dff" stroke="#303dff"/><path d="M224.6 353.1 234.4 358.8 226.9 351.0 217.1 347.2Z" fill="#0e8bff" stroke="#0e8bff"/><path d="M426.1 251.8 435.8 245.0 428.4 218.2 418.6 225.4Z" fill="#ffb29f" stroke="#ffb29f"/><path d="M627.5 347.1 637.3 346.6 629.8 341.9 620.1 344.3Z" fill="#49c3ff" stroke="#49c3ff"/><path d="M163.2 363.3 173.0 354.4 165.5 355.4 155.7 364.4Z" fill="#2b74ff" stroke="#2b74ff"/><path d="M364.7 309.0 374.4 274.8 366.9 275.7 357.2 309.2Z" fill="#ceffa7" stroke="#ceffa7"/><path d="M566.1 384.6 575.9 374.4 568.4 380.3 558.7 390.2Z" fill="#effaff" stroke="#effaff"/><path d="M303.3 403.0 313.0 392.8 305.5 394.1 295.8 401.3Z" fill="#1ba9ff" stroke="#1ba9ff"/><path d="M504.7 388.3 514.5 393.6 507.0 378.8 497.2 368.9Z" fill="#5055ee" stroke="#5055ee"/><path d="M706.2 383.4 715.9 381.4 708.5 378.2 698.7 378.7Z" fill="#3c3cf5" stroke="#3c3cf5"/><path d="M241.8 366.6 251.6 375.2 244.1 366.4 234.4 358.8Z" fill="#115aff" stroke="#115aff"/><path d="M443.3 277.6 453.1 279.2 445.6 247.3 435.8 245.0Z" fill="#fee18a" stroke="#fee18a"/><path d="M644.8 353.1 654.5 355.5 647.0 347.9 637.3 346.6Z" fill="#33a3ff" stroke="#33a3ff"/><path d="M180.4 354.0 190.2 347.3 182.7 346.6 173.0 354.4Z" fill="#32a2ff" stroke="#32a2ff"/><path d="M381.9 281.6 391.6 250.4 384.2 243.0 374.4 274.8Z" fill="#ffe597" stroke="#ffe597"/><path d="M583.4 368.1 593.1 358.8 585.6 363.8 575.9 374.4Z" fill="#0242ff" stroke="#0242ff"/><path d="M320.5 391.8 330.2 371.7 322.8 375.7 313.0 392.8Z" fill="#5256eb" stroke="#5256eb"/><path d="M521.9 403.5 531.7 402.9 524.2 397.0 514.5 393.6Z" fill="#2243ff" stroke="#2243ff"/><path d="M259.1 383.2 268.8 391.5 261.3 383.6 251.6 375.2Z" fill="#d1edff" stroke="#d1edff"/><path d="M460.5 313.3 470.3 320.1 462.8 288.0 453.1 279.2Z" fill="#bfffbb" stroke="#bfffbb"/><path d="M662.0 364.0 671.7 367.3 664.3 358.8 654.5 355.5Z" fill="#2f79ff" stroke="#2f79ff"/><path d="M197.7 348.8 207.4 346.3 199.9 343.1 190.2 347.3Z" fill="#43bfff" stroke="#43bfff"/><path d="M399.1 266.3 408.9 242.0 401.4 224.7 391.6 250.4Z" fill="#ffcaa7" stroke="#ffcaa7"/><path d="M600.6 355.1 610.3 348.8 602.8 350.4 593.1 358.8Z" fill="#108bff" stroke="#108bff"/><path d="M337.7 369.9 347.5 341.6 340.0 345.5 330.2 371.7Z" fill="#5f9cff" stroke="#5f9cff"/><path d="M539.2 404.2 548.9 398.3 541.4 399.8 531.7 402.9Z" fill="#3b3be7" stroke="#3b3be7"/><path d="M276.3 398.2 286.0 402.3 278.6 397.1 268.8 391.5Z" fill="#0000f0" stroke="#0000f0"/><path d="M477.8 351.0 487.5 359.0 480.0 331.5 470.3 320.1Z" fill="#6adafe" stroke="#6adafe"/><path d="M679.2 375.6 689.0 377.7 681.5 370.4 671.7 367.3Z" fill="#3451ff" stroke="#3451ff"/><path d="M214.9 350.5 224.6 353.1 217.1 347.2 207.4 346.3Z" fill="#009eff" stroke="#009eff"/><path d="M416.3 267.0 426.1 251.8 418.6 225.4 408.9 242.0Z" fill="#ffcaa7" stroke="#ffcaa7"/><path d="M617.8 349.4 627.5 347.1 620.1 344.3 610.3 348.8Z" fill="#30b8ff" stroke="#30b8ff"/><path d="M354.9 342.1 364.7 309.0 357.2 309.2 347.5 341.6Z" fill="#81f5f4" stroke="#81f5f4"/><path d="M556.4 393.7 566.1 384.6 558.7 390.2 548.9 398.3Z" fill="#0000f1" stroke="#0000f1"/><path d="M293.5 406.3 303.3 403.0 295.8 401.3 286.0 402.3Z" fill="#e3f1ff" stroke="#e3f1ff"/><path d="M495.0 382.6 504.7 388.3 497.2 368.9 487.5 359.0Z" fill="#5a6dfc" stroke="#5a6dfc"/><path d="M696.4 383.9 706.2 383.4 698.7 378.7 689.0 377.7Z" fill="#2728fe" stroke="#2728fe"/><path d="M232.1 359.5 241.8 366.6 234.4 358.8 224.6 353.1Z" fill="#0e7aff" stroke="#0e7aff"/><path d="M433.6 283.7 443.3 277.6 435.8 245.0 426.1 251.8Z" fill="#ffe7a0" stroke="#ffe7a0"/><path d="M635.0 352.0 644.8 353.1 637.3 346.6 627.5 347.1Z" fill="#29aeff" stroke="#29aeff"/><path d="M170.7 362.6 180.4 354.0 173.0 354.4 163.2 363.3Z" fill="#3a90ff" stroke="#3a90ff"/><path d="M372.2 315.1 381.9 281.6 374.4 274.8 364.7 309.0Z" fill="#d8ffb8" stroke="#d8ffb8"/><path d="M573.6 377.8 583.4 368.1 575.9 374.4 566.1 384.6Z" fill="#0062ff" stroke="#0062ff"/><path d="M310.7 404.4 320.5 391.8 313.0 392.8 303.3 403.0Z" fill="#1fabff" stroke="#1fabff"/><path d="M512.2 402.4 521.9 403.5 514.5 393.6 504.7 388.3Z" fill="#4d73e7" stroke="#4d73e7"/><path d="M713.7 386.6 723.4 383.2 715.9 381.4 706.2 383.4Z" fill="#4c4cf4" stroke="#4c4cf4"/><path d="M249.3 374.1 259.1 383.2 251.6 375.2 241.8 366.6Z" fill="#00a4ff" stroke="#00a4ff"/><path d="M450.8 312.4 460.5 313.3 453.1 279.2 443.3 277.6Z" fill="#d9ffb9" stroke="#d9ffb9"/><path d="M652.2 361.1 662.0 364.0 654.5 355.5 644.8 353.1Z" fill="#3995ff" stroke="#3995ff"/><path d="M187.9 354.4 197.7 348.8 190.2 347.3 180.4 354.0Z" fill="#2aa9ff" stroke="#2aa9ff"/><path d="M389.4 295.7 399.1 266.3 391.6 250.4 381.9 281.6Z" fill="#fcf2a2" stroke="#fcf2a2"/><path d="M590.8 362.7 600.6 355.1 593.1 358.8 583.4 368.1Z" fill="#086dff" stroke="#086dff"/><path d="M328.0 391.9 337.7 369.9 330.2 371.7 320.5 391.8Z" fill="#696df5" stroke="#696df5"/><path d="M529.4 408.0 539.2 404.2 531.7 402.9 521.9 403.5Z" fill="#6868ed" stroke="#6868ed"/><path d="M266.5 390.4 276.3 398.2 268.8 391.5 259.1 383.2Z" fill="#004ffb" stroke="#004ffb"/><path d="M468.0 346.4 477.8 351.0 470.3 320.1 460.5 313.3Z" fill="#84f1f9" stroke="#84f1f9"/><path d="M669.5 372.9 679.2 375.6 671.7 367.3 662.0 364.0Z" fill="#3666ff" stroke="#3666ff"/><path d="M205.1 351.3 214.9 350.5 207.4 346.3 197.7 348.8Z" fill="#37beff" stroke="#37beff"/><path d="M406.6 289.1 416.3 267.0 408.9 242.0 399.1 266.3Z" fill="#ffe9ad" stroke="#ffe9ad"/><path d="M608.1 353.5 617.8 349.4 610.3 348.8 600.6 355.1Z" fill="#16a3ff" stroke="#16a3ff"/><path d="M345.2 371.2 354.9 342.1 347.5 341.6 337.7 369.9Z" fill="#7db7ff" stroke="#7db7ff"/><path d="M546.6 401.4 556.4 393.7 548.9 398.3 539.2 404.2Z" fill="#0000d7" stroke="#0000d7"/><path d="M283.8 403.7 293.5 406.3 286.0 402.3 276.3 398.2Z" fill="#1d1de3" stroke="#1d1de3"/><path d="M485.2 377.9 495.0 382.6 487.5 359.0 477.8 351.0Z" fill="#6d95ff" stroke="#6d95ff"/><path d="M686.7 383.1 696.4 383.9 689.0 377.7 679.2 375.6Z" fill="#2f3bff" stroke="#2f3bff"/><path d="M222.4 355.2 232.1 359.5 224.6 353.1 214.9 350.5Z" fill="#0093ff" stroke="#0093ff"/><path d="M423.8 297.1 433.6 283.7 426.1 251.8 416.3 267.0Z" fill="#fcf2a8" stroke="#fcf2a8"/><path d="M625.3 352.5 635.0 352.0 627.5 347.1 617.8 349.4Z" fill="#44c1ff" stroke="#44c1ff"/><path d="M362.4 347.5 372.2 315.1 364.7 309.0 354.9 342.1Z" fill="#96f7f4" stroke="#96f7f4"/><path d="M563.9 387.0 573.6 377.8 566.1 384.6 556.4 393.7Z" fill="#0513f2" stroke="#0513f2"/><path d="M301.0 409.6 310.7 404.4 303.3 403.0 293.5 406.3Z" fill="#9fcfff" stroke="#9fcfff"/><path d="M502.5 400.4 512.2 402.4 504.7 388.3 495.0 382.6Z" fill="#5d6ded" stroke="#5d6ded"/><path d="M703.9 388.7 713.7 386.6 706.2 383.4 696.4 383.9Z" fill="#4141f5" stroke="#4141f5"/><path d="M239.6 365.9 249.3 374.1 241.8 366.6 232.1 359.5Z" fill="#006cff" stroke="#006cff"/><path d="M441.0 317.8 450.8 312.4 443.3 277.6 433.6 283.7Z" fill="#e0ffbe" stroke="#e0ffbe"/><path d="M642.5 359.0 652.2 361.1 644.8 353.1 635.0 352.0Z" fill="#30a3ff" stroke="#30a3ff"/><path d="M178.2 362.3 187.9 354.4 180.4 354.0 170.7 362.6Z" fill="#3b9dff" stroke="#3b9dff"/><path d="M379.6 327.1 389.4 295.7 381.9 281.6 372.2 315.1Z" fill="#cfffca" stroke="#cfffca"/><path d="M581.1 371.0 590.8 362.7 583.4 368.1 573.6 377.8Z" fill="#005cff" stroke="#005cff"/><path d="M318.2 406.2 328.0 391.9 320.5 391.8 310.7 404.4Z" fill="#398cf1" stroke="#398cf1"/><path d="M519.7 410.2 529.4 408.0 521.9 403.5 512.2 402.4Z" fill="#0000f3" stroke="#0000f3"/><path d="M256.8 381.0 266.5 390.4 259.1 383.2 249.3 374.1Z" fill="#7fcfff" stroke="#7fcfff"/><path d="M458.3 346.2 468.0 346.4 460.5 313.3 450.8 312.4Z" fill="#9bf8f4" stroke="#9bf8f4"/><path d="M659.7 370.0 669.5 372.9 662.0 364.0 652.2 361.1Z" fill="#3078ff" stroke="#3078ff"/><path d="M195.4 355.5 205.1 351.3 197.7 348.8 187.9 354.4Z" fill="#4cbdff" stroke="#4cbdff"/><path d="M396.9 315.6 406.6 289.1 399.1 266.3 389.4 295.7Z" fill="#eefebf" stroke="#eefebf"/><path d="M598.3 359.0 608.1 353.5 600.6 355.1 590.8 362.7Z" fill="#1292ff" stroke="#1292ff"/><path d="M335.4 393.8 345.2 371.2 337.7 369.9 328.0 391.9Z" fill="#7d85f9" stroke="#7d85f9"/><path d="M536.9 407.4 546.6 401.4 539.2 404.2 529.4 408.0Z" fill="#0000c1" stroke="#0000c1"/><path d="M274.0 396.6 283.8 403.7 276.3 398.2 266.5 390.4Z" fill="#2b2bdd" stroke="#2b2bdd"/><path d="M475.5 375.4 485.2 377.9 477.8 351.0 468.0 346.4Z" fill="#82b4ff" stroke="#82b4ff"/><path d="M676.9 381.4 686.7 383.1 679.2 375.6 669.5 372.9Z" fill="#3c57ff" stroke="#3c57ff"/><path d="M212.6 354.4 222.4 355.2 214.9 350.5 205.1 351.3Z" fill="#10adff" stroke="#10adff"/><path d="M414.1 316.3 423.8 297.1 416.3 267.0 406.6 289.1Z" fill="#eefebc" stroke="#eefebc"/><path d="M615.5 354.4 625.3 352.5 617.8 349.4 608.1 353.5Z" fill="#42c0ff" stroke="#42c0ff"/><path d="M352.7 375.8 362.4 347.5 354.9 342.1 345.2 371.2Z" fill="#90c4ff" stroke="#90c4ff"/><path d="M554.1 395.3 563.9 387.0 556.4 393.7 546.6 401.4Z" fill="#0505da" stroke="#0505da"/><path d="M291.2 408.2 301.0 409.6 293.5 406.3 283.8 403.7Z" fill="#0000c8" stroke="#0000c8"/><path d="M492.7 398.6 502.5 400.4 495.0 382.6 485.2 377.9Z" fill="#767bf7" stroke="#767bf7"/><path d="M694.2 389.4 703.9 388.7 696.4 383.9 686.7 383.1Z" fill="#3132fd" stroke="#3132fd"/><path d="M229.8 360.2 239.6 365.9 232.1 359.5 222.4 355.2Z" fill="#0089ff" stroke="#0089ff"/><path d="M431.3 329.1 441.0 317.8 433.6 283.7 423.8 297.1Z" fill="#d2ffce" stroke="#d2ffce"/><path d="M632.8 358.0 642.5 359.0 635.0 352.0 625.3 352.5Z" fill="#38b1ff" stroke="#38b1ff"/><path d="M369.9 357.3 379.6 327.1 372.2 315.1 362.4 347.5Z" fill="#9ef3fb" stroke="#9ef3fb"/><path d="M571.3 379.4 581.1 371.0 573.6 377.8 563.9 387.0Z" fill="#00afff" stroke="#00afff"/><path d="M308.5 412.6 318.2 406.2 310.7 404.4 301.0 409.6Z" fill="#ffffff" stroke="#ffffff"/><path d="M509.9 411.3 519.7 410.2 512.2 402.4 502.5 400.4Z" fill="#3f3fff" stroke="#3f3fff"/><path d="M247.1 372.1 256.8 381.0 249.3 374.1 239.6 365.9Z" fill="#00a5ff" stroke="#00a5ff"/><path d="M448.5 350.9 458.3 346.2 450.8 312.4 441.0 317.8Z" fill="#a3f9f6" stroke="#a3f9f6"/><path d="M650.0 367.5 659.7 370.0 652.2 361.1 642.5 359.0Z" fill="#4296ff" stroke="#4296ff"/><path d="M185.6 362.7 195.4 355.5 187.9 354.4 178.2 362.3Z" fill="#35a3ff" stroke="#35a3ff"/><path d="M387.1 343.7 396.9 315.6 389.4 295.7 379.6 327.1Z" fill="#c3ffe8" stroke="#c3ffe8"/><path d="M588.6 365.5 598.3 359.0 590.8 362.7 581.1 371.0Z" fill="#0079ff" stroke="#0079ff"/><path d="M325.7 408.7 335.4 393.8 328.0 391.9 318.2 406.2Z" fill="#2fa2f9" stroke="#2fa2f9"/><path d="M527.2 411.9 536.9 407.4 529.4 408.0 519.7 410.2Z" fill="#0000c2" stroke="#0000c2"/><path d="M264.3 387.2 274.0 396.6 266.5 390.4 256.8 381.0Z" fill="#383cf2" stroke="#383cf2"/><path d="M465.7 376.0 475.5 375.4 468.0 346.4 458.3 346.2Z" fill="#90c5ff" stroke="#90c5ff"/><path d="M667.2 379.2 676.9 381.4 669.5 372.9 659.7 370.0Z" fill="#3c68ff" stroke="#3c68ff"/><path d="M202.9 357.3 212.6 354.4 205.1 351.3 195.4 355.5Z" fill="#45bfff" stroke="#45bfff"/><path d="M404.3 339.1 414.1 316.3 406.6 289.1 396.9 315.6Z" fill="#cfffdf" stroke="#cfffdf"/><path d="M605.8 357.8 615.5 354.4 608.1 353.5 598.3 359.0Z" fill="#10a5ff" stroke="#10a5ff"/><path d="M342.9 397.8 352.7 375.8 345.2 371.2 335.4 393.8Z" fill="#8e98fb" stroke="#8e98fb"/><path d="M544.4 402.5 554.1 395.3 546.6 401.4 536.9 407.4Z" fill="#4141c8" stroke="#4141c8"/><path d="M281.5 401.8 291.2 408.2 283.8 403.7 274.0 396.6Z" fill="#2121c7" stroke="#2121c7"/><path d="M483.0 398.1 492.7 398.6 485.2 377.9 475.5 375.4Z" fill="#818cfb" stroke="#818cfb"/><path d="M684.4 389.0 694.2 389.4 686.7 383.1 676.9 381.4Z" fill="#434bfe" stroke="#434bfe"/><path d="M220.1 358.0 229.8 360.2 222.4 355.2 212.6 354.4Z" fill="#00a2ff" stroke="#00a2ff"/><path d="M421.6 345.1 431.3 329.1 423.8 297.1 414.1 316.3Z" fill="#c2ffe8" stroke="#c2ffe8"/><path d="M623.0 358.2 632.8 358.0 625.3 352.5 615.5 354.4Z" fill="#49c0ff" stroke="#49c0ff"/><path d="M360.1 383.5 369.9 357.3 362.4 347.5 352.7 375.8Z" fill="#96bfff" stroke="#96bfff"/><path d="M561.6 387.5 571.3 379.4 563.9 387.0 554.1 395.3Z" fill="#010af4" stroke="#010af4"/><path d="M298.7 412.0 308.5 412.6 301.0 409.6 291.2 408.2Z" fill="#619efa" stroke="#619efa"/><path d="M500.2 412.0 509.9 411.3 502.5 400.4 492.7 398.6Z" fill="#3f57ff" stroke="#3f57ff"/><path d="M237.3 365.2 247.1 372.1 239.6 365.9 229.8 360.2Z" fill="#008aff" stroke="#008aff"/><path d="M438.8 360.0 448.5 350.9 441.0 317.8 431.3 329.1Z" fill="#a4f5fa" stroke="#a4f5fa"/><path d="M640.2 365.5 650.0 367.5 642.5 359.0 632.8 358.0Z" fill="#44a7ff" stroke="#44a7ff"/><path d="M377.4 370.5 387.1 343.7 379.6 327.1 369.9 357.3Z" fill="#a6e8ff" stroke="#a6e8ff"/><path d="M578.8 372.5 588.6 365.5 581.1 371.0 571.3 379.4Z" fill="#0095ff" stroke="#0095ff"/><path d="M315.9 415.5 325.7 408.7 318.2 406.2 308.5 412.6Z" fill="#c7e3ff" stroke="#c7e3ff"/><path d="M517.4 415.3 527.2 411.9 519.7 410.2 509.9 411.3Z" fill="#0000c4" stroke="#0000c4"/><path d="M254.5 377.7 264.3 387.2 256.8 381.0 247.1 372.1Z" fill="#00afff" stroke="#00afff"/><path d="M456.0 379.9 465.7 376.0 458.3 346.2 448.5 350.9Z" fill="#9ac9ff" stroke="#9ac9ff"/><path d="M657.5 376.8 667.2 379.2 659.7 370.0 650.0 367.5Z" fill="#4a84ff" stroke="#4a84ff"/><path d="M193.1 363.6 202.9 357.3 195.4 355.5 185.6 362.7Z" fill="#4bb5ff" stroke="#4bb5ff"/><path d="M394.6 363.1 404.3 339.1 396.9 315.6 387.1 343.7Z" fill="#b1f7fb" stroke="#b1f7fb"/><path d="M596.0 362.3 605.8 357.8 598.3 359.0 588.6 365.5Z" fill="#0091ff" stroke="#0091ff"/><path d="M333.2 412.1 342.9 397.8 335.4 393.8 325.7 408.7Z" fill="#0da6ff" stroke="#0da6ff"/><path d="M534.6 408.5 544.4 402.5 536.9 407.4 527.2 411.9Z" fill="#0000aa" stroke="#0000aa"/><path d="M271.8 392.5 281.5 401.8 274.0 396.6 264.3 387.2Z" fill="#0105e9" stroke="#0105e9"/><path d="M473.2 399.3 483.0 398.1 475.5 375.4 465.7 376.0Z" fill="#929cfd" stroke="#929cfd"/><path d="M674.7 387.8 684.4 389.0 676.9 381.4 667.2 379.2Z" fill="#445aff" stroke="#445aff"/><path d="M210.3 359.7 220.1 358.0 212.6 354.4 202.9 357.3Z" fill="#3bbfff" stroke="#3bbfff"/><path d="M411.8 363.8 421.6 345.1 414.1 316.3 404.3 339.1Z" fill="#b2f7fb" stroke="#b2f7fb"/><path d="M613.3 359.6 623.0 358.2 615.5 354.4 605.8 357.8Z" fill="#37beff" stroke="#37beff"/><path d="M350.4 403.6 360.1 383.5 352.7 375.8 342.9 397.8Z" fill="#969efc" stroke="#969efc"/><path d="M551.9 394.9 561.6 387.5 554.1 395.3 544.4 402.5Z" fill="#1414e6" stroke="#1414e6"/><path d="M289.0 406.0 298.7 412.0 291.2 408.2 281.5 401.8Z" fill="#4545c5" stroke="#4545c5"/><path d="M490.4 413.0 500.2 412.0 492.7 398.6 483.0 398.1Z" fill="#1b9bff" stroke="#1b9bff"/><path d="M227.6 361.8 237.3 365.2 229.8 360.2 220.1 358.0Z" fill="#009bff" stroke="#009bff"/><path d="M429.0 372.6 438.8 360.0 431.3 329.1 421.6 345.1Z" fill="#a4e9ff" stroke="#a4e9ff"/><path d="M630.5 364.5 640.2 365.5 632.8 358.0 623.0 358.2Z" fill="#42b2ff" stroke="#42b2ff"/><path d="M367.6 393.4 377.4 370.5 369.9 357.3 360.1 383.5Z" fill="#9db6ff" stroke="#9db6ff"/><path d="M569.1 379.6 578.8 372.5 571.3 379.4 561.6 387.5Z" fill="#afe6ff" stroke="#afe6ff"/><path d="M306.2 415.2 315.9 415.5 308.5 412.6 298.7 412.0Z" fill="#8fc0ff" stroke="#8fc0ff"/><path d="M507.7 417.9 517.4 415.3 509.9 411.3 500.2 412.0Z" fill="#0000d2" stroke="#0000d2"/><path d="M244.8 370.0 254.5 377.7 247.1 372.1 237.3 365.2Z" fill="#009fff" stroke="#009fff"/><path d="M446.3 386.9 456.0 379.9 448.5 350.9 438.8 360.0Z" fill="#a0c7ff" stroke="#a0c7ff"/><path d="M647.7 374.6 657.5 376.8 650.0 367.5 640.2 365.5Z" fill="#4693ff" stroke="#4693ff"/><path d="M384.8 385.6 394.6 363.1 387.1 343.7 377.4 370.5Z" fill="#acd5ff" stroke="#acd5ff"/><path d="M586.3 367.6 596.0 362.3 588.6 365.5 578.8 372.5Z" fill="#0090ff" stroke="#0090ff"/><path d="M323.4 418.5 333.2 412.1 325.7 408.7 315.9 415.5Z" fill="#e3efff" stroke="#e3efff"/><path d="M524.9 413.3 534.6 408.5 527.2 411.9 517.4 415.3Z" fill="#0000a0" stroke="#0000a0"/><path d="M262.0 382.7 271.8 392.5 264.3 387.2 254.5 377.7Z" fill="#6dc8ff" stroke="#6dc8ff"/><path d="M463.5 402.6 473.2 399.3 465.7 376.0 456.0 379.9Z" fill="#929efe" stroke="#929efe"/><path d="M664.9 386.1 674.7 387.8 667.2 379.2 657.5 376.8Z" fill="#456bff" stroke="#456bff"/><path d="M200.6 365.0 210.3 359.7 202.9 357.3 193.1 363.6Z" fill="#4dbaff" stroke="#4dbaff"/><path d="M402.1 383.1 411.8 363.8 404.3 339.1 394.6 363.1Z" fill="#acdcff" stroke="#acdcff"/><path d="M603.5 362.1 613.3 359.6 605.8 357.8 596.0 362.3Z" fill="#20b1ff" stroke="#20b1ff"/><path d="M340.7 416.3 350.4 403.6 342.9 397.8 333.2 412.1Z" fill="#b7dfff" stroke="#b7dfff"/><path d="M542.1 401.4 551.9 394.9 544.4 402.5 534.6 408.5Z" fill="#0909ce" stroke="#0909ce"/><path d="M279.2 396.8 289.0 406.0 281.5 401.8 271.8 392.5Z" fill="#0e17eb" stroke="#0e17eb"/><path d="M480.7 414.8 490.4 413.0 483.0 398.1 473.2 399.3Z" fill="#eff8ff" stroke="#eff8ff"/><path d="M217.8 362.4 227.6 361.8 220.1 358.0 210.3 359.7Z" fill="#2abaff" stroke="#2abaff"/><path d="M419.3 387.0 429.0 372.6 421.6 345.1 411.8 363.8Z" fill="#a7d3ff" stroke="#a7d3ff"/><path d="M620.7 364.4 630.5 364.5 623.0 358.2 613.3 359.6Z" fill="#43baff" stroke="#43baff"/><path d="M357.9 410.5 367.6 393.4 360.1 383.5 350.4 403.6Z" fill="#9ea5fc" stroke="#9ea5fc"/><path d="M559.3 386.5 569.1 379.6 561.6 387.5 551.9 394.9Z" fill="#2f3dfe" stroke="#2f3dfe"/><path d="M296.5 409.4 306.2 415.2 298.7 412.0 289.0 406.0Z" fill="#0204b3" stroke="#0204b3"/><path d="M497.9 420.2 507.7 417.9 500.2 412.0 490.4 413.0Z" fill="#3737da" stroke="#3737da"/><path d="M235.0 365.7 244.8 370.0 237.3 365.2 227.6 361.8Z" fill="#0099ff" stroke="#0099ff"/><path d="M436.5 396.2 446.3 386.9 438.8 360.0 429.0 372.6Z" fill="#a2baff" stroke="#a2baff"/><path d="M638.0 372.9 647.7 374.6 640.2 365.5 630.5 364.5Z" fill="#55a8ff" stroke="#55a8ff"/><path d="M375.1 404.4 384.8 385.6 377.4 370.5 367.6 393.4Z" fill="#a7b1fe" stroke="#a7b1fe"/><path d="M576.6 373.2 586.3 367.6 578.8 372.5 569.1 379.6Z" fill="#008cff" stroke="#008cff"/><path d="M313.7 417.9 323.4 418.5 315.9 415.5 306.2 415.2Z" fill="#f7faff" stroke="#f7faff"/><path d="M515.1 417.1 524.9 413.3 517.4 415.3 507.7 417.9Z" fill="#3030b5" stroke="#3030b5"/><path d="M252.3 374.5 262.0 382.7 254.5 377.7 244.8 370.0Z" fill="#00abff" stroke="#00abff"/><path d="M453.7 407.7 463.5 402.6 456.0 379.9 446.3 386.9Z" fill="#99a5fe" stroke="#99a5fe"/><path d="M655.2 384.3 664.9 386.1 657.5 376.8 647.7 374.6Z" fill="#4f82ff" stroke="#4f82ff"/><path d="M392.3 400.7 402.1 383.1 394.6 363.1 384.8 385.6Z" fill="#aabdff" stroke="#aabdff"/><path d="M593.8 365.6 603.5 362.1 596.0 362.3 586.3 367.6Z" fill="#23abff" stroke="#23abff"/><path d="M330.9 421.5 340.7 416.3 333.2 412.1 323.4 418.5Z" fill="#dfedff" stroke="#dfedff"/><path d="M532.4 406.9 542.1 401.4 534.6 408.5 524.9 413.3Z" fill="#0d0dc2" stroke="#0d0dc2"/><path d="M269.5 386.9 279.2 396.8 271.8 392.5 262.0 382.7Z" fill="#04a0ff" stroke="#04a0ff"/><path d="M471.0 417.6 480.7 414.8 473.2 399.3 463.5 402.6Z" fill="#dff1ff" stroke="#dff1ff"/><path d="M208.1 366.9 217.8 362.4 210.3 359.7 200.6 365.0Z" fill="#54c1ff" stroke="#54c1ff"/><path d="M409.5 401.4 419.3 387.0 411.8 363.8 402.1 383.1Z" fill="#a7bbff" stroke="#a7bbff"/><path d="M611.0 365.3 620.7 364.4 613.3 359.6 603.5 362.1Z" fill="#43c0ff" stroke="#43c0ff"/><path d="M348.1 420.7 357.9 410.5 350.4 403.6 340.7 416.3Z" fill="#fdfeff" stroke="#fdfeff"/><path d="M549.6 392.7 559.3 386.5 551.9 394.9 542.1 401.4Z" fill="#3240fb" stroke="#3240fb"/><path d="M286.7 400.3 296.5 409.4 289.0 406.0 279.2 396.8Z" fill="#0910dc" stroke="#0910dc"/><path d="M488.2 422.4 497.9 420.2 490.4 413.0 480.7 414.8Z" fill="#1f1fe3" stroke="#1f1fe3"/><path d="M225.3 365.4 235.0 365.7 227.6 361.8 217.8 362.4Z" fill="#19b2ff" stroke="#19b2ff"/><path d="M426.8 406.4 436.5 396.2 429.0 372.6 419.3 387.0Z" fill="#a9b4fe" stroke="#a9b4fe"/><path d="M628.2 371.9 638.0 372.9 630.5 364.5 620.7 364.4Z" fill="#53b4ff" stroke="#53b4ff"/><path d="M365.4 417.7 375.1 404.4 367.6 393.4 357.9 410.5Z" fill="#85b9fc" stroke="#85b9fc"/><path d="M566.8 379.0 576.6 373.2 569.1 379.6 559.3 386.5Z" fill="#7fd7ff" stroke="#7fd7ff"/><path d="M303.9 411.9 313.7 417.9 306.2 415.2 296.5 409.4Z" fill="#0018c1" stroke="#0018c1"/><path d="M505.4 420.2 515.1 417.1 507.7 417.9 497.9 420.2Z" fill="#00009f" stroke="#00009f"/><path d="M242.5 369.4 252.3 374.5 244.8 370.0 235.0 365.7Z" fill="#009eff" stroke="#009eff"/><path d="M444.0 413.9 453.7 407.7 446.3 386.9 436.5 396.2Z" fill="#9caffd" stroke="#9caffd"/><path d="M645.4 382.5 655.2 384.3 647.7 374.6 638.0 372.9Z" fill="#4a8cff" stroke="#4a8cff"/><path d="M382.6 414.9 392.3 400.7 384.8 385.6 375.1 404.4Z" fill="#98a2fd" stroke="#98a2fd"/><path d="M584.0 369.6 593.8 365.6 586.3 367.6 576.6 373.2Z" fill="#0099ff" stroke="#0099ff"/><path d="M321.2 420.0 330.9 421.5 323.4 418.5 313.7 417.9Z" fill="#cfe1ff" stroke="#cfe1ff"/><path d="M522.6 411.4 532.4 406.9 524.9 413.3 515.1 417.1Z" fill="#1111bc" stroke="#1111bc"/><path d="M259.7 378.3 269.5 386.9 262.0 382.7 252.3 374.5Z" fill="#00afff" stroke="#00afff"/><path d="M461.2 421.1 471.0 417.6 463.5 402.6 453.7 407.7Z" fill="#bfe3ff" stroke="#bfe3ff"/><path d="M399.8 414.1 409.5 401.4 402.1 383.1 392.3 400.7Z" fill="#90a1fe" stroke="#90a1fe"/><path d="M601.3 367.1 611.0 365.3 603.5 362.1 593.8 365.6Z" fill="#3abeff" stroke="#3abeff"/><path d="M338.4 424.1 348.1 420.7 340.7 416.3 330.9 421.5Z" fill="#edf3ff" stroke="#edf3ff"/><path d="M539.8 398.2 549.6 392.7 542.1 401.4 532.4 406.9Z" fill="#2d30f3" stroke="#2d30f3"/><path d="M277.0 390.3 286.7 400.3 279.2 396.8 269.5 386.9Z" fill="#65c5ff" stroke="#65c5ff"/><path d="M478.4 424.7 488.2 422.4 480.7 414.8 471.0 417.6Z" fill="#8b8bea" stroke="#8b8bea"/><path d="M215.6 369.1 225.3 365.4 217.8 362.4 208.1 366.9Z" fill="#46bdff" stroke="#46bdff"/><path d="M417.0 416.2 426.8 406.4 419.3 387.0 409.5 401.4Z" fill="#99a3fe" stroke="#99a3fe"/><path d="M618.5 371.6 628.2 371.9 620.7 364.4 611.0 365.3Z" fill="#4db9ff" stroke="#4db9ff"/><path d="M355.6 424.9 365.4 417.7 357.9 410.5 348.1 420.7Z" fill="#b7d6ff" stroke="#b7d6ff"/><path d="M557.1 384.4 566.8 379.0 559.3 386.5 549.6 392.7Z" fill="#4166ff" stroke="#4166ff"/><path d="M294.2 402.7 303.9 411.9 296.5 409.4 286.7 400.3Z" fill="#1633df" stroke="#1633df"/><path d="M495.7 422.8 505.4 420.2 497.9 420.2 488.2 422.4Z" fill="#0000ac" stroke="#0000ac"/><path d="M232.8 368.4 242.5 369.4 235.0 365.7 225.3 365.4Z" fill="#09abff" stroke="#09abff"/><path d="M434.2 420.5 444.0 413.9 436.5 396.2 426.8 406.4Z" fill="#9f9ffa" stroke="#9f9ffa"/><path d="M635.7 381.1 645.4 382.5 638.0 372.9 628.2 371.9Z" fill="#529eff" stroke="#529eff"/><path d="M372.8 424.1 382.6 414.9 375.1 404.4 365.4 417.7Z" fill="#cde6ff" stroke="#cde6ff"/><path d="M574.3 373.9 584.0 369.6 576.6 373.2 566.8 379.0Z" fill="#009bff" stroke="#009bff"/><path d="M311.4 413.6 321.2 420.0 313.7 417.9 303.9 411.9Z" fill="#ffffff" stroke="#ffffff"/><path d="M512.9 414.9 522.6 411.4 515.1 417.1 505.4 420.2Z" fill="#1010b5" stroke="#1010b5"/><path d="M250.0 372.9 259.7 378.3 252.3 374.5 242.5 369.4Z" fill="#0097ff" stroke="#0097ff"/><path d="M451.5 424.9 461.2 421.1 453.7 407.7 444.0 413.9Z" fill="#7fbfff" stroke="#7fbfff"/><path d="M390.1 423.5 399.8 414.1 392.3 400.7 382.6 414.9Z" fill="#fbfdff" stroke="#fbfdff"/><path d="M591.5 369.5 601.3 367.1 593.8 365.6 584.0 369.6Z" fill="#1aafff" stroke="#1aafff"/><path d="M328.6 421.4 338.4 424.1 330.9 421.5 321.2 420.0Z" fill="#afcdff" stroke="#afcdff"/><path d="M530.1 402.8 539.8 398.2 532.4 406.9 522.6 411.4Z" fill="#2929eb" stroke="#2929eb"/><path d="M267.2 381.6 277.0 390.3 269.5 386.9 259.7 378.3Z" fill="#18b6ff" stroke="#18b6ff"/><path d="M468.7 426.9 478.4 424.7 471.0 417.6 461.2 421.1Z" fill="#1d1dc7" stroke="#1d1dc7"/><path d="M407.3 424.2 417.0 416.2 409.5 401.4 399.8 414.1Z" fill="#a9d9ff" stroke="#a9d9ff"/><path d="M608.7 372.0 618.5 371.6 611.0 365.3 601.3 367.1Z" fill="#5cc4ff" stroke="#5cc4ff"/><path d="M345.9 425.9 355.6 424.9 348.1 420.7 338.4 424.1Z" fill="#4f87ff" stroke="#4f87ff"/><path d="M547.3 389.4 557.1 384.4 549.6 392.7 539.8 398.2Z" fill="#315fff" stroke="#315fff"/><path d="M284.4 392.8 294.2 402.7 286.7 400.3 277.0 390.3Z" fill="#47aeff" stroke="#47aeff"/><path d="M485.9 424.8 495.7 422.8 488.2 422.4 478.4 424.7Z" fill="#0000a5" stroke="#0000a5"/><path d="M223.0 371.6 232.8 368.4 225.3 365.4 215.6 369.1Z" fill="#66cbff" stroke="#66cbff"/><path d="M424.5 426.2 434.2 420.5 426.8 406.4 417.0 416.2Z" fill="#47a3ff" stroke="#47a3ff"/><path d="M626.0 380.2 635.7 381.1 628.2 371.9 618.5 371.6Z" fill="#60b1ff" stroke="#60b1ff"/><path d="M363.1 427.9 372.8 424.1 365.4 417.7 355.6 424.9Z" fill="#fdfdff" stroke="#fdfdff"/><path d="M564.5 378.3 574.3 373.9 566.8 379.0 557.1 384.4Z" fill="#99adfa" stroke="#99adfa"/><path d="M301.7 404.3 311.4 413.6 303.9 411.9 294.2 402.7Z" fill="#7fbeff" stroke="#7fbeff"/><path d="M503.1 417.6 512.9 414.9 505.4 420.2 495.7 422.8Z" fill="#1111b0" stroke="#1111b0"/><path d="M240.3 371.5 250.0 372.9 242.5 369.4 232.8 368.4Z" fill="#00a5ff" stroke="#00a5ff"/><path d="M441.7 428.3 451.5 424.9 444.0 413.9 434.2 420.5Z" fill="#9fc9ff" stroke="#9fc9ff"/><path d="M380.3 428.7 390.1 423.5 382.6 414.9 372.8 424.1Z" fill="#9fc3ff" stroke="#9fc3ff"/><path d="M581.8 372.4 591.5 369.5 584.0 369.6 574.3 373.9Z" fill="#00a0ff" stroke="#00a0ff"/><path d="M318.9 414.3 328.6 421.4 321.2 420.0 311.4 413.6Z" fill="#fefeff" stroke="#fefeff"/><path d="M520.4 406.5 530.1 402.8 522.6 411.4 512.9 414.9Z" fill="#2727e7" stroke="#2727e7"/><path d="M257.5 376.0 267.2 381.6 259.7 378.3 250.0 372.9Z" fill="#036dff" stroke="#036dff"/><path d="M458.9 428.9 468.7 426.9 461.2 421.1 451.5 424.9Z" fill="#9595e4" stroke="#9595e4"/><path d="M397.5 429.3 407.3 424.2 399.8 414.1 390.1 423.5Z" fill="#7bb5ff" stroke="#7bb5ff"/><path d="M599.0 373.1 608.7 372.0 601.3 367.1 591.5 369.5Z" fill="#48c1ff" stroke="#48c1ff"/><path d="M336.1 421.8 345.9 425.9 338.4 424.1 328.6 421.4Z" fill="#ffffff" stroke="#ffffff"/><path d="M537.6 393.7 547.3 389.4 539.8 398.2 530.1 402.8Z" fill="#3353ff" stroke="#3353ff"/><path d="M274.7 384.2 284.4 392.8 277.0 390.3 267.2 381.6Z" fill="#e0f3ff" stroke="#e0f3ff"/><path d="M476.2 426.2 485.9 424.8 478.4 424.7 468.7 426.9Z" fill="#0000a2" stroke="#0000a2"/><path d="M414.8 430.1 424.5 426.2 417.0 416.2 407.3 424.2Z" fill="#1f73ff" stroke="#1f73ff"/><path d="M616.2 379.8 626.0 380.2 618.5 371.6 608.7 372.0Z" fill="#5cb8ff" stroke="#5cb8ff"/><path d="M353.3 426.6 363.1 427.9 355.6 424.9 345.9 425.9Z" fill="#81a8ff" stroke="#81a8ff"/><path d="M554.8 382.4 564.5 378.3 557.1 384.4 547.3 389.4Z" fill="#00afff" stroke="#00afff"/><path d="M291.9 394.5 301.7 404.3 294.2 402.7 284.4 392.8Z" fill="#a3d6ff" stroke="#a3d6ff"/><path d="M493.4 419.5 503.1 417.6 495.7 422.8 485.9 424.8Z" fill="#1616b4" stroke="#1616b4"/><path d="M230.5 374.3 240.3 371.5 232.8 368.4 223.0 371.6Z" fill="#48c2ff" stroke="#48c2ff"/><path d="M432.0 430.7 441.7 428.3 434.2 420.5 424.5 426.2Z" fill="#79abff" stroke="#79abff"/><path d="M370.6 429.3 380.3 428.7 372.8 424.1 363.1 427.9Z" fill="#cfe1ff" stroke="#cfe1ff"/><path d="M572.0 375.5 581.8 372.4 574.3 373.9 564.5 378.3Z" fill="#039dff" stroke="#039dff"/><path d="M309.1 404.9 318.9 414.3 311.4 413.6 301.7 404.3Z" fill="#5aadff" stroke="#5aadff"/><path d="M510.6 409.2 520.4 406.5 512.9 414.9 503.1 417.6Z" fill="#3636e4" stroke="#3636e4"/><path d="M247.7 374.5 257.5 376.0 250.0 372.9 240.3 371.5Z" fill="#00a3ff" stroke="#00a3ff"/><path d="M449.2 430.0 458.9 428.9 451.5 424.9 441.7 428.3Z" fill="#0f5aff" stroke="#0f5aff"/><path d="M387.8 430.8 397.5 429.3 390.1 423.5 380.3 428.7Z" fill="#fafbff" stroke="#fafbff"/><path d="M589.2 374.8 599.0 373.1 591.5 369.5 581.8 372.4Z" fill="#3ec0ff" stroke="#3ec0ff"/><path d="M326.4 414.0 336.1 421.8 328.6 421.4 318.9 414.3Z" fill="#f7faff" stroke="#f7faff"/><path d="M527.8 397.2 537.6 393.7 530.1 402.8 520.4 406.5Z" fill="#3850ff" stroke="#3850ff"/><path d="M265.0 378.8 274.7 384.2 267.2 381.6 257.5 376.0Z" fill="#009fff" stroke="#009fff"/><path d="M466.4 426.9 476.2 426.2 468.7 426.9 458.9 428.9Z" fill="#1818a4" stroke="#1818a4"/><path d="M405.0 431.5 414.8 430.1 407.3 424.2 397.5 429.3Z" fill="#4b83ff" stroke="#4b83ff"/><path d="M606.5 380.0 616.2 379.8 608.7 372.0 599.0 373.1Z" fill="#57bbff" stroke="#57bbff"/><path d="M343.6 421.0 353.3 426.6 345.9 425.9 336.1 421.8Z" fill="#ffffff" stroke="#ffffff"/><path d="M545.1 386.1 554.8 382.4 547.3 389.4 537.6 393.7Z" fill="#1874ff" stroke="#1874ff"/><path d="M282.2 386.3 291.9 394.5 284.4 392.8 274.7 384.2Z" fill="#afe1ff" stroke="#afe1ff"/><path d="M483.6 420.4 493.4 419.5 485.9 424.8 476.2 426.2Z" fill="#2323b9" stroke="#2323b9"/><path d="M422.2 431.4 432.0 430.7 424.5 426.2 414.8 430.1Z" fill="#2f70ff" stroke="#2f70ff"/><path d="M360.8 425.8 370.6 429.3 363.1 427.9 353.3 426.6Z" fill="#9fbdff" stroke="#9fbdff"/><path d="M562.3 378.7 572.0 375.5 564.5 378.3 554.8 382.4Z" fill="#009fff" stroke="#009fff"/><path d="M299.4 395.4 309.1 404.9 301.7 404.3 291.9 394.5Z" fill="#fafcff" stroke="#fafcff"/><path d="M500.9 411.0 510.6 409.2 503.1 417.6 493.4 419.5Z" fill="#4242e6" stroke="#4242e6"/><path d="M238.0 377.2 247.7 374.5 240.3 371.5 230.5 374.3Z" fill="#4ac2ff" stroke="#4ac2ff"/><path d="M439.5 430.0 449.2 430.0 441.7 428.3 432.0 430.7Z" fill="#6394ff" stroke="#6394ff"/><path d="M378.0 428.6 387.8 430.8 380.3 428.7 370.6 429.3Z" fill="#4982ff" stroke="#4982ff"/><path d="M579.5 376.8 589.2 374.8 581.8 372.4 572.0 375.5Z" fill="#31bcff" stroke="#31bcff"/><path d="M316.6 404.6 326.4 414.0 318.9 414.3 309.1 404.9Z" fill="#7fbfff" stroke="#7fbfff"/><path d="M518.1 399.9 527.8 397.2 520.4 406.5 510.6 409.2Z" fill="#3d4dfe" stroke="#3d4dfe"/><path d="M255.2 377.4 265.0 378.8 257.5 376.0 247.7 374.5Z" fill="#00a9ff" stroke="#00a9ff"/><path d="M456.7 426.6 466.4 426.9 458.9 428.9 449.2 430.0Z" fill="#1717ab" stroke="#1717ab"/><path d="M395.3 430.0 405.0 431.5 397.5 429.3 387.8 430.8Z" fill="#6f9cff" stroke="#6f9cff"/><path d="M596.7 380.8 606.5 380.0 599.0 373.1 589.2 374.8Z" fill="#64c4ff" stroke="#64c4ff"/><path d="M333.8 412.8 343.6 421.0 336.1 421.8 326.4 414.0Z" fill="#d3e6ff" stroke="#d3e6ff"/><path d="M535.3 389.3 545.1 386.1 537.6 393.7 527.8 397.2Z" fill="#165eff" stroke="#165eff"/><path d="M272.4 381.2 282.2 386.3 274.7 384.2 265.0 378.8Z" fill="#0d97ff" stroke="#0d97ff"/><path d="M473.9 420.5 483.6 420.4 476.2 426.2 466.4 426.9Z" fill="#3939c2" stroke="#3939c2"/><path d="M412.5 430.0 422.2 431.4 414.8 430.1 405.0 431.5Z" fill="#9cbbff" stroke="#9cbbff"/><path d="M351.1 419.0 360.8 425.8 353.3 426.6 343.6 421.0Z" fill="#7fafff" stroke="#7fafff"/><path d="M552.5 381.8 562.3 378.7 554.8 382.4 545.1 386.1Z" fill="#009fff" stroke="#009fff"/><path d="M289.7 387.8 299.4 395.4 291.9 394.5 282.2 386.3Z" fill="#3fb7ff" stroke="#3fb7ff"/><path d="M491.1 411.8 500.9 411.0 493.4 419.5 483.6 420.4Z" fill="#4e4feb" stroke="#4e4feb"/><path d="M429.7 428.5 439.5 430.0 432.0 430.7 422.2 431.4Z" fill="#9bbaff" stroke="#9bbaff"/><path d="M368.3 423.3 378.0 428.6 370.6 429.3 360.8 425.8Z" fill="#c7dcff" stroke="#c7dcff"/><path d="M569.8 379.1 579.5 376.8 572.0 375.5 562.3 378.7Z" fill="#15b0ff" stroke="#15b0ff"/><path d="M306.9 395.7 316.6 404.6 309.1 404.9 299.4 395.4Z" fill="#8fceff" stroke="#8fceff"/><path d="M508.3 401.7 518.1 399.9 510.6 409.2 500.9 411.0Z" fill="#495afe" stroke="#495afe"/><path d="M245.5 380.2 255.2 377.4 247.7 374.5 238.0 377.2Z" fill="#5ec9ff" stroke="#5ec9ff"/><path d="M446.9 425.1 456.7 426.6 449.2 430.0 439.5 430.0Z" fill="#353bbd" stroke="#353bbd"/><path d="M385.5 425.8 395.3 430.0 387.8 430.8 378.0 428.6Z" fill="#6394ff" stroke="#6394ff"/><path d="M587.0 382.0 596.7 380.8 589.2 374.8 579.5 376.8Z" fill="#5bc4ff" stroke="#5bc4ff"/><path d="M324.1 403.6 333.8 412.8 326.4 414.0 316.6 404.6Z" fill="#2b95ff" stroke="#2b95ff"/><path d="M525.6 391.9 535.3 389.3 527.8 397.2 518.1 399.9Z" fill="#3b71ff" stroke="#3b71ff"/><path d="M262.7 380.2 272.4 381.2 265.0 378.8 255.2 377.4Z" fill="#00aaff" stroke="#00aaff"/><path d="M464.2 419.5 473.9 420.5 466.4 426.9 456.7 426.6Z" fill="#5252d5" stroke="#5252d5"/><path d="M402.7 426.5 412.5 430.0 405.0 431.5 395.3 430.0Z" fill="#9dbcff" stroke="#9dbcff"/><path d="M341.3 410.6 351.1 419.0 343.6 421.0 333.8 412.8Z" fill="#7fb7ff" stroke="#7fb7ff"/><path d="M542.8 384.6 552.5 381.8 545.1 386.1 535.3 389.3Z" fill="#27bbff" stroke="#27bbff"/><path d="M279.9 383.4 289.7 387.8 282.2 386.3 272.4 381.2Z" fill="#009fff" stroke="#009fff"/><path d="M481.4 411.8 491.1 411.8 483.6 420.4 473.9 420.5Z" fill="#6363f0" stroke="#6363f0"/><path d="M420.0 425.4 429.7 428.5 422.2 431.4 412.5 430.0Z" fill="#578cff" stroke="#578cff"/><path d="M358.5 415.9 368.3 423.3 360.8 425.8 351.1 419.0Z" fill="#9dc8ff" stroke="#9dc8ff"/><path d="M560.0 381.5 569.8 379.1 562.3 378.7 552.5 381.8Z" fill="#1daefd" stroke="#1daefd"/><path d="M297.1 388.8 306.9 395.7 299.4 395.4 289.7 387.8Z" fill="#eff9ff" stroke="#eff9ff"/><path d="M498.6 402.7 508.3 401.7 500.9 411.0 491.1 411.8Z" fill="#546bff" stroke="#546bff"/><path d="M437.2 422.5 446.9 425.1 439.5 430.0 429.7 428.5Z" fill="#c3d5ff" stroke="#c3d5ff"/><path d="M375.8 419.4 385.5 425.8 378.0 428.6 368.3 423.3Z" fill="#8fb9ff" stroke="#8fb9ff"/><path d="M577.2 383.5 587.0 382.0 579.5 376.8 569.8 379.1Z" fill="#54c4ff" stroke="#54c4ff"/><path d="M314.4 395.4 324.1 403.6 316.6 404.6 306.9 395.7Z" fill="#08a2ff" stroke="#08a2ff"/><path d="M515.8 393.9 525.6 391.9 518.1 399.9 508.3 401.7Z" fill="#396cff" stroke="#396cff"/><path d="M252.9 383.4 262.7 380.2 255.2 377.4 245.5 380.2Z" fill="#51c4ff" stroke="#51c4ff"/><path d="M454.4 417.6 464.2 419.5 456.7 426.6 446.9 425.1Z" fill="#6a77e2" stroke="#6a77e2"/><path d="M393.0 421.0 402.7 426.5 395.3 430.0 385.5 425.8Z" fill="#8fb9ff" stroke="#8fb9ff"/><path d="M331.6 402.0 341.3 410.6 333.8 412.8 324.1 403.6Z" fill="#eff8ff" stroke="#eff8ff"/><path d="M533.0 387.0 542.8 384.6 535.3 389.3 525.6 391.9Z" fill="#03b0ff" stroke="#03b0ff"/><path d="M270.2 383.1 279.9 383.4 272.4 381.2 262.7 380.2Z" fill="#00aeff" stroke="#00aeff"/><path d="M471.6 410.8 481.4 411.8 473.9 420.5 464.2 419.5Z" fill="#6e73f5" stroke="#6e73f5"/><path d="M410.2 420.8 420.0 425.4 412.5 430.0 402.7 426.5Z" fill="#87b4ff" stroke="#87b4ff"/><path d="M348.8 407.7 358.5 415.9 351.1 419.0 341.3 410.6Z" fill="#c7e3ff" stroke="#c7e3ff"/><path d="M550.3 383.8 560.0 381.5 552.5 381.8 542.8 384.6Z" fill="#01a4fe" stroke="#01a4fe"/><path d="M287.4 385.4 297.1 388.8 289.7 387.8 279.9 383.4Z" fill="#00a1ff" stroke="#00a1ff"/><path d="M488.9 403.0 498.6 402.7 491.1 411.8 481.4 411.8Z" fill="#5d6fff" stroke="#5d6fff"/><path d="M427.4 418.7 437.2 422.5 429.7 428.5 420.0 425.4Z" fill="#a3c5ff" stroke="#a3c5ff"/><path d="M366.0 411.9 375.8 419.4 368.3 423.3 358.5 415.9Z" fill="#ffffff" stroke="#ffffff"/><path d="M567.5 385.3 577.2 383.5 569.8 379.1 560.0 381.5Z" fill="#53c5ff" stroke="#53c5ff"/><path d="M304.6 389.7 314.4 395.4 306.9 395.7 297.1 388.8Z" fill="#1db8ff" stroke="#1db8ff"/><path d="M506.1 395.2 515.8 393.9 508.3 401.7 498.6 402.7Z" fill="#97b1ff" stroke="#97b1ff"/><path d="M444.7 414.7 454.4 417.6 446.9 425.1 437.2 422.5Z" fill="#eff6ff" stroke="#eff6ff"/><path d="M383.2 414.4 393.0 421.0 385.5 425.8 375.8 419.4Z" fill="#1f81ff" stroke="#1f81ff"/><path d="M321.8 394.9 331.6 402.0 324.1 403.6 314.4 395.4Z" fill="#7fcfff" stroke="#7fcfff"/><path d="M523.3 389.1 533.0 387.0 525.6 391.9 515.8 393.9Z" fill="#00a6ff" stroke="#00a6ff"/><path d="M260.4 386.8 270.2 383.1 262.7 380.2 252.9 383.4Z" fill="#69cbff" stroke="#69cbff"/><path d="M461.9 409.1 471.6 410.8 464.2 419.5 454.4 417.6Z" fill="#8bc5ff" stroke="#8bc5ff"/><path d="M400.5 415.1 410.2 420.8 402.7 426.5 393.0 421.0Z" fill="#8fc0ff" stroke="#8fc0ff"/><path d="M339.1 400.1 348.8 407.7 341.3 410.6 331.6 402.0Z" fill="#71c0ff" stroke="#71c0ff"/><path d="M540.5 386.2 550.3 383.8 542.8 384.6 533.0 387.0Z" fill="#0eabff" stroke="#0eabff"/><path d="M277.6 386.0 287.4 385.4 279.9 383.4 270.2 383.1Z" fill="#26baff" stroke="#26baff"/><path d="M479.1 402.5 488.9 403.0 481.4 411.8 471.6 410.8Z" fill="#2b62ff" stroke="#2b62ff"/><path d="M417.7 414.0 427.4 418.7 420.0 425.4 410.2 420.8Z" fill="#afd2ff" stroke="#afd2ff"/><path d="M356.3 404.5 366.0 411.9 358.5 415.9 348.8 407.7Z" fill="#7fc7ff" stroke="#7fc7ff"/><path d="M557.7 387.4 567.5 385.3 560.0 381.5 550.3 383.8Z" fill="#57c5ff" stroke="#57c5ff"/><path d="M294.9 387.5 304.6 389.7 297.1 388.8 287.4 385.4Z" fill="#0084e6" stroke="#0084e6"/><path d="M496.3 396.0 506.1 395.2 498.6 402.7 488.9 403.0Z" fill="#4fbdff" stroke="#4fbdff"/><path d="M434.9 411.1 444.7 414.7 437.2 422.5 427.4 418.7Z" fill="#9fcfff" stroke="#9fcfff"/><path d="M373.5 407.5 383.2 414.4 375.8 419.4 366.0 411.9Z" fill="#c7e3ff" stroke="#c7e3ff"/><path d="M312.1 390.6 321.8 394.9 314.4 395.4 304.6 389.7Z" fill="#00afff" stroke="#00afff"/><path d="M513.6 390.8 523.3 389.1 515.8 393.9 506.1 395.2Z" fill="#00afff" stroke="#00afff"/><path d="M452.1 406.8 461.9 409.1 454.4 417.6 444.7 414.7Z" fill="#0f87ff" stroke="#0f87ff"/><path d="M390.7 409.0 400.5 415.1 393.0 421.0 383.2 414.4Z" fill="#87c3ff" stroke="#87c3ff"/><path d="M329.3 394.5 339.1 400.1 331.6 402.0 321.8 394.9Z" fill="#0fa5ff" stroke="#0fa5ff"/><path d="M530.8 388.4 540.5 386.2 533.0 387.0 523.3 389.1Z" fill="#00acff" stroke="#00acff"/><path d="M267.9 390.5 277.6 386.0 270.2 383.1 260.4 386.8Z" fill="#5cc4ff" stroke="#5cc4ff"/><path d="M469.4 401.6 479.1 402.5 471.6 410.8 461.9 409.1Z" fill="#f3f9ff" stroke="#f3f9ff"/><path d="M407.9 408.9 417.7 414.0 410.2 420.8 400.5 415.1Z" fill="#67b3ff" stroke="#67b3ff"/><path d="M346.5 398.3 356.3 404.5 348.8 407.7 339.1 400.1Z" fill="#77ccff" stroke="#77ccff"/><path d="M548.0 389.6 557.7 387.4 550.3 383.8 540.5 386.2Z" fill="#4fc5ff" stroke="#4fc5ff"/><path d="M285.1 389.2 294.9 387.5 287.4 385.4 277.6 386.0Z" fill="#35bfff" stroke="#35bfff"/><path d="M486.6 396.4 496.3 396.0 488.9 403.0 479.1 402.5Z" fill="#27aeff" stroke="#27aeff"/><path d="M425.2 407.2 434.9 411.1 427.4 418.7 417.7 414.0Z" fill="#0f8bff" stroke="#0f8bff"/><path d="M363.8 401.4 373.5 407.5 366.0 411.9 356.3 404.5Z" fill="#afe1ff" stroke="#afe1ff"/><path d="M302.3 389.8 312.1 390.6 304.6 389.7 294.9 387.5Z" fill="#00acfd" stroke="#00acfd"/><path d="M503.8 392.3 513.6 390.8 506.1 395.2 496.3 396.0Z" fill="#00afff" stroke="#00afff"/><path d="M442.4 404.2 452.1 406.8 444.7 414.7 434.9 411.1Z" fill="#4fb2ff" stroke="#4fb2ff"/><path d="M381.0 403.4 390.7 409.0 383.2 414.4 373.5 407.5Z" fill="#1f9dff" stroke="#1f9dff"/><path d="M319.6 391.8 329.3 394.5 321.8 394.9 312.1 390.6Z" fill="#00a7ff" stroke="#00a7ff"/><path d="M521.0 390.5 530.8 388.4 523.3 389.1 513.6 390.8Z" fill="#09b0ff" stroke="#09b0ff"/><path d="M459.6 400.4 469.4 401.6 461.9 409.1 452.1 406.8Z" fill="#55bfff" stroke="#55bfff"/><path d="M398.2 404.1 407.9 408.9 400.5 415.1 390.7 409.0Z" fill="#4fb2ff" stroke="#4fb2ff"/><path d="M336.8 394.4 346.5 398.3 339.1 400.1 329.3 394.5Z" fill="#7fcfff" stroke="#7fcfff"/><path d="M538.3 391.9 548.0 389.6 540.5 386.2 530.8 388.4Z" fill="#50c5ff" stroke="#50c5ff"/><path d="M275.4 394.5 285.1 389.2 277.6 386.0 267.9 390.5Z" fill="#63c2ff" stroke="#63c2ff"/><path d="M476.8 396.6 486.6 396.4 479.1 402.5 469.4 401.6Z" fill="#57c0ff" stroke="#57c0ff"/><path d="M415.4 403.4 425.2 407.2 417.7 414.0 407.9 408.9Z" fill="#f7fbff" stroke="#f7fbff"/><path d="M354.0 397.0 363.8 401.4 356.3 404.5 346.5 398.3Z" fill="#8fd5ff" stroke="#8fd5ff"/><path d="M292.6 392.7 302.3 389.8 294.9 387.5 285.1 389.2Z" fill="#44c2ff" stroke="#44c2ff"/><path d="M494.1 393.7 503.8 392.3 496.3 396.0 486.6 396.4Z" fill="#07acfd" stroke="#07acfd"/><path d="M432.6 401.7 442.4 404.2 434.9 411.1 425.2 407.2Z" fill="#bfe7ff" stroke="#bfe7ff"/><path d="M371.2 399.0 381.0 403.4 373.5 407.5 363.8 401.4Z" fill="#7fcfff" stroke="#7fcfff"/><path d="M309.8 392.6 319.6 391.8 312.1 390.6 302.3 389.8Z" fill="#10b1ff" stroke="#10b1ff"/><path d="M511.3 392.7 521.0 390.5 513.6 390.8 503.8 392.3Z" fill="#02aafe" stroke="#02aafe"/><path d="M449.9 399.3 459.6 400.4 452.1 406.8 442.4 404.2Z" fill="#1fabff" stroke="#1fabff"/><path d="M388.5 400.2 398.2 404.1 390.7 409.0 381.0 403.4Z" fill="#5bc1ff" stroke="#5bc1ff"/><path d="M327.0 393.6 336.8 394.4 329.3 394.5 319.6 391.8Z" fill="#259df8" stroke="#259df8"/><path d="M528.5 394.4 538.3 391.9 530.8 388.4 521.0 390.5Z" fill="#50c5ff" stroke="#50c5ff"/><path d="M467.1 396.8 476.8 396.6 469.4 401.6 459.6 400.4Z" fill="#36bcff" stroke="#36bcff"/><path d="M405.7 400.4 415.4 403.4 407.9 408.9 398.2 404.1Z" fill="#2bafff" stroke="#2bafff"/><path d="M344.3 395.1 354.0 397.0 346.5 398.3 336.8 394.4Z" fill="#00afff" stroke="#00afff"/><path d="M282.9 399.0 292.6 392.7 285.1 389.2 275.4 394.5Z" fill="#76c7ff" stroke="#76c7ff"/><path d="M484.3 395.0 494.1 393.7 486.6 396.4 476.8 396.6Z" fill="#00a1ff" stroke="#00a1ff"/><path d="M422.9 399.7 432.6 401.7 425.2 407.2 415.4 403.4Z" fill="#1ba9ff" stroke="#1ba9ff"/><path d="M361.5 396.7 371.2 399.0 363.8 401.4 354.0 397.0Z" fill="#4fc8ff" stroke="#4fc8ff"/><path d="M300.1 396.8 309.8 392.6 302.3 389.8 292.6 392.7Z" fill="#67cbff" stroke="#67cbff"/><path d="M501.5 394.9 511.3 392.7 503.8 392.3 494.1 393.7Z" fill="#0fb2ff" stroke="#0fb2ff"/><path d="M440.1 398.5 449.9 399.3 442.4 404.2 432.6 401.7Z" fill="#bfebff" stroke="#bfebff"/><path d="M378.7 397.9 388.5 400.2 381.0 403.4 371.2 399.0Z" fill="#8fdcff" stroke="#8fdcff"/><path d="M317.3 396.0 327.0 393.6 319.6 391.8 309.8 392.6Z" fill="#3dc0ff" stroke="#3dc0ff"/><path d="M518.8 397.1 528.5 394.4 521.0 390.5 511.3 392.7Z" fill="#56c3ff" stroke="#56c3ff"/><path d="M457.3 397.3 467.1 396.8 459.6 400.4 449.9 399.3Z" fill="#2fb3fd" stroke="#2fb3fd"/><path d="M395.9 398.6 405.7 400.4 398.2 404.1 388.5 400.2Z" fill="#bfebff" stroke="#bfebff"/><path d="M334.5 396.2 344.3 395.1 336.8 394.4 327.0 393.6Z" fill="#0bb3ff" stroke="#0bb3ff"/><path d="M474.6 396.7 484.3 395.0 476.8 396.6 467.1 396.8Z" fill="#09aeff" stroke="#09aeff"/><path d="M413.2 398.8 422.9 399.7 415.4 403.4 405.7 400.4Z" fill="#00adff" stroke="#00adff"/><path d="M351.7 397.0 361.5 396.7 354.0 397.0 344.3 395.1Z" fill="#26b8ff" stroke="#26b8ff"/><path d="M290.3 404.0 300.1 396.8 292.6 392.7 282.9 399.0Z" fill="#79c6ff" stroke="#79c6ff"/><path d="M491.8 397.4 501.5 394.9 494.1 393.7 484.3 395.0Z" fill="#28bbff" stroke="#28bbff"/><path d="M430.4 398.5 440.1 398.5 432.6 401.7 422.9 399.7Z" fill="#8fdcff" stroke="#8fdcff"/><path d="M369.0 397.8 378.7 397.9 371.2 399.0 361.5 396.7Z" fill="#2fb3fe" stroke="#2fb3fe"/><path d="M307.6 401.6 317.3 396.0 309.8 392.6 300.1 396.8Z" fill="#70caff" stroke="#70caff"/><path d="M509.0 400.1 518.8 397.1 511.3 392.7 501.5 394.9Z" fill="#5ac2ff" stroke="#5ac2ff"/><path d="M447.6 398.4 457.3 397.3 449.9 399.3 440.1 398.5Z" fill="#09b1ff" stroke="#09b1ff"/><path d="M386.2 398.6 395.9 398.6 388.5 400.2 378.7 397.9Z" fill="#08abfe" stroke="#08abfe"/><path d="M324.8 400.4 334.5 396.2 327.0 393.6 317.3 396.0Z" fill="#63c9ff" stroke="#63c9ff"/><path d="M464.8 398.8 474.6 396.7 467.1 396.8 457.3 397.3Z" fill="#2dbbff" stroke="#2dbbff"/><path d="M403.4 399.2 413.2 398.8 405.7 400.4 395.9 398.6Z" fill="#00abff" stroke="#00abff"/><path d="M342.0 400.0 351.7 397.0 344.3 395.1 334.5 396.2Z" fill="#57c7ff" stroke="#57c7ff"/><path d="M482.0 400.3 491.8 397.4 484.3 395.0 474.6 396.7Z" fill="#5ecbff" stroke="#5ecbff"/><path d="M420.6 399.7 430.4 398.5 422.9 399.7 413.2 398.8Z" fill="#00abff" stroke="#00abff"/><path d="M359.2 400.2 369.0 397.8 361.5 396.7 351.7 397.0Z" fill="#2bbbff" stroke="#2bbbff"/><path d="M297.8 409.6 307.6 401.6 300.1 396.8 290.3 404.0Z" fill="#88c8ff" stroke="#88c8ff"/><path d="M499.3 403.4 509.0 400.1 501.5 394.9 491.8 397.4Z" fill="#6ac6ff" stroke="#6ac6ff"/><path d="M437.9 400.3 447.6 398.4 440.1 398.5 430.4 398.5Z" fill="#0bb1ff" stroke="#0bb1ff"/><path d="M376.4 400.7 386.2 398.6 378.7 397.9 369.0 397.8Z" fill="#20b7ff" stroke="#20b7ff"/><path d="M315.0 407.1 324.8 400.4 317.3 396.0 307.6 401.6Z" fill="#83ccff" stroke="#83ccff"/><path d="M455.1 401.5 464.8 398.8 457.3 397.3 447.6 398.4Z" fill="#42c3ff" stroke="#42c3ff"/><path d="M393.7 401.4 403.4 399.2 395.9 398.6 386.2 398.6Z" fill="#1fb9ff" stroke="#1fb9ff"/><path d="M332.3 405.7 342.0 400.0 334.5 396.2 324.8 400.4Z" fill="#74caff" stroke="#74caff"/><path d="M472.3 403.7 482.0 400.3 474.6 396.7 464.8 398.8Z" fill="#5bc7ff" stroke="#5bc7ff"/><path d="M410.9 402.3 420.6 399.7 413.2 398.8 403.4 399.2Z" fill="#2ebcff" stroke="#2ebcff"/><path d="M349.5 405.0 359.2 400.2 351.7 397.0 342.0 400.0Z" fill="#70cbff" stroke="#70cbff"/><path d="M489.5 407.2 499.3 403.4 491.8 397.4 482.0 400.3Z" fill="#6fc5ff" stroke="#6fc5ff"/><path d="M428.1 403.4 437.9 400.3 430.4 398.5 420.6 399.7Z" fill="#4ac5ff" stroke="#4ac5ff"/><path d="M366.7 405.0 376.4 400.7 369.0 397.8 359.2 400.2Z" fill="#60c8ff" stroke="#60c8ff"/><path d="M305.3 415.7 315.0 407.1 307.6 401.6 297.8 409.6Z" fill="#91c6fe" stroke="#91c6fe"/><path d="M445.3 405.2 455.1 401.5 447.6 398.4 437.9 400.3Z" fill="#70ceff" stroke="#70ceff"/><path d="M383.9 405.5 393.7 401.4 386.2 398.6 376.4 400.7Z" fill="#5fc8ff" stroke="#5fc8ff"/><path d="M322.5 413.4 332.3 405.7 324.8 400.4 315.0 407.1Z" fill="#96cfff" stroke="#96cfff"/><path d="M462.6 407.8 472.3 403.7 464.8 398.8 455.1 401.5Z" fill="#72cbff" stroke="#72cbff"/><path d="M401.1 406.4 410.9 402.3 403.4 399.2 393.7 401.4Z" fill="#70cdff" stroke="#70cdff"/><path d="M339.7 411.9 349.5 405.0 342.0 400.0 332.3 405.7Z" fill="#8dcfff" stroke="#8dcfff"/><path d="M479.8 411.5 489.5 407.2 482.0 400.3 472.3 403.7Z" fill="#80c9ff" stroke="#80c9ff"/><path d="M418.4 407.8 428.1 403.4 420.6 399.7 410.9 402.3Z" fill="#69c9ff" stroke="#69c9ff"/><path d="M357.0 411.3 366.7 405.0 359.2 400.2 349.5 405.0Z" fill="#81ccff" stroke="#81ccff"/><path d="M435.6 409.8 445.3 405.2 437.9 400.3 428.1 403.4Z" fill="#73caff" stroke="#73caff"/><path d="M374.2 411.3 383.9 405.5 376.4 400.7 366.7 405.0Z" fill="#7fcdff" stroke="#7fcdff"/><path d="M312.8 422.3 322.5 413.4 315.0 407.1 305.3 415.7Z" fill="#9cc6ff" stroke="#9cc6ff"/><path d="M452.8 412.6 462.6 407.8 455.1 401.5 445.3 405.2Z" fill="#87ceff" stroke="#87ceff"/><path d="M391.4 412.0 401.1 406.4 393.7 401.4 383.9 405.5Z" fill="#87d0ff" stroke="#87d0ff"/><path d="M330.0 420.3 339.7 411.9 332.3 405.7 322.5 413.4Z" fill="#a0cdff" stroke="#a0cdff"/><path d="M470.0 416.4 479.8 411.5 472.3 403.7 462.6 407.8Z" fill="#83c4ff" stroke="#83c4ff"/><path d="M408.6 413.3 418.4 407.8 410.9 402.3 401.1 406.4Z" fill="#84ceff" stroke="#84ceff"/><path d="M347.2 419.1 357.0 411.3 349.5 405.0 339.7 411.9Z" fill="#90c9ff" stroke="#90c9ff"/><path d="M425.8 415.4 435.6 409.8 428.1 403.4 418.4 407.8Z" fill="#90d0ff" stroke="#90d0ff"/><path d="M364.4 418.6 374.2 411.3 366.7 405.0 357.0 411.3Z" fill="#99cfff" stroke="#99cfff"/><path d="M443.1 418.2 452.8 412.6 445.3 405.2 435.6 409.8Z" fill="#8fccff" stroke="#8fccff"/><path d="M381.7 418.9 391.4 412.0 383.9 405.5 374.2 411.3Z" fill="#98cfff" stroke="#98cfff"/><path d="M320.2 429.3 330.0 420.3 322.5 413.4 312.8 422.3Z" fill="#a0c1ff" stroke="#a0c1ff"/><path d="M460.3 421.9 470.0 416.4 462.6 407.8 452.8 412.6Z" fill="#8ec5ff" stroke="#8ec5ff"/><path d="M398.9 420.0 408.6 413.3 401.1 406.4 391.4 412.0Z" fill="#91ccff" stroke="#91ccff"/><path d="M337.5 427.7 347.2 419.1 339.7 411.9 330.0 420.3Z" fill="#9fc6ff" stroke="#9fc6ff"/><path d="M416.1 421.8 425.8 415.4 418.4 407.8 408.6 413.3Z" fill="#93cbff" stroke="#93cbff"/><path d="M354.7 426.8 364.4 418.6 357.0 411.3 347.2 419.1Z" fill="#a0c9ff" stroke="#a0c9ff"/><path d="M433.3 424.4 443.1 418.2 435.6 409.8 425.8 415.4Z" fill="#9acbff" stroke="#9acbff"/><path d="M371.9 426.8 381.7 418.9 374.2 411.3 364.4 418.6Z" fill="#9dc8ff" stroke="#9dc8ff"/><path d="M450.5 427.8 460.3 421.9 452.8 412.6 443.1 418.2Z" fill="#95c3ff" stroke="#95c3ff"/><path d="M389.1 427.4 398.9 420.0 391.4 412.0 381.7 418.9Z" fill="#9ec8ff" stroke="#9ec8ff"/><path d="M327.7 436.4 337.5 427.7 330.0 420.3 320.2 429.3Z" fill="#9fb9ff" stroke="#9fb9ff"/><path d="M406.4 428.9 416.1 421.8 408.6 413.3 398.9 420.0Z" fill="#9ac6ff" stroke="#9ac6ff"/><path d="M344.9 435.3 354.7 426.8 347.2 419.1 337.5 427.7Z" fill="#a5c0ff" stroke="#a5c0ff"/><path d="M423.6 431.1 433.3 424.4 425.8 415.4 416.1 421.8Z" fill="#9ec5ff" stroke="#9ec5ff"/><path d="M362.2 434.9 371.9 426.8 364.4 418.6 354.7 426.8Z" fill="#a0c0ff" stroke="#a0c0ff"/><path d="M440.8 434.1 450.5 427.8 443.1 418.2 433.3 424.4Z" fill="#97bbfe" stroke="#97bbfe"/><path d="M379.4 435.2 389.1 427.4 381.7 418.9 371.9 426.8Z" fill="#a4c3ff" stroke="#a4c3ff"/><path d="M396.6 436.3 406.4 428.9 398.9 420.0 389.1 427.4Z" fill="#9fbfff" stroke="#9fbfff"/><path d="M335.2 443.3 344.9 435.3 337.5 427.7 327.7 436.4Z" fill="#9aadff" stroke="#9aadff"/><path d="M413.8 438.1 423.6 431.1 416.1 421.8 406.4 428.9Z" fill="#9ebcff" stroke="#9ebcff"/><path d="M352.4 442.8 362.2 434.9 354.7 426.8 344.9 435.3Z" fill="#9cb1ff" stroke="#9cb1ff"/><path d="M431.1 440.5 440.8 434.1 433.3 424.4 423.6 431.1Z" fill="#97b3ff" stroke="#97b3ff"/><path d="M369.6 442.8 379.4 435.2 371.9 426.8 362.2 434.9Z" fill="#a2b7ff" stroke="#a2b7ff"/><path d="M386.9 443.5 396.6 436.3 389.1 427.4 379.4 435.2Z" fill="#9fb5ff" stroke="#9fb5ff"/><path d="M404.1 444.8 413.8 438.1 406.4 428.9 396.6 436.3Z" fill="#99afff" stroke="#99afff"/><path d="M342.7 449.7 352.4 442.8 344.9 435.3 335.2 443.3Z" fill="#9ca6ff" stroke="#9ca6ff"/><path d="M421.3 446.7 431.1 440.5 423.6 431.1 413.8 438.1Z" fill="#94a8ff" stroke="#94a8ff"/><path d="M359.9 449.7 369.6 442.8 362.2 434.9 352.4 442.8Z" fill="#a1adff" stroke="#a1adff"/><path d="M377.1 450.1 386.9 443.5 379.4 435.2 369.6 442.8Z" fill="#9facff" stroke="#9facff"/><path d="M394.3 451.0 404.1 444.8 396.6 436.3 386.9 443.5Z" fill="#9ba8ff" stroke="#9ba8ff"/><path d="M411.6 452.4 421.3 446.7 413.8 438.1 404.1 444.8Z" fill="#949fff" stroke="#949fff"/><path d="M350.2 455.3 359.9 449.7 352.4 442.8 342.7 449.7Z" fill="#8a8dff" stroke="#8a8dff"/><path d="M367.4 455.6 377.1 450.1 369.6 442.8 359.9 449.7Z" fill="#959aff" stroke="#959aff"/><path d="M384.6 456.3 394.3 451.0 386.9 443.5 377.1 450.1Z" fill="#9095ff" stroke="#9095ff"/><path d="M401.8 457.3 411.6 452.4 404.1 444.8 394.3 451.0Z" fill="#8b8eff" stroke="#8b8eff"/><path d="M357.6 459.7 367.4 455.6 359.9 449.7 350.2 455.3Z" fill="#7777fd" stroke="#7777fd"/><path d="M374.9 460.4 384.6 456.3 377.1 450.1 367.4 455.6Z" fill="#7a7afd" stroke="#7a7afd"/><path d="M392.1 461.1 401.8 457.3 394.3 451.0 384.6 456.3Z" fill="#7575fc" stroke="#7575fc"/><path d="M365.1 462.9 374.9 460.4 367.4 455.6 357.6 459.7Z" fill="#6666f6" stroke="#6666f6"/><path d="M382.3 463.6 392.1 461.1 384.6 456.3 374.9 460.4Z" fill="#6767f6" stroke="#6767f6"/><path d="M372.6 464.7 382.3 463.6 374.9 460.4 365.1 462.9Z" fill="#3939f3" stroke="#3939f3"/></svg></noscript>
<svg class="a" width="800" height="600" style="left:0;top:0" font-family="Liberation Sans" font-size="10.5">
<path d="M103.4 410.9L103.4 178.9 M372.6 517.1L723.4 435.6 M372.6 517.1L103.4 410.9 M103.4 410.9L95.3 407.7 M103.4 377.7L95.3 374.5 M103.4 344.6L95.3 341.4 M103.4 311.5L95.3 308.3 M103.4 278.3L95.3 275.1 M103.4 245.2L95.3 242.0 M103.4 212.1L95.3 208.9 M103.4 178.9L95.3 175.7 M372.6 517.1L380.7 520.3 M372.6 517.1L362.1 519.5 M416.4 506.9L424.5 510.1 M338.9 503.8L328.4 506.2 M460.3 496.7L468.4 499.9 M305.3 490.5L294.8 493.0 M504.1 486.5L512.2 489.7 M271.6 477.2L261.1 479.7 M548.0 476.3L556.1 479.5 M238.0 464.0L227.5 466.4 M591.8 466.1L599.9 469.3 M204.3 450.7L193.8 453.1 M635.7 455.9L643.8 459.1 M170.7 437.4L160.2 439.9 M679.6 445.8L687.6 448.9 M137.0 424.1L126.5 426.6 M723.4 435.6L731.5 438.8 M103.4 410.9L92.9 413.3" stroke="#000" stroke-width="1" fill="none"/>
<text x="91.4" y="411.4" text-anchor="end">-0.4</text><text x="91.4" y="378.2" text-anchor="end">-0.2</text><text x="91.4" y="345.1" text-anchor="end">0</text><text x="91.4" y="312.0" text-anchor="end">0.2</text><text x="91.4" y="278.8" text-anchor="end">0.4</text><text x="91.4" y="245.7" text-anchor="end">0.6</text><text x="91.4" y="212.6" text-anchor="end">0.8</text><text x="91.4" y="179.4" text-anchor="end">1</text><text x="386.9" y="532.9" text-anchor="middle">-8</text><text x="356.8" y="530.2" text-anchor="middle">-8</text><text x="430.7" y="522.7" text-anchor="middle">-6</text><text x="323.1" y="516.9" text-anchor="middle">-6</text><text x="474.6" y="512.5" text-anchor="middle">-4</text><text x="289.5" y="503.6" text-anchor="middle">-4</text><text x="518.4" y="502.3" text-anchor="middle">-2</text><text x="255.8" y="490.3" text-anchor="middle">-2</text><text x="562.3" y="492.1" text-anchor="middle">0</text><text x="222.2" y="477.1" text-anchor="middle">0</text><text x="606.1" y="481.9" text-anchor="middle">2</text><text x="188.5" y="463.8" text-anchor="middle">2</text><text x="650.0" y="471.7" text-anchor="middle">4</text><text x="154.9" y="450.5" text-anchor="middle">4</text><text x="693.9" y="461.6" text-anchor="middle">6</text><text x="121.2" y="437.2" text-anchor="middle">6</text><text x="737.7" y="451.4" text-anchor="middle">8</text><text x="87.6" y="424.0" text-anchor="middle">8</text>
</svg>
<div class="a" style="left:0;top:0;width:800px;height:20px;background:linear-gradient(#4a98fa 0px,#2576f0 1.5px,#0a5ae6 3px,#0052dc 6px,#0058e8 9px,#0063f6 13px,#0064f8 16px,#0054e2 18px,#0038c0 19.5px)"></div>
<svg class="a" style="left:2px;top:3px" width="13" height="13"><rect width="13" height="13" fill="#000"/><path d="M2 8 L5 6 L8 2 L10 8 L12 10 L9 9 L6 12 Z" fill="#e02000"/><path d="M6 11 L8 5 L9 9 Z" fill="#f0d000"/><path d="M1 9 L4 6 L6 7 Z" fill="#40a0a0"/></svg>
<div class="a" style="left:18px;top:4px;color:#fff;font-weight:bold;font-size:10px;line-height:13px;white-space:nowrap">Figure No. 1</div>
<div class="a" style="left:746px;top:1px;width:16px;height:17px;border:1px solid #fff;border-radius:2px;background:linear-gradient(135deg,#5d93f8,#2260e8 60%,#1f56d8)"><div class="a" style="left:3px;top:10px;width:6px;height:3px;background:#fff"></div></div>
<div class="a" style="left:764px;top:1px;width:16px;height:17px;border:1px solid #fff;border-radius:2px;background:linear-gradient(135deg,#5d93f8,#2260e8 60%,#1f56d8)"><div class="a" style="left:5px;top:3px;width:6px;height:5px;border:1px solid #fff;border-top-width:2px"></div><div class="a" style="left:2px;top:6px;width:6px;height:6px;border:1px solid #fff;border-top-width:2px;background:#2a66e8"></div></div>
<div class="a" style="left:782px;top:1px;width:16px;height:17px;border:1px solid #fff;border-radius:2px;background:linear-gradient(135deg,#f0a080,#e05a30 55%,#cc4418)"><svg class="a" style="left:2px;top:2px" width="11" height="12"><path d="M2 2 L9 10 M9 2 L2 10" stroke="#fff" stroke-width="1.6"/></svg></div>
<div class="a" style="left:0;top:20px;width:800px;height:16px;background:#ece9d8;font-size:8.5px;color:#000">
<span class="a" style="left:4px;top:3px">File</span><span class="a" style="left:26px;top:3px">Edit</span><span class="a" style="left:50px;top:3px">View</span><span class="a" style="left:76px;top:3px">Insert</span><span class="a" style="left:108px;top:3px">Tools</span><span class="a" style="left:137px;top:3px">Window</span><span class="a" style="left:176px;top:3px">Help</span></div>
<div class="a" style="left:0;top:36px;width:800px;height:1px;background:#c5c2b2"></div>
<div class="a" style="left:0;top:37px;width:800px;height:22px;background:#ece9d8;border-top:1px solid #fff"></div>
<div class="a" style="left:4px;top:39px;width:3px;height:17px;border-left:1px solid #fff;border-right:1px solid #c0bdae;background:#ece9d8"></div>
<svg class="a" style="left:0;top:37px" width="240" height="22">
<!-- new -->
<path d="M12.5 6.5 H18.5 L21.5 9.5 V16.5 H12.5 Z" fill="#fff" stroke="#000"/><path d="M18.5 6.5 V9.5 H21.5" fill="none" stroke="#000"/>
<!-- open -->
<path d="M29.5 9.5 H33 L34 8.5 H37.5 V10.5 H41 L38 15.5 H29.5 Z" fill="#c8c040" stroke="#000"/><path d="M29.5 15.5 L32 11 H41.5 L38.5 15.5 Z" fill="#e8e070" stroke="#000"/><path d="M38 7 Q40 5 41 8" fill="none" stroke="#000"/>
<!-- save -->
<rect x="49.5" y="6.5" width="11" height="10" fill="#000"/><rect x="51" y="7" width="8" height="4" fill="#fff"/><rect x="52" y="12.5" width="6" height="3.5" fill="#c8c040"/><rect x="56" y="13" width="1.5" height="2" fill="#000"/>
<!-- print -->
<path d="M70 6.5 H78 L79 9.5 H70 Z" fill="#fff" stroke="#606060"/><rect x="67.5" y="10" width="13" height="5" rx="1.5" fill="#b0b0b0" stroke="#404040"/><rect x="69" y="13" width="10" height="3" fill="#fff" stroke="#404040" stroke-width="0.8"/><rect x="75" y="12" width="3" height="1" fill="#d0c000"/>
<!-- sep -->
<rect x="85" y="3" width="1" height="16" fill="#c0bdae"/><rect x="86" y="3" width="1" height="16" fill="#fff"/>
<!-- pointer -->
<path d="M95 5.5 L95 15 L97.5 12.5 L99.5 16 L101 15.2 L99 11.8 L102 11.5 Z" fill="#000"/>
<!-- A -->
<text x="116.8" y="15.8" font-size="12.5" font-weight="bold" text-anchor="middle" font-family="Liberation Sans" fill="#000">A</text>
<!-- arrow -->
<path d="M131.5 15.5 L140 7.5" stroke="#000" stroke-width="1.5"/><path d="M135 7 H141 V13" fill="none" stroke="#000" stroke-width="1.5"/>
<!-- line -->
<path d="M150 15.5 L159.5 7" stroke="#000" stroke-width="1.5"/>
<!-- sep -->
<rect x="166" y="3" width="1" height="16" fill="#c0bdae"/><rect x="167" y="3" width="1" height="16" fill="#fff"/>
<!-- zoom in -->
<circle cx="181.5" cy="10" r="4" fill="#fff" stroke="#000" stroke-width="1.4"/><path d="M174 17 L178.5 13" stroke="#000" stroke-width="2"/><path d="M179 10 H184 M181.5 7.5 V12.5" stroke="#000" stroke-width="1.4"/>
<!-- zoom out -->
<circle cx="200.5" cy="10" r="4" fill="#fff" stroke="#000" stroke-width="1.4"/><path d="M193 17 L197.5 13" stroke="#000" stroke-width="2"/><path d="M198 10 H203" stroke="#000" stroke-width="1.4"/>
<!-- rotate -->
<circle cx="217.5" cy="11" r="5" fill="none" stroke="#909090" stroke-width="1" stroke-dasharray="1.5 1.5"/><path d="M212 6 L215 6 L213.5 8.5 Z" fill="#909090"/>
</svg>
<div class="a" style="left:0;top:572px;width:800px;height:1px;background:#e4e0d4"></div>
<div class="a" style="left:0;top:573px;width:800px;height:27px;background:linear-gradient(#3b76e0 0px,#4a8cf0 1px,#3d7fea 2px,#2f68de 3px,#3a78e6 4px,#2c64dc 6px,#2660dc 12px,#255cd8 20px,#2254cc 27px)"></div>
<div class="a" style="left:0;top:576px;width:75px;height:24px;border-radius:0 9px 9px 0;background:linear-gradient(#5ab55a 0px,#4aa84a 3px,#3c9c3c 12px,#348e34 20px,#2e802e 24px);box-shadow:inset -2px 0 3px #23692a"></div>
<svg class="a" style="left:8px;top:581px" width="15" height="14"><path d="M1.5 2.5 Q4 1 7 2 L6.5 6.5 Q3.5 5.8 1 6.8 Z" fill="#e8501a"/><path d="M7.8 2.2 Q10.5 3 13.5 2 L13 6.2 Q10 7 7.3 6.5 Z" fill="#50b030"/><path d="M1 7.5 Q3.5 6.5 6.3 7.3 L5.8 11.8 Q3 11 0.5 12 Z" fill="#2a70e0"/><path d="M7.2 7.3 Q10 7.8 12.8 7 L12.3 11.3 Q9.5 12.2 6.7 11.6 Z" fill="#f0c010"/></svg>
<div class="a" style="left:27px;top:580px;color:#fff;font-weight:bold;font-style:italic;font-size:12.5px;line-height:16px;text-shadow:1px 1px 1px #1a4a1a">пуск</div>
<svg class="a" style="left:81px;top:580px" width="6" height="18"><g fill="#1a3c9a"><rect x="1" y="1" width="2" height="2"/><rect x="2" y="4" width="2" height="2"/><rect x="1" y="7" width="2" height="2"/><rect x="2" y="10" width="2" height="2"/><rect x="1" y="13" width="2" height="2"/><rect x="2" y="16" width="2" height="2"/></g></svg>
<div class="a" style="left:91px;top:580px;width:122px;height:18px;border-radius:3px;background:#3d80f4;box-shadow:inset 1px 1px 0 #6aa2ff"></div>
<svg class="a" style="left:97px;top:582px" width="14" height="14"><path d="M1 9 L5 6 L8 1 L11 8 L13 11 L9 10 L6 13 Z" fill="#e03010"/><path d="M6 12 L8 5 L9 10 Z" fill="#f0c000"/><path d="M0 9 L4 6 L6 8 Z" fill="#40a8a0"/></svg>
<div class="a" style="left:113px;top:584px;color:#fff;font-size:8.5px;line-height:10px">MATLAB</div>
<div class="a" style="left:215px;top:580px;width:124px;height:18px;border-radius:3px;background:#1e4dbc;box-shadow:inset 1px 1px 1px #173a90"></div>
<svg class="a" style="left:223px;top:582px" width="13" height="14"><rect width="13" height="14" fill="#000"/><path d="M2 9 L5 6 L8 2 L10 8 L12 11 L9 10 L6 13 Z" fill="#e02000"/><path d="M6 12 L8 5 L9 9 Z" fill="#f0d000"/><path d="M1 9 L4 6 L6 8 Z" fill="#40a0a0"/></svg>
<div class="a" style="left:238px;top:584px;color:#fff;font-size:8.5px;line-height:10px;white-space:nowrap">Figure No. 1</div>
<div class="a" style="left:341px;top:580px;width:122px;height:18px;border-radius:3px;background:#3d80f4;box-shadow:inset 1px 1px 0 #6aa2ff"></div>
<svg class="a" style="left:347px;top:583px" width="13" height="11"><path d="M0.5 1.5 H5 L6 3 H12.5 V10.5 H0.5 Z" fill="#e8c040" stroke="#a07818"/><path d="M0.5 10.5 L2 5 H12.5 V10.5 Z" fill="#f8e090"/></svg>
<div class="a" style="left:363px;top:584px;color:#fff;font-size:8.5px;line-height:10px;white-space:nowrap">Помощь по MatLab 6.5</div>
<div class="a" style="left:465px;top:580px;width:123px;height:18px;border-radius:3px;background:#3d80f4;box-shadow:inset 1px 1px 0 #6aa2ff"></div>
<svg class="a" style="left:472px;top:582px" width="13" height="14"><rect x="3" y="1" width="9" height="12" fill="#fff" stroke="#808080"/><rect x="0.5" y="2.5" width="8" height="8" fill="#3a3aa0" stroke="#202060"/><path d="M2 4 L3 9 L4.5 5.5 L6 9 L7 4" stroke="#fff" fill="none" stroke-width="0.9"/></svg>
<div class="a" style="left:488px;top:584px;color:#fff;font-size:8.5px;line-height:10px;white-space:nowrap">Документ1 - Microso...</div>
<svg class="a" style="left:724px;top:580px" width="6" height="18"><g fill="#1a3c9a"><rect x="1" y="1" width="2" height="2"/><rect x="2" y="4" width="2" height="2"/><rect x="1" y="7" width="2" height="2"/><rect x="2" y="10" width="2" height="2"/><rect x="1" y="13" width="2" height="2"/><rect x="2" y="16" width="2" height="2"/></g></svg>
<div class="a" style="left:755px;top:576px;width:45px;height:24px;background:linear-gradient(#22a0f8 0px,#1096f2 3px,#0c8cf0 8px,#0b86ea 18px,#0a7fe0 24px);border-left:1px solid #0a5ac0"></div>
<div class="a" style="left:749px;top:581px;width:15px;height:15px;border-radius:50%;background:radial-gradient(circle at 40% 35%,#8ac0ff,#2a7cf0 60%,#1a5ad0);border:1px solid #d0e4ff"></div>
<svg class="a" style="left:749px;top:581px" width="15" height="15"><path d="M8.5 4.5 L5.5 7.5 L8.5 10.5" stroke="#fff" stroke-width="1.8" fill="none"/></svg>
<div class="a" style="left:768px;top:584px;color:#fff;font-size:8.5px;line-height:10px">15:22</div>
<svg class="a" width="800" height="600" style="left:0;top:0;pointer-events:none">
<defs><g id="lg"><rect x="-46" y="-33" width="92" height="66" rx="12" transform="rotate(-16)" fill="rgba(255,255,255,0.16)" stroke="rgba(212,230,236,0.42)" stroke-width="5"/><path d="M-22 -27 Q-10 -20 -6 -10 Q-2 -15 4 -15 L28 -10 L6 -10 Q9 0 6 12 L2 24 Q-2 14 -8 3 L-10 -2 Q-13 -14 -22 -27 Z" fill="rgba(160,160,90,0.28)"/><path d="M-49 -4 Q-30 -5 -9 -4 L-8 4 Q-30 2 -49 -4 Z" fill="rgba(220,160,160,0.3)"/><path d="M-2 -28 A32 28 0 1 1 -20 10" transform="translate(11,-2)" fill="none" stroke="rgba(205,205,110,0.42)" stroke-width="2"/><path d="M-12 22 Q10 32 36 12" fill="none" stroke="rgba(205,205,110,0.35)" stroke-width="1.2"/><path d="M-16 20 Q8 34 38 16" fill="none" stroke="rgba(220,160,160,0.35)" stroke-width="1"/></g></defs>
<use href="#lg" transform="translate(227,20)"/>
<use href="#lg" transform="translate(227,190)"/>
<use href="#lg" transform="translate(227,350)"/>
<use href="#lg" transform="translate(228,529)"/>
<text transform="translate(291,18.5) rotate(-21.5)" font-family="Liberation Serif" font-weight="bold" font-size="47" letter-spacing="1.2" fill="rgba(174,172,172,0.3)" stroke="rgba(235,165,165,0.14)" stroke-width="0.7">Stud.kz - Stud.kz</text>
<text transform="translate(291,191) rotate(-21.5)" font-family="Liberation Serif" font-weight="bold" font-size="47" letter-spacing="1.2" fill="rgba(174,172,172,0.3)" stroke="rgba(235,165,165,0.14)" stroke-width="0.7">Stud.kz - Stud.kz</text>
<text transform="translate(291,351) rotate(-21.5)" font-family="Liberation Serif" font-weight="bold" font-size="47" letter-spacing="1.2" fill="rgba(174,172,172,0.3)" stroke="rgba(235,165,165,0.14)" stroke-width="0.7">Stud.kz - Stud.kz</text>
<text transform="translate(291,528.5) rotate(-21.5)" font-family="Liberation Serif" font-weight="bold" font-size="47" letter-spacing="1.2" fill="rgba(174,172,172,0.3)" stroke="rgba(235,165,165,0.14)" stroke-width="0.7">Stud.kz - Stud.kz</text>
<text transform="translate(291,687.25) rotate(-21.5)" font-family="Liberation Serif" font-weight="bold" font-size="47" letter-spacing="1.2" fill="rgba(174,172,172,0.3)" stroke="rgba(235,165,165,0.14)" stroke-width="0.7">Stud.kz - Stud.kz</text>
</svg>
<script>
(function(){
var c=document.getElementById('cv');if(!c||!c.getContext)return;var g=c.getContext('2d');
var az=-37.5*Math.PI/180, el=30*Math.PI/180, CX=413.4, CY=307.25, SU=221.1, SV=133.9, OY=59;
var ca=Math.cos(az), sa=Math.sin(az), ce=Math.cos(el), se=Math.sin(el);
var N=151, st=16/(N-1), NN=N*N, S=1.2;
var JR=[[0, 0, 143], [0, 0, 159], [0, 0, 175], [0, 0, 191], [0, 0, 207], [0, 0, 223], [0, 0, 239], [0, 0, 255], [0, 16, 255], [0, 32, 255], [0, 48, 255], [0, 64, 255], [0, 80, 255], [0, 96, 255], [0, 112, 255], [0, 128, 255], [0, 143, 255], [0, 159, 255], [0, 175, 255], [0, 191, 255], [0, 207, 255], [0, 223, 255], [0, 239, 255], [0, 255, 255], [16, 255, 239], [32, 255, 223], [48, 255, 207], [64, 255, 191], [80, 255, 175], [96, 255, 159], [112, 255, 143], [128, 255, 128], [143, 255, 112], [159, 255, 96], [175, 255, 80], [191, 255, 64], [207, 255, 48], [223, 255, 32], [239, 255, 16], [255, 255, 0], [255, 239, 0], [255, 223, 0], [255, 207, 0], [255, 191, 0], [255, 175, 0], [255, 159, 0], [255, 143, 0], [255, 128, 0], [255, 112, 0], [255, 96, 0], [255, 80, 0], [255, 64, 0], [255, 48, 0], [255, 32, 0], [255, 16, 0], [255, 0, 0], [239, 0, 0], [223, 0, 0], [207, 0, 0], [191, 0, 0], [175, 0, 0], [159, 0, 0], [143, 0, 0], [128, 0, 0]];
var CW=Math.round(800*S), CH=Math.round(c.height*S);
var X=new Float32Array(NN), Y=new Float32Array(NN), W=new Float32Array(NN), CI=new Uint8Array(NN), zs=new Float32Array(NN), zmin=1e9, zmax=-1e9;
for(var j=0;j<N;j++)for(var i=0;i<N;i++){var x=-8+i*st,y=-8+j*st;var r=Math.sqrt(x*x+y*y)+2.220446049250313e-16;var z=Math.sin(r)/r;var k=j*N+i;zs[k]=z;if(z<zmin)zmin=z;if(z>zmax)zmax=z;
var xn=x/8,yn=y/8,zn=(z-0.3)/0.7;var u=xn*ca+yn*sa,w=-xn*sa+yn*ca,v=zn*ce+w*se;X[k]=(CX+SU*u)*S;Y[k]=(CY-SV*v-OY)*S;W[k]=w;}
for(var k=0;k<NN;k++){var ci=Math.floor((zs[k]-zmin)/(zmax-zmin)*64);if(ci>63)ci=63;if(ci<0)ci=0;CI[k]=ci;}
var q=[];for(var j=0;j<N-1;j++)for(var i=0;i<N-1;i++){var k=j*N+i;q.push([W[k]+W[k+1]+W[k+N]+W[k+N+1],k]);}
q.sort(function(a,b){return b[0]-a[0];});
var im=g.createImageData(CW,CH);var D=im.data;
function tri(x0,y0,x1,y1,x2,y2){
 var minx=Math.max(0,Math.floor(Math.min(x0,x1,x2))), maxx=Math.min(CW-1,Math.ceil(Math.max(x0,x1,x2)));
 var miny=Math.max(0,Math.floor(Math.min(y0,y1,y2))), maxy=Math.min(CH-1,Math.ceil(Math.max(y0,y1,y2)));
 var ar=(x1-x0)*(y2-y0)-(x2-x0)*(y1-y0); if(ar===0)return; var sg=ar>0?1:-1;
 for(var py=miny;py<=maxy;py++){var cy=py+0.5;for(var px=minx;px<=maxx;px++){var cx=px+0.5;
  var e0=((x1-x0)*(cy-y0)-(y1-y0)*(cx-x0))*sg, e1=((x2-x1)*(cy-y1)-(y2-y1)*(cx-x1))*sg, e2=((x0-x2)*(cy-y2)-(y0-y2)*(cx-x2))*sg;
  if(e0>=0&&e1>=0&&e2>=0){var o=(py*CW+px)*4;D[o]=255;D[o+1]=255;D[o+2]=255;D[o+3]=255;}}}
}
function line(x0,y0,x1,y1,col){
 x0=Math.floor(x0);y0=Math.floor(y0);x1=Math.floor(x1);y1=Math.floor(y1);
 var dx=Math.abs(x1-x0),dy=-Math.abs(y1-y0),sx=x0<x1?1:-1,sy=y0<y1?1:-1,err=dx+dy;
 for(;;){ if(x0>=0&&x0<CW&&y0>=0&&y0<CH){var o=(y0*CW+x0)*4;D[o]=col[0];D[o+1]=col[1];D[o+2]=col[2];D[o+3]=255;}
  if(x0===x1&&y0===y1)break; var e2=2*err; if(e2>=dy){err+=dy;x0+=sx;} if(e2<=dx){err+=dx;y0+=sy;} }
}
for(var n=0;n<q.length;n++){var k=q[n][1];var a=k,b=k+1,d=k+N+1,e=k+N;
 tri(X[a],Y[a],X[b],Y[b],X[d],Y[d]); tri(X[a],Y[a],X[d],Y[d],X[e],Y[e]);
 line(X[a],Y[a],X[b],Y[b],JR[CI[a]]); line(X[b],Y[b],X[d],Y[d],JR[CI[b]]); line(X[e],Y[e],X[d],Y[d],JR[CI[e]]); line(X[a],Y[a],X[e],Y[e],JR[CI[a]]);
}
var oc=document.createElement('canvas');oc.width=CW;oc.height=CH;oc.getContext('2d').putImageData(im,0,0);
g.imageSmoothingEnabled=true;g.imageSmoothingQuality='low';
g.drawImage(oc,0,0,CW,CH,0,0,c.width,c.height);
})();
</script>
</body></html>
